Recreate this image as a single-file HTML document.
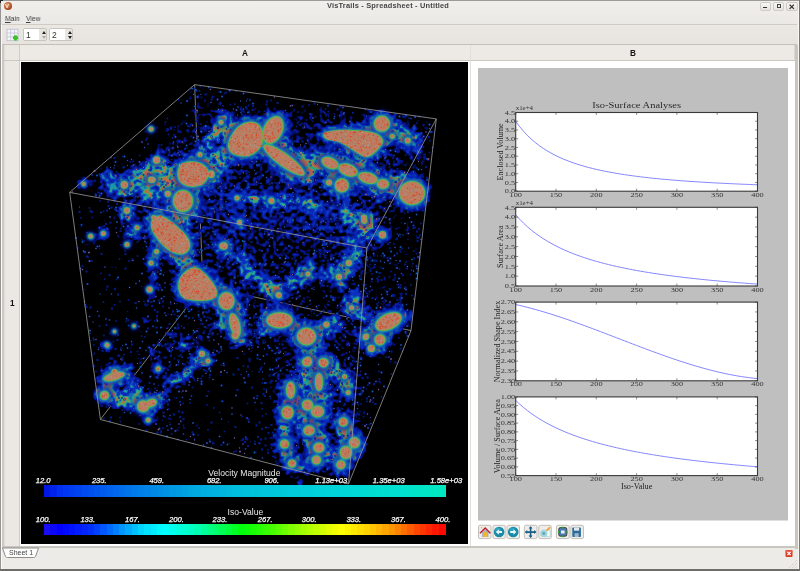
<!DOCTYPE html>
<html><head><meta charset="utf-8"><title>VisTrails - Spreadsheet - Untitled</title>
<style>
html,body{margin:0;padding:0}
body{width:800px;height:571px;overflow:hidden;position:relative;background:#edebe7;font-family:"Liberation Sans", sans-serif;}
.a{position:absolute}
.t{position:absolute;white-space:nowrap;line-height:1;will-change:transform}
svg{will-change:transform}
</style></head><body>

<div class="a" style="left:0;top:0;width:800px;height:1px;background:#9d9b97"></div>
<div class="a" style="left:0;top:0;width:1px;height:571px;background:#969594"></div>
<div class="a" style="left:798px;top:1px;width:1px;height:568px;background:#fbf8f4"></div><div class="a" style="left:799px;top:0;width:1px;height:571px;background:#7a7672"></div>
<div class="a" style="left:0;top:569px;width:800px;height:2px;background:#6f6d6a"></div>
<div class="a" style="left:0;top:0;width:3px;height:3px;background:#222"></div>
<div class="a" style="left:2px;top:25px;width:796px;height:19px;background:linear-gradient(#ebe8e4,#e7e4df)"></div>
<div class="a" style="left:1px;top:1px;width:797px;height:23px;background:linear-gradient(#f1efec,#ebe9e5)"></div>
<div class="a" style="left:4px;top:2px;width:8px;height:8px;border-radius:50%;background:radial-gradient(circle at 40% 35%,#e8a070,#a04418 70%,#5a2008)"></div>
<div class="t" style="left:5px;top:3px;font-size:6px;font-weight:bold;color:#f5e8dc">V</div>
<div class="t" style="left:326.5px;top:2px;font-size:7.4px;font-weight:bold;color:#454545;letter-spacing:0.2px">VisTrails - Spreadsheet - Untitled</div>
<div class="a" style="left:759.5px;top:2px;width:11.5px;height:8.8px;border:1px solid #cfccc7;border-radius:2px;background:linear-gradient(#f8f7f5,#e6e3de);box-sizing:border-box"></div>
<div class="a" style="left:772.8px;top:2px;width:11.5px;height:8.8px;border:1px solid #cfccc7;border-radius:2px;background:linear-gradient(#f8f7f5,#e6e3de);box-sizing:border-box"></div>
<div class="a" style="left:786px;top:2px;width:11.5px;height:8.8px;border:1px solid #cfccc7;border-radius:2px;background:linear-gradient(#f8f7f5,#e6e3de);box-sizing:border-box"></div>
<div class="a" style="left:763.3px;top:7px;width:4.2px;height:1.2px;background:#333"></div>
<div class="a" style="left:776.5px;top:4px;width:4.5px;height:3.6px;border:1px solid #444;border-top-width:1.6px;box-sizing:border-box"></div>
<svg class="a" style="left:786px;top:2px" width="12" height="9"><path d="M3.6 2.6 L7.9 6.9 M7.9 2.6 L3.6 6.9" stroke="#333" stroke-width="1.3"/></svg>
<div class="t" style="left:5.2px;top:15.2px;font-size:7.6px;color:#404040;transform:scaleX(0.89);transform-origin:0 0"><span style="text-decoration:underline;text-underline-offset:0.5px">M</span>ain</div>
<div class="t" style="left:25.6px;top:15.2px;font-size:7.6px;color:#404040;transform:scaleX(0.89);transform-origin:0 0"><span style="text-decoration:underline;text-underline-offset:0.5px">V</span>iew</div>
<div class="a" style="left:2px;top:24px;width:795px;height:1px;background:#cfcbc5"></div>
<svg class="a" style="left:6px;top:28px" width="14" height="14"><rect x="1" y="1.2" width="11" height="11.5" fill="#f4f4fb" stroke="#b9b9c8" stroke-width="0.8"/><path d="M4.7 1.2V12.7 M8.4 1.2V12.7 M1 5H12 M1 8.8H12" stroke="#c4c4d4" stroke-width="0.8"/><path d="M9.5 7.2 V12.4 M6.9 9.8 H12.1" stroke="#3cc028" stroke-width="2.8"/></svg>
<div class="a" style="left:23px;top:28px;width:24px;height:13px;border:1px solid #c8c4be;border-radius:2px;background:#e9e6e1;box-sizing:border-box"></div>
<div class="a" style="left:24px;top:29px;width:15px;height:11px;background:#fff"></div>
<div class="t" style="left:25.5px;top:30.5px;font-size:8.5px;color:#333">1</div>
<div class="a" style="left:42px;top:31px;width:0;height:0;border-left:2.5px solid transparent;border-right:2.5px solid transparent;border-bottom:3px solid #222"></div>
<div class="a" style="left:42px;top:36px;width:0;height:0;border-left:2.5px solid transparent;border-right:2.5px solid transparent;border-top:3px solid #aaa"></div>
<div class="a" style="left:49px;top:28px;width:24px;height:13px;border:1px solid #c8c4be;border-radius:2px;background:#e9e6e1;box-sizing:border-box"></div>
<div class="a" style="left:50px;top:29px;width:15px;height:11px;background:#fff"></div>
<div class="t" style="left:51.5px;top:30.5px;font-size:8.5px;color:#333">2</div>
<div class="a" style="left:68px;top:31px;width:0;height:0;border-left:2.5px solid transparent;border-right:2.5px solid transparent;border-bottom:3px solid #222"></div>
<div class="a" style="left:68px;top:36px;width:0;height:0;border-left:2.5px solid transparent;border-right:2.5px solid transparent;border-top:3px solid #222"></div>
<div class="a" style="left:2px;top:44px;width:795px;height:1px;background:#c3bfb9"></div>
<div class="a" style="left:3px;top:45px;width:792px;height:15px;background:#edeae6"></div>
<div class="a" style="left:2px;top:60px;width:793px;height:1px;background:#cdc8c2"></div>
<div class="a" style="left:2px;top:45px;width:17px;height:502px;background:#ebe8e4"></div>
<div class="a" style="left:19px;top:45px;width:1px;height:502px;background:#d2cdc7"></div>
<div class="a" style="left:2px;top:45px;width:2px;height:502px;background:#cdc9c4"></div>
<div class="a" style="left:4px;top:45px;width:1px;height:502px;background:#e0dcd8"></div>
<div class="a" style="left:2px;top:60px;width:18px;height:1px;background:#cdc8c2"></div>
<div class="a" style="left:1px;top:25px;width:1px;height:544px;background:#fbfaf9"></div>
<div class="a" style="left:20px;top:61px;width:775px;height:486px;background:#fff"></div>
<div class="a" style="left:469.5px;top:45px;width:1px;height:502px;background:#e2ded9"></div>
<div class="a" style="left:794px;top:45px;width:1px;height:15px;background:#dad6d0"></div>
<div class="a" style="left:795px;top:45px;width:3px;height:504px;background:#c9c5bf"></div>
<div class="a" style="left:2px;top:546px;width:796px;height:2px;background:#c9c5bf"></div>
<div class="t" style="left:242px;top:49.5px;font-size:8.2px;font-weight:bold;color:#111">A</div>
<div class="t" style="left:629.6px;top:49.5px;font-size:8.2px;font-weight:bold;color:#111">B</div>
<div class="t" style="left:9.5px;top:300px;font-size:8.2px;font-weight:bold;color:#111">1</div>
<svg class="a" style="left:0;top:546px" width="60" height="14"><path d="M2.5 2 L5.5 10.5 Q6 11.5 7.5 11.5 L33.5 11.5 Q35 11.5 35.5 10.5 L38.5 2 Z" fill="#fff" stroke="#8f8c88" stroke-width="1"/></svg>
<div class="t" style="left:8.5px;top:549.3px;font-size:7px;color:#444">Sheet 1</div>
<svg class="a" style="left:784px;top:548px" width="11" height="11"><rect x="1.5" y="2" width="7" height="7" rx="1" fill="#d83a22"/><rect x="1.5" y="2" width="7" height="3" rx="1" fill="#ee6048" opacity="0.7"/><path d="M3.4 3.9 L6.6 7.1 M6.6 3.9 L3.4 7.1" stroke="#fff" stroke-width="1.3"/></svg>
<svg class="a" style="left:786px;top:557px" width="12" height="12"><path d="M11 3 L3 11 M11 6 L6 11 M11 9 L9 11" stroke="#c8c4be" stroke-width="0.9" stroke-dasharray="1 1"/></svg>
<svg class="a" style="left:21px;top:62px" width="447" height="482" viewBox="21 62 447 482">
<defs><filter id="b6" x="-50%" y="-50%" width="200%" height="200%"><feGaussianBlur stdDeviation="5"/></filter><filter id="b3" x="-50%" y="-50%" width="200%" height="200%"><feGaussianBlur stdDeviation="2.2"/></filter><filter id="b1" x="-50%" y="-50%" width="200%" height="200%"><feGaussianBlur stdDeviation="0.9"/></filter><filter id="b0" x="-50%" y="-50%" width="200%" height="200%"><feGaussianBlur stdDeviation="0.5"/></filter></defs>
<rect x="21" y="62" width="447" height="482" fill="#000"/>
<defs><filter id="iso" filterUnits="userSpaceOnUse" x="22" y="62" width="446" height="482" color-interpolation-filters="sRGB"><feTurbulence type="fractalNoise" baseFrequency="0.3" numOctaves="3" seed="11" result="n"/><feColorMatrix in="n" type="matrix" values="0 0 0 0 0  0 0 0 0 0  0 0 0 0 0  3.0 0 0 0 -1.000" result="na"/><feGaussianBlur in="SourceAlpha" stdDeviation="2" result="d"/><feComposite in="na" in2="d" operator="arithmetic" k1="0" k2="0.4" k3="0.62" k4="0" result="S0"/><feGaussianBlur in="S0" stdDeviation="0.8" result="S"/><feComponentTransfer in="S" result="l1a"><feFuncA type="linear" slope="14" intercept="-5.880"/></feComponentTransfer><feFlood flood-color="#06128a" result="l1c"/><feComposite in="l1c" in2="l1a" operator="in" result="l1"/><feComponentTransfer in="S" result="l2a"><feFuncA type="linear" slope="14" intercept="-7.140"/></feComponentTransfer><feFlood flood-color="#0a2ec0" result="l2c"/><feComposite in="l2c" in2="l2a" operator="in" result="l2"/><feComponentTransfer in="S" result="l3a"><feFuncA type="linear" slope="14" intercept="-8.680"/></feComponentTransfer><feFlood flood-color="#1a98a8" result="l3c"/><feComposite in="l3c" in2="l3a" operator="in" result="l3"/><feComponentTransfer in="S" result="l4a"><feFuncA type="linear" slope="14" intercept="-9.800"/></feComponentTransfer><feFlood flood-color="#50b050" result="l4c"/><feComposite in="l4c" in2="l4a" operator="in" result="l4"/><feComponentTransfer in="S" result="l5a"><feFuncA type="linear" slope="14" intercept="-10.500"/></feComponentTransfer><feFlood flood-color="#c06848" result="l5c"/><feComposite in="l5c" in2="l5a" operator="in" result="l5"/><feMerge><feMergeNode in="l1"/><feMergeNode in="l2"/><feMergeNode in="l3"/><feMergeNode in="l4"/><feMergeNode in="l5"/></feMerge></filter></defs>
<mask id="vm" maskUnits="userSpaceOnUse" x="22" y="62" width="446" height="482"><rect x="22" y="62" width="446" height="482" fill="#fff"/><g fill="#000" filter="url(#b6)"><ellipse cx="118" cy="290" rx="30" ry="55"/><ellipse cx="120" cy="140" rx="45" ry="22"/><ellipse cx="160" cy="110" rx="25" ry="15"/><ellipse cx="228" cy="408" rx="42" ry="32"/><ellipse cx="400" cy="415" rx="28" ry="50"/><ellipse cx="285" cy="97" rx="70" ry="7"/><ellipse cx="120" cy="425" rx="25" ry="15"/><ellipse cx="85" cy="215" rx="15" ry="25"/></g></mask>
<defs><g id="dens"><g mask="url(#vm)"><g filter="url(#b3)"><g fill="#fff" filter="url(#b6)"><path d="M194.6 84.6 L436.3 118.9 L411 330.6 L348.5 484 L100.4 419.5 L69.7 192.4Z" fill-opacity="0.160"/><path d="M194.6 84.6 L436.3 118.9 L366.9 248 L69.7 192.4Z" fill-opacity="0.160"/><path d="M120 160 L250 110 L430 130 L430 230 L380 250 L240 235 L150 250Z" fill-opacity="0.100"/><path d="M200 220 L380 240 L420 300 L380 345 L270 330 L215 300Z" fill-opacity="0.120"/><path d="M265 335 L360 330 L372 420 L355 478 L275 475 L268 420Z" fill-opacity="0.180"/><path d="M130 180 L230 180 L250 300 L240 350 L190 300 L140 250Z" fill-opacity="0.140"/><path d="M225 188 L362 200 L380 260 L300 290 L230 270Z" fill-opacity="0.120"/></g><g fill="#fff" opacity="1.0"><path d="M99 236h0M123.0 330.5h0M176.5 335.0h0M224.0 319.5h0" stroke="#fff" stroke-width="1.0" stroke-opacity="0.4" stroke-linecap="round" fill="none"/><path d="M150.5 352.5h0M192 333h0M189.0 339.5h0M181 342h0M219.5 323.0h0M242.5 308.5h0M125.5 273.0h0" stroke="#fff" stroke-width="1.0" stroke-opacity="0.6" stroke-linecap="round" fill="none"/><path d="M173.0 333.5h0M216.5 327.5h0M222.5 324.0h0" stroke="#fff" stroke-width="1.0" stroke-opacity="0.8" stroke-linecap="round" fill="none"/><path d="M223 323h0M200.5 361.0h0" stroke="#fff" stroke-width="1.0" stroke-opacity="1.0" stroke-linecap="round" fill="none"/><path d="M138.0 193.5h0M166.5 175.0h0M218.5 147.0h0M259 132h0M273 169h0M367.5 165.0h0M407 152h0M142.0 180.5h0M158.5 189.0h0M180 251h0M225.5 309.0h0M245.0 335.5h0M250 333h0M309.5 350.5h0M284.5 421.0h0M383.5 343.5h0M131.5 379.0h0M153.0 398.5h0M208 361h0M142.0 304.5h0M149.5 292.0h0M135.5 316.5h0M145.0 296.5h0M120.0 333.5h0M133.0 242.5h0M205.5 147.5h0M268.5 205.0h0M106 397h0M113 337h0M139.5 358.0h0M184.5 338.5h0M168.5 348.5h0M185 348h0M233.5 313.5h0M95 297h0" stroke="#fff" stroke-width="1.5" stroke-opacity="0.4" stroke-linecap="round" fill="none"/><path d="M110 189h0M117.5 189.0h0M118 191h0M128 183h0M183 171h0M255.5 138.0h0M266 120h0M275 132h0M288 147h0M269.0 129.5h0M296.0 179.5h0M319 160h0M353.5 165.0h0M409.0 193.5h0M234.5 129.5h0M405.5 136.5h0M381.0 126.5h0M386 133h0M142.0 116.5h0M164.0 170.5h0M213.0 299.5h0M298.5 323.5h0M365.5 321.0h0M345 272h0M333.0 278.5h0M317.0 359.5h0M300.5 373.5h0M299.5 392.0h0M315.5 409.5h0M302 459h0M286.0 443.5h0M348.5 455.5h0M382.5 332.5h0M336.0 374.5h0M337.0 378.5h0M130.0 372.5h0M130 378h0M185.5 372.5h0M233 263h0M236.5 258.0h0M292 291h0M152.0 255.5h0M138.5 299.0h0M150 283h0M128.5 326.0h0M128 323h0M116.0 333.5h0M129.5 235.0h0M99.5 238.5h0M266 208h0M292.5 208.5h0M370 219h0M112.5 369.0h0M116 378h0M108 390h0M133 411h0M150.0 353.5h0M127.0 368.5h0M142.5 356.5h0M141 355h0M176.5 347.0h0M191.5 335.0h0M191.5 342.0h0M207 356h0M203.5 329.0h0M94.5 294.5h0M128.0 271.5h0" stroke="#fff" stroke-width="1.5" stroke-opacity="0.6" stroke-linecap="round" fill="none"/><path d="M126.0 180.5h0M230.0 141.5h0M254.0 128.5h0M280.0 167.5h0M340 170h0M339.0 164.5h0M390.5 137.0h0M160.5 155.0h0M172.5 235.0h0M175.5 243.5h0M307.5 330.5h0M315.0 324.5h0M371 315h0M417.0 310.5h0M342.0 288.5h0M303.5 389.5h0M336 374h0M324.5 455.5h0M277.0 421.5h0M281.0 423.5h0M348.5 434.0h0M357.5 438.0h0M384 341h0M106.5 381.5h0M181.5 386.0h0M189 375h0M179.5 377.5h0M195.5 361.5h0M145.5 285.5h0M140.5 308.5h0M130.0 326.5h0M117 330h0M125.5 326.5h0M111.5 337.0h0M121.5 242.0h0M120.5 235.0h0M110.5 238.0h0M124.5 241.5h0M125.5 240.5h0M210.5 140.0h0M209 136h0M374.0 231.5h0M115.0 373.5h0M105.5 377.5h0M137.5 403.5h0M110.0 341.5h0M147.0 355.5h0M156.0 355.5h0M233.0 310.5h0" stroke="#fff" stroke-width="1.5" stroke-opacity="0.8" stroke-linecap="round" fill="none"/><path d="M352 134h0M408.5 134.5h0M397.5 140.0h0M155 128h0M159.5 183.0h0M199 262h0M240.5 319.5h0M353.5 287.5h0M349 284h0M301.5 372.0h0M313 369h0M322.5 458.5h0M293.5 448.5h0M340.0 456.5h0M379.5 348.0h0M377.5 343.0h0M366.5 330.0h0M143.0 398.5h0M202 352h0M155.0 256.5h0M151 282h0M132.5 326.5h0M136.0 231.5h0M221.5 125.0h0M247.0 195.5h0M108 387h0M138 400h0M137.5 408.0h0M131.5 325.5h0M173 344h0M181 375h0M236.5 310.5h0" stroke="#fff" stroke-width="1.5" stroke-opacity="1.0" stroke-linecap="round" fill="none"/><path d="M148.0 176.5h0M186.5 171.5h0M215.5 172.0h0M229 148h0M210.5 169.0h0M243 157h0M226.5 156.0h0M259.5 135.0h0M248 133h0M249.5 144.0h0M281.5 149.5h0M283.0 152.5h0M370 180h0M237.5 135.0h0M228.0 131.5h0M375 122h0M355 138h0M398.0 137.5h0M392.5 140.5h0M154.5 161.5h0M154 181h0M158 199h0M181.5 197.5h0M179.5 221.0h0M179.5 216.0h0M192.5 272.0h0M197.5 273.0h0M184.5 257.5h0M200 283h0M244.5 334.5h0M237.5 348.0h0M275 324h0M335 322h0M368 311h0M391 316h0M356.0 249.5h0M350 301h0M345.0 289.5h0M309.5 386.5h0M299 405h0M282 437h0M287.5 426.0h0M109.5 384.0h0M122.5 374.5h0M143.5 396.5h0M139.0 390.5h0M167.5 390.0h0M244 259h0M270.5 280.0h0M288.0 281.5h0M302.5 282.5h0M149.5 259.5h0M121.5 329.0h0M124.0 207.5h0M121.5 241.0h0M213.5 125.5h0M348.5 217.5h0M112.5 339.0h0M137.5 362.5h0M128.0 368.5h0M180 376h0M165 383h0M122.5 272.5h0M125 274h0" stroke="#fff" stroke-width="2.0" stroke-opacity="0.4" stroke-linecap="round" fill="none"/><path d="M118 196h0M114.5 187.5h0M103.5 194.5h0M106.5 196.0h0M126.5 185.0h0M137.5 180.0h0M164.5 176.5h0M154 175h0M171.5 170.5h0M164 196h0M185 172h0M187.5 170.0h0M203 183h0M218.5 172.5h0M213 171h0M216.5 162.5h0M211.5 164.0h0M217.0 159.5h0M262.0 139.5h0M261 131h0M270.5 132.0h0M259 130h0M272 140h0M267.0 139.5h0M270 138h0M277.0 139.5h0M279.0 132.5h0M295 169h0M291.5 152.5h0M312 155h0M336 152h0M340.5 159.5h0M373.0 173.5h0M372.5 174.0h0M396 179h0M400.5 172.5h0M241.5 133.5h0M242.5 136.0h0M226.0 123.5h0M336.5 137.5h0M356 133h0M385 129h0M407.5 142.0h0M392.5 135.5h0M421.5 161.0h0M157.0 139.5h0M146.0 169.5h0M153.5 184.5h0M142.5 192.5h0M181 195h0M172.0 212.5h0M184.0 216.5h0M184.5 209.5h0M188.5 225.5h0M190 275h0M193 275h0M180 261h0M178.5 246.0h0M208.5 281.0h0M192 288h0M216.0 296.5h0M184.5 290.5h0M201.5 282.5h0M232.5 329.5h0M232.5 298.0h0M243.0 338.5h0M246.0 325.5h0M245.5 344.0h0M271.5 325.5h0M288 322h0M321.5 325.5h0M311 331h0M366.5 314.5h0M356.0 306.5h0M369.5 318.0h0M356.5 317.0h0M398.0 313.5h0M373 231h0M368 225h0M348 255h0M305 398h0M314.5 383.0h0M318.5 409.0h0M306.0 391.5h0M311.5 418.5h0M319.5 429.0h0M310.5 456.0h0M278.5 382.5h0M294.5 404.5h0M288.0 424.5h0M284 418h0M277 437h0M285 443h0M276 446h0M289.5 443.5h0M354.0 427.5h0M377.0 339.5h0M365.0 338.5h0M353 372h0M116.0 371.5h0M142.5 398.5h0M135 393h0M138.5 403.5h0M164 387h0M173.0 387.5h0M183 371h0M201.0 351.5h0M266.0 287.5h0M153.5 277.5h0M150.5 278.5h0M136.5 322.5h0M126.5 223.5h0M98.5 238.5h0M104 242h0M120 241h0M204 139h0M218 128h0M251.5 202.5h0M269 203h0M343.5 211.0h0M369 238h0M112.5 387.5h0M122.5 333.0h0M167.5 333.5h0M132.0 362.5h0M158.0 341.5h0M176.5 343.5h0M223 324h0M185.5 345.0h0M183.5 373.0h0M173.0 383.5h0M247 299h0M202.5 334.5h0M248.5 302.5h0M220 322h0" stroke="#fff" stroke-width="2.0" stroke-opacity="0.6" stroke-linecap="round" fill="none"/><path d="M105 192h0M154 176h0M143.5 193.5h0M180.0 179.5h0M186 173h0M184.0 157.5h0M180.5 158.5h0M206 172h0M221.5 161.5h0M219.5 164.0h0M234.5 143.0h0M231.5 152.0h0M263.5 134.0h0M271.5 124.0h0M282.5 135.0h0M299.0 173.5h0M291.5 162.0h0M295.5 170.5h0M308.0 160.5h0M319 182h0M307.5 154.0h0M331 169h0M375 186h0M377.0 169.5h0M374 178h0M412.5 201.5h0M228.5 137.0h0M237.5 147.5h0M235.0 134.5h0M249 136h0M235 133h0M335.0 133.5h0M346.0 147.5h0M367.5 135.0h0M413.5 150.0h0M413.0 158.5h0M400 132h0M149.0 141.5h0M152.0 140.5h0M150.0 166.5h0M151.5 144.5h0M146 170h0M148.5 184.0h0M159.5 191.5h0M162 190h0M179.0 204.5h0M171.5 194.5h0M182.5 212.5h0M158.0 190.5h0M174.5 195.0h0M181.0 211.5h0M169.0 222.5h0M163.5 214.0h0M203.5 278.5h0M180.0 259.5h0M173.0 231.5h0M174 252h0M166.5 235.0h0M199.0 290.5h0M212.5 306.5h0M222.0 303.5h0M238.5 330.0h0M241.0 333.5h0M225 332h0M233.5 331.0h0M264 330h0M285.0 327.5h0M301 328h0M320 325h0M347.0 306.5h0M362.5 311.0h0M384 319h0M353.5 308.0h0M386.0 311.5h0M416 307h0M374 237h0M344.0 252.5h0M339 284h0M313.5 351.5h0M312.5 366.5h0M310.0 387.5h0M309 411h0M325.0 468.5h0M310.5 455.5h0M295.5 418.5h0M281.5 426.0h0M283.5 465.0h0M351.0 442.5h0M343.5 460.5h0M379.5 346.0h0M374 343h0M369.5 341.0h0M324 366h0M138 378h0M177.0 384.5h0M183 371h0M263 282h0M312.5 273.0h0M148.5 288.5h0M155.5 254.5h0M150.5 274.5h0M145.5 301.5h0M136 318h0M125.5 230.0h0M123.5 216.0h0M125.0 227.5h0M128.0 226.5h0M96.5 237.5h0M120.5 240.5h0M204 151h0M202.5 148.5h0M277.0 197.5h0M241.5 212.5h0M234.5 198.5h0M242.5 198.5h0M338 216h0M113.5 385.5h0M108.0 383.5h0M119.5 400.5h0M116.5 400.5h0M168.5 338.5h0M135.0 360.5h0M174.5 334.0h0M166.0 352.5h0M195.5 342.0h0M225.5 320.5h0M231.5 312.0h0M204.5 330.0h0" stroke="#fff" stroke-width="2.0" stroke-opacity="0.8" stroke-linecap="round" fill="none"/><path d="M192 174h0M198.5 185.5h0M204.0 174.5h0M191.0 173.5h0M213.0 159.5h0M250 147h0M271 126h0M303 176h0M298.5 176.5h0M344.0 161.5h0M345.5 173.5h0M351.5 125.5h0M388.5 122.0h0M405.0 145.5h0M421 144h0M165.5 161.0h0M162.5 221.0h0M198.5 278.0h0M269.0 334.5h0M273.0 325.5h0M311.0 335.5h0M350.5 313.5h0M362.5 308.0h0M391.5 330.0h0M407.5 316.5h0M373.5 227.5h0M354.5 256.0h0M309.5 343.5h0M311.0 356.5h0M302.0 449.5h0M288.0 414.5h0M337.0 426.5h0M343.5 445.5h0M344.0 451.5h0M369.5 348.5h0M150.0 404.5h0M151.0 402.5h0M154.5 396.5h0M150.0 271.5h0M137 322h0M127.5 213.0h0M129.0 213.5h0M132.0 245.5h0M120.0 238.5h0M94.0 237.5h0M334.0 212.5h0M108.5 385.0h0M131.5 403.0h0M121.0 405.5h0M147.0 316.5h0M147.0 349.5h0M194 340h0M215.5 352.5h0" stroke="#fff" stroke-width="2.0" stroke-opacity="1.0" stroke-linecap="round" fill="none"/><path d="M177.5 170.5h0M213.5 186.5h0M205.0 165.5h0M231 143h0M225.5 165.0h0M230 155h0M272 124h0M276.0 161.5h0M290.0 175.5h0M325.5 163.5h0M303.0 173.5h0M303.5 166.0h0M391.0 185.5h0M355.0 137.5h0M376 137h0M367.5 140.5h0M370.5 127.5h0M154.5 164.0h0M184.0 193.5h0M175.5 219.5h0M179 258h0M306.5 337.5h0M302.0 347.5h0M310.5 334.5h0M417 319h0M353.0 303.5h0M353.5 303.0h0M342.5 425.0h0M361.5 450.5h0M349.0 458.5h0M369 335h0M327.5 366.0h0M104.5 381.5h0M182.5 364.0h0M251.5 272.5h0M134.0 323.5h0M119 330h0M112 333h0M126.5 239.0h0M130.5 239.0h0M116.5 374.0h0M106.5 378.0h0M170.5 346.5h0M190.5 367.0h0M213.5 328.0h0M199.5 331.0h0M235 309h0M111.5 281.0h0" stroke="#fff" stroke-width="2.5" stroke-opacity="0.4" stroke-linecap="round" fill="none"/><path d="M139.0 184.5h0M127.5 186.5h0M154.5 168.0h0M177.0 176.5h0M182.5 165.0h0M171 175h0M218 171h0M234.5 158.0h0M227 161h0M212.5 168.5h0M234.5 153.5h0M232.5 143.5h0M255.5 139.0h0M260.5 138.5h0M278.5 117.5h0M282.5 138.5h0M350.5 168.0h0M364 181h0M360.5 167.5h0M377.0 184.5h0M366.5 178.0h0M398.5 195.5h0M392 190h0M349.5 135.5h0M394 128h0M407.0 126.5h0M413.5 149.0h0M154 164h0M148.5 144.5h0M164.5 140.5h0M151 151h0M146.0 169.5h0M149.0 183.5h0M141.5 187.5h0M159 193h0M158.5 191.0h0M161.5 230.0h0M197.5 268.0h0M202.5 309.0h0M196.5 294.0h0M218.5 303.0h0M221.5 290.5h0M235.0 316.5h0M234.5 332.0h0M238.5 346.0h0M239 346h0M269.0 331.5h0M286 326h0M329 322h0M360.5 235.0h0M332.5 287.0h0M308.5 359.5h0M306.0 395.5h0M311 372h0M314 391h0M324 440h0M304.0 417.5h0M310.5 441.5h0M329.5 462.5h0M314.5 460.5h0M285.5 420.5h0M285.0 382.5h0M348.5 427.5h0M361.0 432.5h0M348.5 449.0h0M342.0 452.5h0M376.0 344.5h0M373 345h0M332.5 367.5h0M353.5 379.5h0M147 406h0M160 389h0M165 402h0M181.0 382.5h0M185.0 384.5h0M199.0 367.5h0M245.5 266.5h0M253.0 269.5h0M282.5 291.5h0M328.5 281.5h0M156.0 263.5h0M125 244h0M135.5 241.0h0M107.5 238.0h0M117.5 243.0h0M216.0 131.5h0M220.5 120.5h0M218.0 129.5h0M294.5 203.5h0M113.5 369.5h0M110.5 375.0h0M142.0 403.5h0M127.5 403.5h0M138 406h0M117.5 335.5h0M108 345h0M179.5 338.0h0M202.0 358.5h0M165.0 387.5h0M233.0 312.5h0" stroke="#fff" stroke-width="2.5" stroke-opacity="0.6" stroke-linecap="round" fill="none"/><path d="M113.5 190.0h0M108 179h0M112.5 181.0h0M134.0 182.5h0M149.5 188.5h0M163.5 177.5h0M173.5 163.5h0M200.5 168.5h0M221.5 168.0h0M231.5 150.0h0M226.5 162.5h0M228.5 163.5h0M242 147h0M256.5 142.0h0M253 142h0M253 141h0M280 147h0M284.5 151.5h0M275.5 129.0h0M275 151h0M353.5 172.0h0M340 168h0M381.0 186.5h0M378.5 193.0h0M232.5 130.5h0M239.5 138.5h0M241.5 133.0h0M348.5 138.0h0M353 136h0M336 138h0M373 122h0M373.5 126.5h0M370.5 130.0h0M415 148h0M416 148h0M151 144h0M139.0 177.5h0M149 188h0M159.5 178.0h0M175.5 195.0h0M178.0 229.5h0M184.5 202.5h0M175 229h0M195.0 261.5h0M194.5 272.5h0M170.5 249.0h0M172.5 241.5h0M177.5 246.5h0M226.5 293.5h0M214.0 297.5h0M235.5 294.0h0M228.5 336.5h0M237.5 336.0h0M246.5 343.0h0M245.0 346.5h0M285 325h0M378.5 324.0h0M363 306h0M338.5 283.5h0M304.5 344.0h0M311.5 327.0h0M308.5 414.0h0M316.5 406.5h0M304.5 401.0h0M313.0 411.5h0M312 406h0M312.5 435.0h0M317.5 447.0h0M308.5 468.0h0M317 472h0M295.5 464.5h0M287.0 427.5h0M343 456h0M352 465h0M189.5 375.0h0M346.5 273.5h0M152 283h0M141.5 302.5h0M144.5 295.0h0M115 328h0M105.5 345.5h0M126 225h0M124 232h0M136.0 233.5h0M127.0 240.5h0M134.5 232.0h0M202 151h0M204.5 151.0h0M267.5 197.5h0M263.5 199.0h0M307.0 204.5h0M276.5 204.0h0M272.5 205.0h0M325.0 199.5h0M107.0 385.5h0M119.5 405.5h0M139 403h0M156.0 345.5h0M201 327h0M185.5 349.5h0M200 334h0M219.5 320.0h0" stroke="#fff" stroke-width="2.5" stroke-opacity="0.8" stroke-linecap="round" fill="none"/><path d="M107 190h0M107.0 182.5h0M133.5 182.0h0M139.5 186.0h0M151.5 180.5h0M173.0 164.5h0M217.5 168.5h0M227.0 150.5h0M244 135h0M340 165h0M387.5 173.5h0M411.5 134.5h0M392.5 131.5h0M162.5 186.0h0M161.5 179.0h0M172 196h0M209.5 289.0h0M226.0 298.5h0M219.5 284.0h0M248.0 355.5h0M230 326h0M307.0 325.5h0M289.0 341.5h0M305.0 331.5h0M366.0 218.5h0M279.5 410.0h0M298.5 427.5h0M352 439h0M365.5 337.5h0M120 380h0M123.0 373.5h0M188.0 374.5h0M330.5 282.0h0M147.5 286.5h0M123.5 218.0h0M128 226h0M130.5 240.0h0M215 129h0M383 234h0M132.0 406.5h0M192.5 365.0h0" stroke="#fff" stroke-width="2.5" stroke-opacity="1.0" stroke-linecap="round" fill="none"/><path d="M155.0 175.5h0M172.5 179.0h0M222.5 154.0h0M251.5 144.5h0M276.5 129.0h0M289 170h0M346.5 160.0h0M355.0 136.5h0M371.0 123.5h0M369.0 138.5h0M384.5 119.5h0M381 129h0M170 187h0M205.5 291.5h0M255.5 337.5h0M354.5 252.0h0M349.0 260.5h0M354.5 279.5h0M305.5 339.0h0M301.5 371.0h0M319.5 438.5h0M344.5 434.0h0M344.0 454.5h0M382 344h0M138 383h0M149.5 401.0h0M179.5 386.0h0M174.0 377.5h0M245.5 272.0h0M311.0 282.5h0M156.0 265.5h0M213 132h0M291 202h0M291.5 201.5h0M269.5 199.5h0M297.5 198.0h0M106.0 397.5h0M115.0 405.5h0M127.5 398.5h0M147.5 315.5h0M124.0 333.5h0M123.5 332.5h0M188 372h0M181.5 376.0h0" stroke="#fff" stroke-width="3.0" stroke-opacity="0.4" stroke-linecap="round" fill="none"/><path d="M134.5 185.0h0M152.5 182.5h0M167.0 180.5h0M156 163h0M167 185h0M189 178h0M248 149h0M245.5 137.0h0M282 137h0M280.0 142.5h0M282 167h0M311.0 161.5h0M315.5 160.5h0M346.0 167.5h0M369.5 182.5h0M358.5 169.5h0M393.5 184.0h0M415.5 192.5h0M239.5 124.5h0M358.0 133.5h0M353.5 141.5h0M347.5 133.0h0M348.5 133.0h0M398.5 135.0h0M386.0 130.5h0M398 127h0M401.5 130.0h0M147.0 152.5h0M157.5 159.0h0M160.5 176.0h0M146.5 163.5h0M164.0 186.5h0M169.0 188.5h0M176.5 198.5h0M178.5 252.5h0M175.5 277.5h0M178.5 233.5h0M186.0 276.5h0M175.5 253.5h0M219.0 279.5h0M224.0 300.5h0M214 304h0M220.5 306.5h0M230.0 310.5h0M236.5 339.0h0M254.5 338.5h0M325.5 322.5h0M319.5 328.0h0M338 319h0M403.5 303.0h0M366.5 230.5h0M360.5 228.0h0M354.5 250.5h0M342.5 275.0h0M310.5 359.0h0M317 386h0M287.5 426.0h0M283 452h0M285.5 441.5h0M344.0 434.5h0M355.0 440.5h0M378 335h0M335.0 367.5h0M129.5 375.5h0M134.0 375.5h0M127.5 379.5h0M142 383h0M149.0 403.5h0M241.0 261.5h0M243.5 262.5h0M254.5 272.0h0M321.5 276.5h0M135 323h0M145.5 292.0h0M108.0 340.5h0M112.0 333.5h0M130.5 213.0h0M127.0 228.5h0M132.0 236.5h0M103.5 236.5h0M97.5 240.0h0M221.0 130.5h0M294.5 205.5h0M331.5 209.0h0M329.5 206.5h0M118.0 402.5h0M181.5 341.5h0M175.0 346.5h0M217 325h0M197 340h0M220.0 324.5h0M228.5 315.5h0M237.5 312.0h0M101.5 289.0h0" stroke="#fff" stroke-width="3.0" stroke-opacity="0.6" stroke-linecap="round" fill="none"/><path d="M101.0 192.5h0M122 191h0M140.5 183.5h0M126.0 185.5h0M190.5 173.0h0M212.5 151.0h0M230.5 148.5h0M226 144h0M229.5 157.0h0M242.5 145.0h0M255.0 130.5h0M261.5 125.0h0M298 165h0M301.0 165.5h0M330.0 155.5h0M347.5 180.5h0M359 163h0M362.0 171.5h0M351.5 170.0h0M390.0 177.5h0M376.5 180.5h0M384.5 180.5h0M389.5 178.0h0M231 129h0M219.0 124.5h0M221 126h0M359.0 141.5h0M354.0 132.5h0M409 132h0M408.5 145.5h0M152.5 160.0h0M142 134h0M159.5 154.5h0M156.5 184.0h0M152.5 193.0h0M155.0 191.5h0M165.5 249.0h0M162.0 232.5h0M177 239h0M230 305h0M232.5 301.5h0M224.5 313.0h0M229.0 312.5h0M241.5 332.5h0M227 327h0M254.0 344.5h0M263 317h0M340 326h0M352.5 316.5h0M334.5 316.5h0M385.0 321.5h0M299.5 370.5h0M315.5 368.5h0M314.5 373.0h0M304 373h0M313.5 407.5h0M308.0 430.5h0M311.0 426.5h0M328.5 456.5h0M290.5 410.5h0M293 400h0M284.5 430.0h0M342.5 463.0h0M369.5 334.5h0M319.5 363.0h0M159.5 403.5h0M224.5 244.0h0M291.5 296.0h0M286.5 295.0h0M144.0 283.5h0M152.0 255.5h0M140.0 309.5h0M113.0 334.5h0M114.5 344.0h0M134.5 242.5h0M127.5 240.5h0M128.5 246.5h0M112.5 243.0h0M105 240h0M214.5 129.0h0M337.0 216.5h0M372.5 216.5h0M143.5 404.5h0M125 398h0M163.5 340.0h0M169.0 333.5h0M163.5 388.5h0M199.0 333.5h0" stroke="#fff" stroke-width="3.0" stroke-opacity="0.8" stroke-linecap="round" fill="none"/><path d="M155.5 183.5h0M184.5 181.5h0M190.0 175.5h0M277.5 155.5h0M342 182h0M380.0 180.5h0M394.5 195.0h0M404.5 177.0h0M403.5 137.0h0M378 125h0M143.5 160.0h0M175 220h0M169.0 220.5h0M236.0 318.5h0M242.5 324.0h0M357.5 307.0h0M318.0 349.5h0M310.0 358.5h0M313 389h0M308.5 371.5h0M318.5 387.0h0M291.5 390.0h0M292.5 398.5h0M290 392h0M288 423h0M355.5 447.0h0M344.5 459.0h0M321.5 363.5h0M115.0 371.5h0M115.0 377.5h0M135.5 389.0h0M155.5 397.5h0M176.0 390.5h0M191 362h0M152.5 273.0h0M150.0 295.5h0M138.5 321.5h0M213 137h0M325.5 209.5h0M104.5 379.5h0M138.0 401.5h0M123 404h0M149.5 413.0h0M152 347h0M203.5 332.5h0" stroke="#fff" stroke-width="3.0" stroke-opacity="1.0" stroke-linecap="round" fill="none"/><path d="M220.0 165.5h0M228.0 159.5h0M244.5 138.5h0M242.5 138.5h0M268 131h0M276.5 148.5h0M299.0 171.5h0M289 173h0M316.5 156.5h0M335 170h0M351.5 168.0h0M235 133h0M232.5 137.5h0M396 147h0M420.5 144.0h0M163.0 153.5h0M152.5 181.0h0M174.5 235.5h0M171.5 208.0h0M189 287h0M208.5 288.5h0M239 318h0M330.5 315.0h0M340 463h0M351.0 393.5h0M115.0 378.5h0M131 390h0M135.5 378.5h0M164.5 396.0h0M166.0 396.5h0M169 395h0M182.0 379.5h0M212 349h0M331.5 273.5h0M153.5 265.5h0M151.5 292.0h0M120.0 326.5h0M106.0 341.5h0M131.5 212.0h0M101.5 239.0h0M209.5 134.5h0M120.0 334.5h0M159.0 354.5h0M204.5 336.5h0" stroke="#fff" stroke-width="3.5" stroke-opacity="0.4" stroke-linecap="round" fill="none"/><path d="M115.0 180.5h0M125.5 185.0h0M182.5 182.5h0M210.0 179.5h0M276.5 131.5h0M282.5 174.0h0M293.5 161.0h0M341.5 175.0h0M402.5 190.5h0M389.5 186.0h0M229.0 135.5h0M236 138h0M345.0 136.5h0M345 135h0M354.5 142.5h0M386.0 124.5h0M413.0 142.5h0M155.5 142.5h0M139 172h0M197 196h0M182.5 241.0h0M165.5 226.5h0M172.0 230.5h0M172.5 227.0h0M174.0 212.5h0M181 260h0M181.5 238.5h0M213 288h0M256 342h0M284.5 319.0h0M375.0 317.5h0M403 319h0M376.5 236.5h0M367.0 235.5h0M346.5 294.5h0M309.0 400.5h0M322.0 407.5h0M316.0 413.5h0M330.5 419.5h0M306.0 430.5h0M281.5 393.5h0M282.5 411.5h0M337.5 429.5h0M338.5 426.5h0M343.0 427.5h0M356.0 432.5h0M339.0 460.5h0M367 335h0M342.5 375.5h0M342 385h0M106.5 377.0h0M208 358h0M221.5 249.0h0M158.0 266.5h0M150.5 285.0h0M89.5 232.5h0M212.5 137.5h0M198.5 154.5h0M261 199h0M121.5 408.0h0M125.5 329.5h0M164.0 353.5h0M186.0 347.5h0M179 379h0M211.5 355.5h0M118.5 278.5h0" stroke="#fff" stroke-width="3.5" stroke-opacity="0.6" stroke-linecap="round" fill="none"/><path d="M108.0 176.5h0M131.5 180.5h0M218.0 153.5h0M221.5 171.5h0M258.0 132.5h0M285.5 141.0h0M279.0 137.5h0M277.0 150.5h0M282 154h0M279.5 151.5h0M279.0 159.5h0M342.5 185.5h0M357.5 180.5h0M376 180h0M377.5 183.0h0M401.5 194.0h0M350.0 148.5h0M381.5 127.5h0M360.5 146.0h0M410.5 130.5h0M405.0 126.5h0M401.5 137.0h0M153 127h0M159 124h0M149.0 162.5h0M161.0 181.5h0M175.5 221.5h0M183.0 251.5h0M192 270h0M242 321h0M236.5 325.0h0M240.5 312.5h0M243.5 329.0h0M268.5 320.0h0M349.5 306.0h0M336.5 326.0h0M345 309h0M341 302h0M363.5 221.5h0M343.5 278.5h0M321.5 394.5h0M310.0 406.5h0M314 426h0M309.5 473.0h0M311 478h0M295.5 465.5h0M283.5 394.5h0M301.5 404.5h0M377.5 343.0h0M370.5 334.5h0M141 398h0M163.5 397.0h0M275.5 289.5h0M154.0 286.5h0M153.0 261.5h0M116.0 329.5h0M122.5 243.5h0M360 215h0M352.5 219.0h0M325.0 216.5h0M366.0 223.5h0M108 389h0M137.5 408.0h0M122.0 331.5h0M128.5 331.0h0M153.0 348.5h0M197.0 335.5h0M181.5 346.0h0M190.0 368.5h0M198.0 362.5h0M232.5 313.5h0" stroke="#fff" stroke-width="3.5" stroke-opacity="0.8" stroke-linecap="round" fill="none"/><path d="M183.0 170.5h0M213.5 178.0h0M227.5 147.5h0M233 133h0M318.0 176.5h0M333.5 153.5h0M339.5 158.5h0M359.5 164.0h0M397.5 173.5h0M344.5 143.5h0M404.5 145.5h0M148.0 169.5h0M150.5 165.0h0M149.0 163.5h0M176.0 225.5h0M182.0 222.5h0M185.0 267.5h0M191.0 256.5h0M232.5 347.5h0M318.5 336.5h0M342 301h0M366.5 237.5h0M291.5 393.5h0M288 464h0M361 435h0M326.5 364.0h0M188 378h0M225.0 250.5h0M333 276h0M140 303h0M122.5 238.5h0M300.0 200.5h0M321 207h0M191 340h0M242.5 308.0h0M99 291h0" stroke="#fff" stroke-width="3.5" stroke-opacity="1.0" stroke-linecap="round" fill="none"/><path d="M193.5 171.5h0M223.5 143.0h0M290.5 154.0h0M347.5 173.0h0M375.5 180.5h0M377 181h0M370.0 173.5h0M404.5 195.5h0M374.5 141.5h0M400.5 132.0h0M394.0 138.5h0M182.5 206.5h0M349.0 323.5h0M291.0 348.5h0M312 417h0M334.5 459.5h0M213.5 254.0h0M334.0 279.5h0M108.0 397.5h0M144.0 319.5h0M164.5 336.0h0" stroke="#fff" stroke-width="4.0" stroke-opacity="0.4" stroke-linecap="round" fill="none"/><path d="M216 173h0M248.0 141.5h0M270.5 131.5h0M278.5 149.5h0M260.5 124.0h0M275.0 153.5h0M292.5 148.5h0M275.0 152.5h0M299.5 170.0h0M298.0 168.5h0M318.5 158.5h0M367.0 181.5h0M398.5 194.0h0M242 132h0M236 122h0M341.0 131.5h0M346.5 131.0h0M368.5 128.5h0M362 142h0M388.5 127.5h0M391.0 133.5h0M396.5 141.0h0M423 158h0M159 152h0M158.5 194.0h0M166 205h0M172 202h0M178.0 223.5h0M168 225h0M172.5 249.0h0M191.5 269.0h0M194 252h0M174.5 241.0h0M226.5 299.0h0M215.5 294.5h0M242.0 295.5h0M301.5 334.5h0M405 319h0M357.5 260.0h0M350 244h0M321.5 382.0h0M306.5 390.0h0M301.5 414.0h0M318.0 429.5h0M318.5 458.5h0M294 401h0M279 385h0M286.5 443.5h0M292.5 431.5h0M288 453h0M345 385h0M344 386h0M99 376h0M233 254h0M156.5 272.5h0M143 312h0M138 309h0M113.0 328.5h0M109 338h0M133.0 238.5h0M113 238h0M217 125h0M351.0 214.5h0M112.5 401.0h0M118.5 392.5h0M151.5 361.5h0M210 334h0M218.0 326.5h0M245.5 305.0h0" stroke="#fff" stroke-width="4.0" stroke-opacity="0.6" stroke-linecap="round" fill="none"/><path d="M114 198h0M110.5 190.0h0M131.0 181.5h0M144.0 179.5h0M176.0 176.5h0M154 182h0M197.0 174.5h0M232.5 146.5h0M301 182h0M340.5 160.5h0M368.5 176.5h0M358 144h0M379 128h0M389.5 136.5h0M158.5 144.0h0M160 188h0M166 196h0M185 211h0M187.5 216.5h0M183.0 226.5h0M182.0 263.5h0M210.0 295.5h0M244.5 318.0h0M228.5 306.5h0M230 329h0M243.5 345.0h0M311 327h0M276.5 321.0h0M387.0 316.5h0M391.5 325.5h0M358.5 228.0h0M311.5 415.0h0M298.5 413.0h0M307 442h0M311.0 445.5h0M280.5 425.0h0M277.0 447.5h0M348.5 434.5h0M338.5 468.0h0M343.5 457.0h0M331 363h0M328.5 365.5h0M345.5 372.5h0M344.5 381.0h0M137.5 395.5h0M176 385h0M155.5 259.0h0M151.5 270.5h0M153.5 258.5h0M134 314h0M142 302h0M141 305h0M128.5 220.5h0M217.5 117.5h0M349 214h0M352.0 214.5h0M133.5 409.0h0M123.5 404.0h0M147.5 320.0h0M188.0 371.5h0M182.5 376.5h0M227.0 315.5h0" stroke="#fff" stroke-width="4.0" stroke-opacity="0.8" stroke-linecap="round" fill="none"/><path d="M102.5 192.5h0M131.5 186.5h0M147.0 186.5h0M138.5 176.5h0M203.5 173.0h0M259.5 131.0h0M258.5 133.0h0M345.5 153.5h0M395.0 183.5h0M364.5 137.5h0M378.5 127.0h0M145.0 180.5h0M186.5 230.5h0M195.5 284.0h0M187.5 253.5h0M235 301h0M225.5 313.5h0M247 332h0M268.5 324.5h0M353.5 293.0h0M335.0 291.5h0M343.5 286.0h0M310 426h0M289.0 426.5h0M146.0 397.5h0M164.5 395.0h0M166.5 393.0h0M163.5 402.5h0M229 250h0M262.5 271.0h0M291.5 289.5h0M151.0 272.5h0M119 329h0M361 223h0M179.5 342.5h0M238 309h0M120.0 274.5h0" stroke="#fff" stroke-width="4.0" stroke-opacity="1.0" stroke-linecap="round" fill="none"/><path d="M123.5 181.5h0M213 154h0M312.0 166.5h0M359.5 170.5h0M169.5 257.5h0M165.5 242.0h0M225.5 293.5h0M241.5 339.5h0M336.0 318.5h0M356.5 258.0h0M304.0 357.5h0M299.5 330.5h0M317.5 384.0h0M318.5 427.0h0M290.5 452.5h0M353.5 445.5h0M196.5 365.0h0M200.5 355.5h0M154.5 276.5h0M123.0 329.5h0M127.0 329.5h0M134.5 233.0h0M213.5 139.0h0M206.5 355.5h0" stroke="#fff" stroke-width="4.5" stroke-opacity="0.4" stroke-linecap="round" fill="none"/><path d="M132.0 180.5h0M169.5 186.0h0M238.5 137.0h0M255.5 150.5h0M276 127h0M277.5 116.0h0M287 152h0M334.5 160.0h0M332 163h0M354.0 161.5h0M376 184h0M403.5 189.5h0M329.5 140.0h0M417.5 137.5h0M160 142h0M154.5 153.5h0M156.5 193.5h0M177.5 221.5h0M185.5 245.5h0M202.5 282.0h0M192.5 285.5h0M231.5 301.0h0M241 318h0M241 340h0M270.5 322.0h0M299.5 336.0h0M330.5 321.0h0M362.0 308.5h0M399.5 329.0h0M365.0 236.5h0M364.0 217.5h0M315 350h0M306 459h0M123.5 365.5h0M226 249h0M284.5 287.0h0M125.0 325.5h0M108.0 238.5h0M205.5 145.5h0M215.0 124.5h0M321.5 210.0h0M103 392h0M124.0 407.5h0M134 327h0M107 286h0" stroke="#fff" stroke-width="4.5" stroke-opacity="0.6" stroke-linecap="round" fill="none"/><path d="M131.5 194.0h0M136 177h0M175.0 168.5h0M263.5 136.5h0M235.5 141.5h0M260.5 142.0h0M252 141h0M284.0 166.5h0M283.5 161.0h0M296 168h0M312 178h0M342.5 161.0h0M417.5 180.5h0M244 144h0M224.0 117.5h0M357 143h0M374.5 127.5h0M382.5 117.0h0M397.5 126.0h0M161 168h0M166 190h0M174 201h0M174.5 219.5h0M193.0 265.5h0M232.0 298.5h0M197.5 297.0h0M327 328h0M339.0 329.5h0M359.0 259.5h0M335.5 281.0h0M303.0 341.5h0M302.5 469.5h0M286.5 472.5h0M292.5 402.0h0M283.0 406.5h0M281 431h0M283.5 446.0h0M350.0 432.5h0M326.5 370.5h0M333 375h0M162 401h0M206 354h0M253 276h0M272.5 293.5h0M127.5 211.0h0M127.0 218.5h0M124.5 241.5h0M106.5 384.5h0M107.0 398.5h0M145.0 316.5h0M111 287h0" stroke="#fff" stroke-width="4.5" stroke-opacity="0.8" stroke-linecap="round" fill="none"/><path d="M129.5 188.0h0M267.5 143.5h0M281 154h0M150.0 188.5h0M161 225h0M182 264h0M297.5 325.0h0M299 325h0M409.5 320.0h0M298.5 343.0h0M287.5 436.0h0M290.0 456.5h0M371.0 343.5h0M118.0 378.5h0M141 307h0M130.5 327.0h0M189.5 334.5h0M197.5 364.0h0" stroke="#fff" stroke-width="4.5" stroke-opacity="1.0" stroke-linecap="round" fill="none"/><path d="M196.0 182.5h0M276.5 126.5h0M349.5 174.0h0M376.5 181.5h0M382.5 118.5h0M367.0 125.5h0M408 143h0M154.5 158.5h0M157 154h0M182.5 193.5h0M175.5 219.5h0M204.0 284.5h0M242.0 318.5h0M277.5 326.5h0M283.5 399.5h0M105.0 377.5h0M304.0 281.5h0M105.5 340.0h0M125 218h0M215.5 133.0h0" stroke="#fff" stroke-width="5.0" stroke-opacity="0.4" stroke-linecap="round" fill="none"/><path d="M110.0 194.5h0M152.5 181.0h0M184.5 172.5h0M186.5 181.0h0M201.0 175.5h0M291.5 155.5h0M293.0 169.5h0M311.5 184.0h0M366.0 179.5h0M364.5 173.5h0M414 191h0M329.5 136.0h0M382 121h0M410.5 148.0h0M422.5 138.5h0M160.5 139.5h0M146 144h0M152.5 164.0h0M161.0 169.5h0M163 179h0M179.5 196.0h0M173.0 204.5h0M167.5 225.5h0M173.0 208.5h0M172.5 252.5h0M209.0 293.5h0M217.5 298.0h0M233.0 326.5h0M238.5 327.0h0M252 330h0M240.0 339.5h0M384.0 318.5h0M361.5 236.5h0M319.5 370.0h0M310.0 362.5h0M325.5 379.0h0M325.0 398.5h0M302 470h0M290.5 419.5h0M292.0 456.5h0M162 403h0M155.5 400.5h0M110 240h0M356.5 222.5h0M113.0 380.5h0M133 405h0M140.5 406.0h0" stroke="#fff" stroke-width="5.0" stroke-opacity="0.6" stroke-linecap="round" fill="none"/><path d="M106.0 183.5h0M143.5 179.5h0M147.5 189.5h0M176.5 188.5h0M203.5 186.0h0M194 172h0M181.5 186.5h0M250 147h0M271.5 129.0h0M283 148h0M309.5 177.5h0M289.5 176.0h0M332.5 155.5h0M359.0 159.5h0M403.5 141.5h0M387.0 135.5h0M419.0 145.5h0M156.5 147.5h0M152.0 140.5h0M176.0 188.5h0M175.5 209.5h0M181.5 197.5h0M184.0 241.5h0M179.0 220.5h0M169.5 232.0h0M199.0 289.5h0M233 327h0M237.0 344.5h0M237 337h0M303.5 330.5h0M386.5 325.0h0M390.0 318.5h0M346 258h0M361.5 228.5h0M347.5 263.5h0M341.5 287.0h0M282 434h0M285 416h0M345.5 427.5h0M354.5 446.5h0M376.0 344.5h0M329.5 368.0h0M353.0 379.5h0M109.0 374.5h0M196.5 365.0h0M280.5 293.5h0M268.5 293.0h0M142 296h0M125.0 330.5h0M211.5 136.0h0M375.0 222.5h0M182.5 341.5h0M207.5 356.0h0" stroke="#fff" stroke-width="5.0" stroke-opacity="0.8" stroke-linecap="round" fill="none"/><path d="M154 176h0M231.5 144.5h0M288 164h0M354.5 163.0h0M408.5 178.0h0M231.0 141.5h0M351.5 137.5h0M419.5 152.0h0M153.5 177.0h0M145.5 132.0h0M178.5 255.5h0M165.5 242.5h0M226.0 296.5h0M259.0 331.5h0M317.5 326.0h0M364.0 310.5h0M366.0 318.5h0M381.0 240.5h0M355.5 256.0h0M299.5 463.0h0M298.5 469.5h0M331.5 369.0h0M120.0 372.5h0M141 397h0M107.5 339.0h0M345.0 206.5h0M128 369h0M131.5 364.0h0" stroke="#fff" stroke-width="5.0" stroke-opacity="1.0" stroke-linecap="round" fill="none"/><path d="M150.5 182.0h0M141 176h0M163.0 156.5h0M202 173h0M324.0 165.5h0M397.0 182.5h0M150.0 136.5h0M175.0 185.5h0M160.5 192.0h0M186.5 258.0h0M198.5 288.0h0M382 231h0M310.5 348.5h0M310.5 429.5h0M309 426h0M286.0 396.5h0M348.5 448.5h0M186.5 368.0h0M211.5 364.5h0M367.5 229.5h0" stroke="#fff" stroke-width="5.5" stroke-opacity="0.4" stroke-linecap="round" fill="none"/><path d="M116.0 177.5h0M229.0 148.5h0M309.5 164.0h0M381.5 178.0h0M410.5 196.0h0M343.0 138.5h0M359.5 132.5h0M365.5 137.5h0M362.5 126.5h0M392 128h0M152.5 155.0h0M149.5 138.0h0M159.0 206.5h0M201.5 283.5h0M200 269h0M176.5 242.0h0M167.5 250.5h0M235.0 323.5h0M323.0 330.5h0M393.5 321.5h0M361.5 222.5h0M291.0 421.5h0M285.5 428.0h0M369.0 333.5h0M107 381h0M137.5 399.5h0M190.0 368.5h0M300.0 269.5h0M347 209h0M115.0 339.5h0" stroke="#fff" stroke-width="5.5" stroke-opacity="0.6" stroke-linecap="round" fill="none"/><path d="M171 189h0M226.0 160.5h0M282.5 150.5h0M311.5 166.5h0M307.5 156.0h0M311.5 168.5h0M336.5 157.0h0M381 184h0M228 126h0M176.5 220.5h0M181 208h0M213.0 293.5h0M222.0 299.5h0M238.0 307.5h0M242.5 334.5h0M293.5 330.5h0M311 332h0M362.5 232.5h0M342.0 281.5h0M340 286h0M354.0 298.5h0M316 348h0M321.0 445.5h0M305.5 469.5h0M349.5 425.5h0M339 374h0M173.5 382.5h0M191.0 375.5h0M137.5 321.5h0M145 293h0M216.5 130.5h0M151.0 349.5h0M171.5 333.5h0M154.5 355.5h0M219.5 329.0h0M99.0 294.5h0M93 299h0" stroke="#fff" stroke-width="5.5" stroke-opacity="0.8" stroke-linecap="round" fill="none"/><path d="M117.5 192.5h0M191.5 176.0h0M207.0 160.5h0M216 161h0M227 149h0M312.5 168.5h0M238 134h0M410 149h0M176.5 243.5h0M230.5 308.5h0M237.5 336.0h0M387.5 320.0h0M375.5 319.5h0M368 231h0M311.0 368.5h0M339.5 451.0h0M336.0 370.5h0M152.5 288.5h0M119.5 332.0h0M125.5 393.0h0M125.5 401.5h0" stroke="#fff" stroke-width="5.5" stroke-opacity="1.0" stroke-linecap="round" fill="none"/><path d="M161.0 178.5h0M396 185h0M231.0 125.5h0M328.0 134.5h0M144.0 151.5h0M198.5 233.0h0M201.0 303.5h0M271 321h0M296.5 341.5h0M351.0 234.5h0M325 420h0M296.5 399.5h0M317.5 431.5h0M151.5 284.5h0" stroke="#fff" stroke-width="6.0" stroke-opacity="0.4" stroke-linecap="round" fill="none"/><path d="M131.5 181.0h0M220.0 170.5h0M297 177h0M320.5 159.0h0M359.5 132.0h0M145.0 136.5h0M173.0 223.5h0M171.0 251.5h0M184.0 281.5h0M198.5 297.5h0M235.5 315.5h0M260.0 335.5h0M339 320h0M356.5 310.5h0M345.0 297.5h0M303.5 418.0h0M284 454h0M289.0 470.5h0M336 453h0M366.5 330.0h0M343.0 390.5h0M137.5 395.0h0M162.5 402.0h0M324.0 271.5h0M151 277h0M156.5 280.5h0M108.5 341.0h0M127.5 213.5h0M134 235h0M210.0 144.5h0M351 213h0M145.5 319.0h0M110 281h0" stroke="#fff" stroke-width="6.0" stroke-opacity="0.6" stroke-linecap="round" fill="none"/><path d="M149 183h0M169 180h0M375.5 180.0h0M339 137h0M357.0 143.5h0M394.5 118.5h0M192.5 275.5h0M205.5 292.5h0M375 321h0M377.0 237.5h0M309.5 450.5h0M354.5 439.0h0M334.5 360.5h0M156.5 407.0h0M307.5 277.0h0M108.5 393.5h0M114.5 397.5h0M129.0 405.5h0M145.0 316.5h0" stroke="#fff" stroke-width="6.0" stroke-opacity="0.8" stroke-linecap="round" fill="none"/><path d="M160.5 173.5h0M168.0 171.5h0M317.0 169.5h0M337 172h0M367.0 137.5h0M339.5 131.5h0M375.5 144.0h0M387.0 131.5h0M351.5 310.0h0M370.5 226.5h0M341 266h0M348 428h0M158 396h0M192.5 341.5h0" stroke="#fff" stroke-width="6.0" stroke-opacity="1.0" stroke-linecap="round" fill="none"/><path d="M161.0 172.5h0M214.5 171.5h0M383.5 189.0h0M366.0 139.5h0M345.0 304.5h0M280.5 460.0h0M113.5 380.5h0M143 397h0" stroke="#fff" stroke-width="6.5" stroke-opacity="0.4" stroke-linecap="round" fill="none"/><path d="M118 182h0M134.5 174.5h0M134.0 164.5h0M209.5 188.0h0M225 153h0M245 146h0M330 162h0M351.5 174.0h0M408 196h0M383.0 123.5h0M157.0 151.5h0M192.0 263.5h0M241.5 307.5h0M241 332h0M239.5 338.0h0M307 336h0M401.5 311.0h0M303 363h0M320.0 378.5h0M282.5 429.0h0M378 335h0M314.5 277.0h0M105 390h0M123.0 400.5h0M132.0 362.5h0M125.0 275.5h0" stroke="#fff" stroke-width="6.5" stroke-opacity="0.6" stroke-linecap="round" fill="none"/><path d="M173 181h0M183 183h0M301.5 161.5h0M361.0 162.5h0M388.5 185.5h0M160 146h0M155.5 165.5h0M143.0 170.5h0M161 218h0M306.5 330.0h0M348.5 305.0h0M352.0 307.5h0M359.0 249.5h0M343.0 272.5h0M314.5 346.0h0M306.5 399.0h0M318.0 434.5h0M299.5 489.5h0M354.5 445.5h0M381.5 340.0h0M360 333h0M339 373h0M227.0 246.5h0M150.0 261.5h0M282 204h0M367.5 221.0h0M135.5 411.0h0M169 348h0" stroke="#fff" stroke-width="6.5" stroke-opacity="0.8" stroke-linecap="round" fill="none"/><path d="M147.0 187.5h0M277.5 140.5h0M341.0 172.5h0M388.5 182.0h0M162 165h0M180 248h0M284.5 446.0h0M196.0 360.5h0M248.0 259.5h0M130.0 219.5h0M177.0 379.5h0" stroke="#fff" stroke-width="6.5" stroke-opacity="1.0" stroke-linecap="round" fill="none"/><path d="M111.5 188.0h0M372.5 177.5h0M357.5 266.0h0" stroke="#fff" stroke-width="7.0" stroke-opacity="0.4" stroke-linecap="round" fill="none"/><path d="M122.5 183.0h0M141 180h0M226.5 169.0h0M295 174h0M376 187h0M245.5 136.5h0M383.0 137.5h0M382.5 126.5h0M376 134h0M158 176h0M153.0 179.5h0M233.5 315.5h0M308.5 405.5h0M329.0 455.5h0M341.5 431.0h0M349.0 451.5h0M339.5 380.0h0M270 284h0M301.0 269.5h0M307.5 200.0h0M345.5 218.5h0M124.5 332.5h0M182 372h0M213.5 326.5h0" stroke="#fff" stroke-width="7.0" stroke-opacity="0.6" stroke-linecap="round" fill="none"/><path d="M121.5 181.0h0M235.5 151.5h0M237.5 147.0h0M267.0 134.5h0M322.0 161.5h0M349 174h0M150 133h0M169.5 198.5h0M183.0 246.5h0M172.0 250.5h0M183.5 254.5h0M189 282h0M297 334h0M346.5 312.5h0M354.5 312.0h0M410 315h0M353.5 259.0h0M349.5 383.0h0M309 264h0M120 332h0M123 213h0" stroke="#fff" stroke-width="7.0" stroke-opacity="0.8" stroke-linecap="round" fill="none"/><path d="M243.5 143.5h0M275.5 152.5h0M376.0 173.5h0M356 144h0M150.5 154.5h0M158.0 160.5h0M232.5 306.0h0M270.5 322.0h0M375.0 327.5h0M373.5 222.0h0M299.5 386.5h0M320 452h0M149.0 304.5h0M203.5 157.0h0M254.0 201.5h0M93 297h0" stroke="#fff" stroke-width="7.0" stroke-opacity="1.0" stroke-linecap="round" fill="none"/><path d="M131 188h0M224.5 155.0h0M219.5 169.5h0M222.0 155.5h0M323.5 165.5h0M370.0 191.5h0M161.5 165.0h0M163.5 164.0h0M170 261h0M194.0 277.5h0M189.5 249.0h0M250.0 341.5h0M335 318h0M387.5 321.5h0M217.0 129.5h0M250.0 195.5h0M191.5 362.5h0M93.0 296.5h0M113.5 283.0h0" stroke="#fff" stroke-width="7.5" stroke-opacity="0.4" stroke-linecap="round" fill="none"/><path d="M350.5 169.5h0M405 140h0M166.0 187.5h0M186.0 222.5h0M274 325h0M344.5 273.5h0M351 304h0M308 422h0M289.5 399.0h0M285.5 420.5h0M376.0 336.5h0M133 386h0M201.5 363.0h0M324 277h0M106.0 238.5h0M121 246h0M114.5 241.0h0M209.5 140.5h0M176.5 331.0h0" stroke="#fff" stroke-width="7.5" stroke-opacity="0.6" stroke-linecap="round" fill="none"/><path d="M132.5 173.5h0M305 181h0M310.5 173.5h0M405 196h0M390.5 126.0h0M156.0 134.5h0M173.5 242.5h0M189.5 265.0h0M310.5 333.5h0M337 326h0M184.5 374.5h0M323.5 271.5h0M182 343h0" stroke="#fff" stroke-width="7.5" stroke-opacity="0.8" stroke-linecap="round" fill="none"/><path d="M245.5 133.5h0M373.0 171.5h0M235.5 128.0h0M359.5 335.5h0M335.5 374.5h0M138.5 392.5h0M199.5 355.0h0M260.0 277.5h0M147.0 294.5h0M185.0 347.5h0" stroke="#fff" stroke-width="7.5" stroke-opacity="1.0" stroke-linecap="round" fill="none"/><path d="M191.0 171.5h0M305.0 162.5h0M230.5 122.5h0M373.0 120.5h0M151.5 166.5h0M149.5 182.0h0M181.0 249.5h0M304.5 361.5h0M307 373h0M290.5 392.0h0M365.5 336.5h0M273.5 297.0h0M290 286h0" stroke="#fff" stroke-width="8.0" stroke-opacity="0.4" stroke-linecap="round" fill="none"/><path d="M122.5 182.0h0M127.5 182.0h0M211.0 173.5h0M380.5 185.5h0M225 128h0M158.5 127.5h0M181.5 252.0h0M232.0 335.5h0M283.0 447.5h0M272.5 295.5h0M296 201h0" stroke="#fff" stroke-width="8.0" stroke-opacity="0.6" stroke-linecap="round" fill="none"/><path d="M183 179h0M277 131h0M290.0 171.5h0M148.5 169.0h0M170 190h0M310 269h0M149.5 295.0h0M312 203h0M128.0 403.5h0M96 394h0M128 393h0M221.5 324.0h0" stroke="#fff" stroke-width="8.0" stroke-opacity="0.8" stroke-linecap="round" fill="none"/><path d="M409.0 187.5h0M397.5 137.5h0M192 289h0M228.5 301.5h0M352.0 309.5h0M153 252h0M108.5 347.0h0" stroke="#fff" stroke-width="8.0" stroke-opacity="1.0" stroke-linecap="round" fill="none"/><path d="M258 146h0M306.5 445.5h0M311 273h0" stroke="#fff" stroke-width="8.5" stroke-opacity="0.4" stroke-linecap="round" fill="none"/><path d="M130.5 191.5h0M189.0 174.5h0M218.5 177.0h0M282.0 158.5h0M288.5 182.5h0M392.0 188.5h0M398.5 193.5h0M225.5 129.5h0M333.5 135.5h0M398 127h0M415.0 138.5h0M192.0 281.5h0M226 307h0M239 328h0M330.5 335.0h0M306 276h0M133.0 321.5h0M123.5 325.0h0M250.5 197.0h0M105.5 379.5h0" stroke="#fff" stroke-width="8.5" stroke-opacity="0.6" stroke-linecap="round" fill="none"/><path d="M189.0 187.5h0M266.0 137.5h0M286 147h0M319.0 152.5h0M334 163h0M355 170h0M373.5 172.5h0M369.5 137.5h0M182 200h0M172.5 196.0h0M377.0 326.5h0M283.5 430.5h0M166.5 382.0h0M242.5 257.5h0M139.5 323.5h0M108.0 384.5h0" stroke="#fff" stroke-width="8.5" stroke-opacity="0.8" stroke-linecap="round" fill="none"/><path d="M153.5 178.0h0M211.5 172.5h0M292.0 176.5h0M353.5 172.5h0M381.0 130.5h0M230.5 307.0h0M309.5 334.0h0M350.5 310.5h0M348.0 273.5h0M114.5 242.0h0M92 235h0" stroke="#fff" stroke-width="8.5" stroke-opacity="1.0" stroke-linecap="round" fill="none"/><path d="M347 394h0M307 277h0M365.5 220.0h0" stroke="#fff" stroke-width="9.0" stroke-opacity="0.4" stroke-linecap="round" fill="none"/><path d="M191.5 175.5h0M286.5 168.5h0M401 179h0M229.0 131.5h0M381.5 127.0h0M179 226h0M303.5 325.5h0M355.5 253.0h0M325 364h0M152.5 263.0h0M125.0 240.5h0" stroke="#fff" stroke-width="9.0" stroke-opacity="0.6" stroke-linecap="round" fill="none"/><path d="M118.0 183.5h0M222.0 152.5h0M270.5 130.0h0M193 215h0M197 205h0M222 301h0M371.5 221.0h0M249 280h0M256.5 198.5h0" stroke="#fff" stroke-width="9.0" stroke-opacity="0.8" stroke-linecap="round" fill="none"/><path d="M124.0 192.5h0M280 135h0M280.5 150.5h0M295.5 162.5h0M324 161h0M338.0 166.5h0M176.0 225.5h0M296.0 325.5h0M319.0 366.5h0M136.5 404.5h0" stroke="#fff" stroke-width="9.0" stroke-opacity="1.0" stroke-linecap="round" fill="none"/><path d="M122.0 188.5h0M289.0 166.5h0M168.0 243.5h0M197 280h0M303 337h0M349 304h0M300 382h0" stroke="#fff" stroke-width="9.5" stroke-opacity="0.4" stroke-linecap="round" fill="none"/><path d="M351 175h0M194.5 279.5h0M240.0 331.5h0M307.0 329.5h0M309.5 332.5h0M324.5 358.0h0M302.0 281.5h0M303.5 204.5h0M112.5 379.5h0" stroke="#fff" stroke-width="9.5" stroke-opacity="0.6" stroke-linecap="round" fill="none"/><path d="M204.5 179.0h0M213.5 154.5h0M276.5 136.0h0M172.5 222.0h0M336.5 368.0h0M175.5 379.5h0M290.5 279.5h0" stroke="#fff" stroke-width="9.5" stroke-opacity="0.8" stroke-linecap="round" fill="none"/><path d="M168.0 238.5h0M374 349h0" stroke="#fff" stroke-width="9.5" stroke-opacity="1.0" stroke-linecap="round" fill="none"/><path d="M279 137h0M381.5 123.5h0M233.5 317.5h0M366.0 225.5h0M293.5 288.0h0M135 324h0M203.0 147.5h0M116.0 383.5h0" stroke="#fff" stroke-width="10.0" stroke-opacity="0.4" stroke-linecap="round" fill="none"/><path d="M170.0 181.5h0M198 159h0M253 143h0M263.5 139.5h0M370 136h0M160.5 175.5h0M386 319h0M365 221h0M380.5 349.0h0M153.0 275.5h0M128.5 245.0h0M113 384h0" stroke="#fff" stroke-width="10.0" stroke-opacity="0.6" stroke-linecap="round" fill="none"/><path d="M307.5 174.5h0M343.5 162.0h0M365 180h0M241.0 324.5h0M323.5 436.0h0M230 252h0M125.5 235.5h0M122 215h0M133.0 236.5h0M346 213h0M127.5 406.0h0" stroke="#fff" stroke-width="10.0" stroke-opacity="0.8" stroke-linecap="round" fill="none"/><path d="M273.0 143.5h0M300.5 156.0h0M358.0 180.5h0M239.0 135.5h0M160.5 123.0h0M343.0 434.5h0M277.5 288.0h0M140 318h0M211.5 136.5h0" stroke="#fff" stroke-width="10.0" stroke-opacity="1.0" stroke-linecap="round" fill="none"/><path d="M286 173h0" stroke="#fff" stroke-width="10.5" stroke-opacity="0.4" stroke-linecap="round" fill="none"/><path d="M368.5 177.0h0M406.0 137.5h0M268 202h0M351.0 222.5h0M134.5 400.5h0" stroke="#fff" stroke-width="10.5" stroke-opacity="0.6" stroke-linecap="round" fill="none"/><path d="M234.5 154.5h0M345.5 171.5h0M350 149h0M411.5 133.5h0M315.0 330.5h0M318.5 442.5h0" stroke="#fff" stroke-width="10.5" stroke-opacity="0.8" stroke-linecap="round" fill="none"/><path d="M139.0 176.5h0M172.5 244.5h0M179.5 262.5h0M265.0 309.5h0M316.5 430.0h0M381 337h0M128.5 379.5h0" stroke="#fff" stroke-width="11.0" stroke-opacity="0.4" stroke-linecap="round" fill="none"/><path d="M305.0 178.5h0M305 167h0M217 287h0M204.0 283.5h0M320.5 343.0h0M343.5 276.0h0M135 386h0M188.5 375.0h0M203.0 363.5h0M284.5 200.5h0M312 209h0M315.0 210.5h0M112.5 368.0h0M110.5 377.5h0M116 408h0M128.5 403.5h0" stroke="#fff" stroke-width="11.0" stroke-opacity="0.6" stroke-linecap="round" fill="none"/><path d="M106.5 175.5h0M131.0 188.5h0M350.5 165.5h0M224 116h0M223.0 132.5h0M207.5 287.5h0M231.5 318.5h0M360.5 225.0h0M343.5 382.5h0M349 388h0M113.5 395.5h0M123.0 406.5h0M101.5 394.5h0M120.0 398.5h0" stroke="#fff" stroke-width="11.0" stroke-opacity="0.8" stroke-linecap="round" fill="none"/><path d="M147 192h0M239.5 336.0h0" stroke="#fff" stroke-width="11.0" stroke-opacity="1.0" stroke-linecap="round" fill="none"/><path d="M378 199h0M184.0 231.5h0M341 431h0" stroke="#fff" stroke-width="11.5" stroke-opacity="0.4" stroke-linecap="round" fill="none"/><path d="M146.0 174.5h0M220.5 165.0h0M263.5 145.5h0M185 203h0M202.5 302.0h0M263.0 320.5h0M316.5 332.0h0M299 483h0M360 454h0" stroke="#fff" stroke-width="11.5" stroke-opacity="0.6" stroke-linecap="round" fill="none"/><path d="M361.5 314.0h0" stroke="#fff" stroke-width="11.5" stroke-opacity="0.8" stroke-linecap="round" fill="none"/><path d="M396.0 191.5h0" stroke="#fff" stroke-width="11.5" stroke-opacity="1.0" stroke-linecap="round" fill="none"/><path d="M290.5 172.0h0M365.5 171.5h0M405 195h0M237.5 132.0h0M151.5 133.5h0M170.5 222.0h0M180.5 247.0h0M221.5 311.0h0M378.0 323.5h0M353 216h0M316 398h0M274.5 287.0h0" stroke="#fff" stroke-width="12.0" stroke-opacity="0.4" stroke-linecap="round" fill="none"/><path d="M264 137h0M315.5 166.5h0M325.5 166.0h0M337.0 162.5h0M401.0 180.5h0M368 138h0M186.5 259.5h0M182.5 255.5h0M216.0 297.5h0M240.5 337.5h0M263 331h0M353.5 243.5h0M313.0 338.5h0M329.5 397.0h0M267.5 284.5h0M340 274h0" stroke="#fff" stroke-width="12.0" stroke-opacity="0.6" stroke-linecap="round" fill="none"/><path d="M169 174h0M278 159h0M291.0 159.5h0M315.5 161.5h0M338.0 161.5h0M380.5 187.5h0M350.5 143.0h0M352.0 140.5h0M368.5 138.5h0M147.5 197.0h0M171.5 226.5h0M194.5 268.5h0M177.0 256.5h0M238.5 337.5h0M234 327h0M308.5 334.0h0M356 296h0M309.5 380.5h0M306 377h0M313 400h0M293.5 403.5h0M247 271h0M335.5 272.0h0" stroke="#fff" stroke-width="12.0" stroke-opacity="0.8" stroke-linecap="round" fill="none"/><path d="M167 188h0M181.0 179.5h0M401.5 183.5h0M344.5 138.0h0M156.5 149.5h0M177.0 219.5h0M165.5 246.5h0M318.0 391.5h0M315.5 412.0h0M264.5 288.0h0M302.5 272.5h0" stroke="#fff" stroke-width="12.0" stroke-opacity="1.0" stroke-linecap="round" fill="none"/></g><g fill="#fff" fill-opacity="0.8"><path d="M146.2 219.3 Q148.0 213.1 153.7 211.1 Q159.3 209.0 166.2 212.6 Q173.1 216.1 183.1 225.6 Q193.0 235.0 194.8 242.2 Q196.7 249.3 192.4 254.8 Q188.1 260.2 180.4 259.6 Q172.8 259.0 163.5 252.5 Q154.3 246.0 149.4 235.8 Q144.4 225.6 146.2 219.3Z"/><path d="M183.5 266.2 Q193.2 258.6 201.9 264.2 Q210.7 269.8 217.7 281.3 Q224.8 292.7 221.5 298.9 Q218.2 305.2 199.4 305.3 Q180.7 305.5 176.3 298.6 Q171.9 291.7 172.9 282.7 Q173.8 273.8 183.5 266.2Z"/><path d="M222.5 146.6 Q222.0 139.7 229.9 128.6 Q237.8 117.4 248.6 116.6 Q259.4 115.9 264.3 122.4 Q269.3 128.9 269.0 138.5 Q268.7 148.2 260.3 155.5 Q251.9 162.7 242.0 161.8 Q232.1 160.8 227.5 157.1 Q222.9 153.4 222.5 146.6Z"/><path d="M317.6 135.5 Q316.2 131.3 324.2 128.7 Q332.2 126.1 346.4 125.3 Q360.6 124.5 371.6 127.6 Q382.6 130.7 386.8 135.8 Q391.0 141.0 386.7 147.5 Q382.3 154.0 376.2 158.9 Q370.0 163.8 362.0 160.4 Q353.9 157.0 343.5 149.0 Q333.0 141.1 326.0 140.5 Q319.0 139.8 317.6 135.5Z"/><path d="M172.3 171.2 Q173.3 160.0 183.7 157.3 Q194.2 154.5 203.0 158.3 Q211.8 162.1 213.6 169.5 Q215.3 176.9 210.8 183.7 Q206.3 190.5 195.7 191.9 Q185.1 193.2 178.3 187.8 Q171.4 182.4 172.3 171.2Z"/><ellipse cx="226.5" cy="301" rx="14.0" ry="15.0" transform="rotate(0 226.5 301)"/><ellipse cx="235" cy="325" rx="11.0" ry="18.0" transform="rotate(-15 235 325)"/><ellipse cx="273" cy="130" rx="15.5" ry="20.5" transform="rotate(25 273 130)"/><ellipse cx="284" cy="160" rx="31.0" ry="12.5" transform="rotate(36 284 160)"/><ellipse cx="183" cy="201" rx="16.0" ry="17.0" transform="rotate(0 183 201)"/><ellipse cx="381.9" cy="123.7" rx="14.0" ry="14.0" transform="rotate(0 381.9 123.7)"/><ellipse cx="330" cy="163" rx="15.0" ry="11.5" transform="rotate(25 330 163)"/><ellipse cx="348" cy="170" rx="16.0" ry="12.0" transform="rotate(20 348 170)"/><ellipse cx="368" cy="178" rx="16.0" ry="11.5" transform="rotate(15 368 178)"/><ellipse cx="383" cy="184" rx="12.0" ry="11.0" transform="rotate(0 383 184)"/><ellipse cx="341.8" cy="185.4" rx="13.0" ry="13.0" transform="rotate(0 341.8 185.4)"/><ellipse cx="412" cy="193" rx="19.0" ry="18.0" transform="rotate(0 412 193)"/><ellipse cx="388.5" cy="321.7" rx="20.0" ry="14.0" transform="rotate(-25 388.5 321.7)"/><ellipse cx="279.5" cy="320.3" rx="19.0" ry="14.0" transform="rotate(0 279.5 320.3)"/><ellipse cx="306.5" cy="336.5" rx="15.5" ry="14.8" transform="rotate(0 306.5 336.5)"/><ellipse cx="143.25" cy="406.25" rx="12.0" ry="12.0" transform="rotate(0 143.25 406.25)"/><ellipse cx="307" cy="362" rx="11.0" ry="10.5" transform="rotate(0 307 362)"/><ellipse cx="323.5" cy="362.5" rx="11.0" ry="10.5" transform="rotate(0 323.5 362.5)"/><ellipse cx="319" cy="382" rx="10.0" ry="15.0" transform="rotate(0 319 382)"/><ellipse cx="290.6" cy="390" rx="10.5" ry="14.5" transform="rotate(0 290.6 390)"/><ellipse cx="307.5" cy="405" rx="11.5" ry="11.5" transform="rotate(0 307.5 405)"/><ellipse cx="317.5" cy="411.5" rx="12.5" ry="12.0" transform="rotate(0 317.5 411.5)"/><ellipse cx="287.5" cy="412.5" rx="12.0" ry="12.5" transform="rotate(0 287.5 412.5)"/><ellipse cx="309" cy="430.5" rx="11.5" ry="11.0" transform="rotate(0 309 430.5)"/><ellipse cx="284.5" cy="444" rx="10.5" ry="10.5" transform="rotate(0 284.5 444)"/><ellipse cx="318.8" cy="447.6" rx="11.5" ry="11.0" transform="rotate(0 318.8 447.6)"/><ellipse cx="316.4" cy="460" rx="10.5" ry="10.5" transform="rotate(0 316.4 460)"/><ellipse cx="292" cy="463.6" rx="10.0" ry="10.0" transform="rotate(0 292 463.6)"/><ellipse cx="354.4" cy="442.7" rx="11.5" ry="11.5" transform="rotate(0 354.4 442.7)"/><ellipse cx="345.8" cy="452.5" rx="12.0" ry="12.5" transform="rotate(0 345.8 452.5)"/><ellipse cx="340.9" cy="464.8" rx="10.5" ry="10.5" transform="rotate(0 340.9 464.8)"/><ellipse cx="343.3" cy="422" rx="10.5" ry="10.5" transform="rotate(0 343.3 422)"/><ellipse cx="380" cy="339.8" rx="11.5" ry="11.5" transform="rotate(0 380 339.8)"/><ellipse cx="151" cy="403" rx="12.0" ry="10.0" transform="rotate(-20 151 403)"/><ellipse cx="104.5" cy="395.5" rx="10.5" ry="10.5" transform="rotate(0 104.5 395.5)"/><ellipse cx="114" cy="376.5" rx="17.0" ry="10.0" transform="rotate(-15 114 376.5)"/><circle cx="151" cy="129" r="6.3"/><circle cx="156.6" cy="160" r="7.5"/><circle cx="124.3" cy="185.4" r="6.9"/><circle cx="151" cy="179.7" r="6.9"/><circle cx="167.8" cy="193.8" r="6.9"/><circle cx="83.7" cy="184" r="6.0"/><circle cx="127" cy="210.6" r="6.9"/><circle cx="153.8" cy="217.6" r="6.3"/><circle cx="211" cy="174" r="7.5"/><circle cx="271.5" cy="200.8" r="6.9"/><circle cx="221" cy="122.3" r="6.3"/><circle cx="200" cy="154.5" r="6.3"/><circle cx="407.7" cy="140.5" r="6.9"/><circle cx="392.3" cy="136.3" r="6.3"/><circle cx="369.9" cy="177" r="6.9"/><circle cx="364" cy="217.6" r="6.9"/><circle cx="329" cy="182.5" r="6.9"/><circle cx="90.7" cy="236.2" r="6.3"/><circle cx="103.3" cy="233.4" r="6.3"/><circle cx="137" cy="227.8" r="6.3"/><circle cx="127" cy="244.6" r="6.3"/><circle cx="149.6" cy="289.5" r="6.9"/><circle cx="151" cy="262.9" r="6.3"/><circle cx="114.5" cy="331.5" r="5.6"/><circle cx="107.5" cy="345.6" r="5.6"/><circle cx="134" cy="326" r="5.6"/><circle cx="114.5" cy="372" r="6.9"/><circle cx="156.6" cy="251.6" r="6.3"/><circle cx="278.7" cy="295.1" r="6.9"/><circle cx="308.2" cy="359.6" r="6.9"/><circle cx="308" cy="274" r="6.3"/><circle cx="224" cy="246" r="7.5"/><circle cx="239.5" cy="222.2" r="6.3"/><circle cx="235.3" cy="335.7" r="7.5"/><circle cx="381" cy="340" r="7.5"/><circle cx="371.3" cy="348.4" r="7.5"/><circle cx="365.7" cy="337" r="6.9"/><circle cx="382.5" cy="234.8" r="7.5"/><circle cx="364.3" cy="220.8" r="6.9"/><circle cx="348.8" cy="262.9" r="6.9"/><circle cx="339" cy="276.9" r="6.9"/><circle cx="351.6" cy="307.7" r="6.3"/><circle cx="326.4" cy="324.5" r="6.9"/><circle cx="323.6" cy="363.8" r="7.5"/><circle cx="148.25" cy="420" r="6.3"/><circle cx="107" cy="345" r="6.3"/><circle cx="158.25" cy="368.75" r="6.3"/><circle cx="202" cy="353.75" r="6.9"/><circle cx="208" cy="361" r="6.3"/><circle cx="344.6" cy="376.6" r="6.3"/><circle cx="348.2" cy="392.5" r="6.3"/><circle cx="366.6" cy="336" r="6.3"/><circle cx="124.3" cy="184.7" r="7.5"/><circle cx="126.8" cy="210.4" r="6.9"/><circle cx="152.5" cy="179.8" r="6.9"/><circle cx="211.3" cy="174.9" r="6.9"/><circle cx="222.4" cy="246" r="6.9"/><circle cx="237" cy="198" r="6.3"/></g></g></g></g></defs>
<path d="M194.6 84.6 L203 286 M411 330.6 L203 286 M203 286 L100.4 419.5" stroke="#9a9a9a" stroke-width="0.8" fill="none"/>
<use href="#dens" filter="url(#iso)"/>
<g filter="url(#b0)"><path d="M352.0 144.5h0M200.5 147.0h0M183.5 275.0h0M202.5 314.5h0M182.0 208.5h0M375.0 264.5h0M300 282h0M242.0 171.5h0M184.0 153.5h0M205.0 94.5h0M293 222h0M105.5 233.5h0M280.5 380.5h0M132 369h0M245 211h0M338.5 146.0h0M218 204h0M264 114h0M372.5 206.5h0M225.5 313.5h0M140 196h0M226 227h0M284 415h0M383.5 330.5h0M298.5 404.0h0M307.5 359.5h0M427 122h0M307.0 337.5h0M178.0 147.5h0M177.0 303.5h0M229.5 443.5h0M294.5 169.5h0M91.0 340.5h0M348 185h0M359.0 418.5h0M301.0 339.5h0M218.0 213.5h0M334.0 246.5h0M240.0 121.5h0M369 294h0M386.5 146.0h0M282.5 182.0h0M349 260h0M162.5 420.5h0M366 273h0M203.5 116.0h0M119.0 196.5h0M131.0 260.5h0M348.5 446.5h0M300 195h0M295 264h0M252.5 190.5h0M360.5 169.5h0M208.5 312.0h0M162.5 265.5h0M361.5 199.5h0M392 335h0M186.5 369.0h0M250.0 346.5h0M424.5 209.0h0M188 185h0M239.5 448.0h0M260.5 228.5h0M188.5 183.0h0M319.5 252.5h0M211.0 130.5h0M205.5 184.5h0M304.5 308.5h0M261 198h0M102.5 181.5h0M331 459h0M194.5 440.0h0M114.5 165.5h0M257.5 226.0h0M370.5 417.5h0M358.5 308.0h0M165.0 244.5h0M194.5 271.0h0M427.5 159.5h0M362 157h0M277.5 193.5h0M94 340h0M313.5 472.0h0M193.0 228.5h0M359.5 157.5h0M177 299h0M219.5 139.5h0M160.5 369.5h0M389.0 206.5h0M411.5 270.0h0M291.5 409.0h0M162 395h0M282 164h0M412 266h0M408.5 248.0h0M223 142h0M279 320h0M139.5 354.5h0M202.5 291.5h0M328.0 173.5h0M173 148h0M90 333h0M213.0 352.5h0M286 348h0M230.0 270.5h0M230.0 151.5h0M345.5 304.5h0M378.5 220.0h0M435.0 125.5h0M222.5 294.0h0M199.0 319.5h0M288 253h0M352.0 146.5h0M165.0 386.5h0M320 125h0M107.0 389.5h0M406.5 254.5h0M93 322h0M348.0 410.5h0M167.0 328.5h0M319.0 353.5h0M331.5 241.0h0M284.5 431.0h0M327.5 443.0h0M145.5 165.5h0M319.0 253.5h0M121.0 196.5h0M159.5 346.5h0M328 106h0M288.5 397.5h0M240.0 123.5h0M252.5 249.0h0M282.5 144.5h0M189.5 362.5h0M324.0 166.5h0M391.5 133.5h0M283.5 353.5h0M416.5 236.0h0M198.5 205.5h0M265 270h0M181 103h0M380.0 357.5h0M328.5 356.0h0M373.0 273.5h0M367.5 158.5h0M295.5 369.5h0M277.0 237.5h0M198.0 328.5h0M344.0 287.5h0M192.0 211.5h0M179.5 270.5h0M226.0 202.5h0M79.5 207.0h0M163.5 231.0h0M138.0 358.5h0M296.0 374.5h0M107 167h0M157 319h0M283 300h0M296.5 120.0h0M373.0 314.5h0M246.5 215.5h0M320 236h0M218.5 326.5h0M294.0 388.5h0M283.0 207.5h0M403 235h0M100 294h0M184 204h0M367 351h0M227.5 288.5h0M156 229h0M368.0 185.5h0M237.5 115.0h0M367.5 323.5h0M296.5 445.5h0M254.5 256.0h0M400.0 293.5h0M408.0 239.5h0M158 288h0M258.5 192.0h0M195.0 181.5h0M127.5 390.5h0M157.5 363.0h0M320.5 139.5h0M279.5 258.0h0M233.0 341.5h0M184.0 122.5h0M122 164h0M345 447h0M381.0 267.5h0M386 357h0M350.5 247.0h0M334 161h0M221.0 309.5h0M305.0 426.5h0M250.0 441.5h0M206.0 373.5h0M317 396h0M191 92h0M267 317h0M99.5 248.5h0M416 249h0M124 362h0M85.0 289.5h0M319.5 127.0h0M182.5 363.5h0M354.0 270.5h0M205 249h0M304.5 317.5h0M270.0 396.5h0M236 91h0M177.5 286.5h0M234.0 231.5h0M356.0 136.5h0M353 317h0M222.5 110.5h0M357.5 200.5h0M386.0 145.5h0M249.5 174.5h0M376 139h0M290.0 301.5h0M101 190h0M234.5 305.5h0M289.5 342.5h0M171.0 356.5h0M284 314h0M183 381h0M311.5 216.5h0M329.0 224.5h0M222.5 256.0h0M112 267h0M180.5 421.0h0M421.0 239.5h0M286.5 451.5h0M308.5 349.0h0M260 369h0M340 212h0M243.5 173.0h0M250.5 114.5h0M184.5 312.0h0M141.5 286.5h0M388.5 209.0h0M337.5 145.0h0M231.0 203.5h0M216.5 243.5h0M265 132h0M311.5 464.5h0M379 273h0M283.5 221.0h0M283.5 119.5h0M110.5 167.5h0M389.5 351.5h0M317.5 346.5h0M374.5 245.0h0M134.5 373.0h0M166.5 256.5h0M136.0 196.5h0M310.0 239.5h0M350.5 433.5h0M219.5 92.5h0M332.0 185.5h0M183.0 375.5h0M319.5 207.5h0M359.5 343.5h0M396.0 260.5h0M306.5 359.0h0M304.5 172.0h0M354.5 371.5h0M153.0 362.5h0M169.5 422.5h0M246.5 371.5h0M128.0 170.5h0M131.5 237.5h0M321 222h0M387.0 122.5h0M164.0 368.5h0M180.5 299.5h0M327.5 246.5h0M137.5 363.5h0M259.5 229.0h0M224 338h0M350.5 274.5h0M181.5 392.0h0M251.5 345.5h0M317.5 104.5h0M362.0 152.5h0M306.5 196.0h0M410.5 310.5h0M177 172h0M404.0 212.5h0M347.5 465.5h0M368.0 138.5h0M275.5 346.0h0M109.5 179.5h0M362.5 299.0h0M318.5 201.0h0M418.5 161.5h0M303.0 355.5h0M161.5 179.0h0M203 307h0M166 398h0M365.5 182.5h0M349.5 352.0h0M370.5 183.5h0M288.0 196.5h0M265.5 126.0h0M396 265h0M331.0 139.5h0M217.0 287.5h0M178 375h0M161 168h0M354.5 409.5h0M164.0 399.5h0M296 395h0M275.5 304.5h0M417.5 132.5h0M357.5 237.5h0M129.5 369.5h0M376.5 195.5h0M221.5 183.0h0M381.5 304.0h0M217.0 247.5h0M233 304h0M174.0 271.5h0M280.5 287.5h0M279.0 273.5h0M394.0 126.5h0M226 235h0M214.0 132.5h0M171.5 348.5h0M189 151h0M289.0 128.5h0M127.5 165.5h0M175.5 276.5h0M141.5 358.5h0M388.0 357.5h0M90 182h0M87.0 186.5h0M365 109h0M186 195h0M152.5 286.5h0M332.5 318.0h0M352.5 193.0h0M353 357h0M328 312h0M379 312h0M144.5 180.0h0M248.0 113.5h0M107.5 230.5h0M314.0 289.5h0M254.5 170.5h0M338.0 167.5h0M238 147h0M377.5 256.0h0M322.5 458.5h0M199.5 232.5h0M302.5 444.0h0M300.0 274.5h0M370.5 328.0h0M161.0 273.5h0M144.5 385.5h0M298.5 401.0h0M184.0 143.5h0M236.0 236.5h0M363 138h0M396.0 148.5h0M240.5 275.5h0M233.5 303.0h0M347 319h0M190 90h0M116 178h0M174 130h0M118.5 178.0h0M159 220h0M93 355h0M307.5 427.5h0M300.5 145.0h0M330.0 163.5h0M264.5 349.0h0M353.5 423.0h0M180.5 275.0h0M143 248h0M338 377h0M133.5 408.5h0M354.0 318.5h0M115.5 267.5h0M125 209h0M72.5 192.0h0M388 231h0M313.0 121.5h0M211.0 191.5h0M357 271h0M324 139h0M426.5 194.5h0M292.5 274.5h0M400.5 237.0h0M328 211h0M375 260h0M263.5 204.0h0M207 122h0M261.0 277.5h0M347.5 482.5h0M413.0 140.5h0M284.5 408.0h0M371.5 233.5h0M240.5 332.5h0M283.5 223.0h0M239.5 183.5h0M405.0 213.5h0M262.5 372.0h0M131 348h0M241 415h0M87.0 182.5h0M368.0 115.5h0M369.5 200.5h0M393 176h0M193.5 94.5h0M185.5 287.5h0M290.5 106.0h0M241 338h0M176 321h0M390.0 242.5h0M212 131h0M228.5 422.0h0M284.0 249.5h0M261 251h0M211.0 185.5h0M169 308h0M292.0 295.5h0M380 342h0M349.5 182.5h0M190.0 162.5h0M264.5 208.5h0M308.5 140.0h0M232 114h0M123.5 359.0h0M231 175h0M198.5 360.0h0M321.5 107.5h0M185 316h0M156.5 198.0h0M314.5 465.5h0M284.5 206.5h0M266.0 427.5h0M210.5 281.5h0M354.5 271.5h0M326.5 428.5h0M429.0 137.5h0M127 367h0M122.5 345.5h0M265 296h0M287.5 221.0h0M332.5 168.0h0M186.5 373.5h0M206 151h0M385.5 149.5h0M202.5 250.5h0M349.5 345.5h0M179.0 427.5h0M201.0 94.5h0M187.5 129.5h0M361.0 174.5h0M199.0 238.5h0M313.5 355.0h0M378.5 171.5h0M296.5 229.5h0M178 250h0M278.5 451.5h0M157 377h0M333.0 144.5h0M197.0 271.5h0M282.0 341.5h0M394.5 182.0h0M220.5 375.0h0M409 202h0M316.0 205.5h0M299.0 121.5h0M358.5 307.0h0M297.5 381.0h0M114.5 377.0h0M411 285h0M234.5 319.0h0M127.5 311.5h0M236.5 171.5h0M237 162h0M376 250h0M338.5 324.5h0M255.0 174.5h0M322.5 149.0h0M335.5 159.0h0M369.5 223.0h0M398.5 263.5h0M212.0 148.5h0M213.5 208.5h0M222.5 303.5h0M210.0 336.5h0M275.0 213.5h0M240.5 101.0h0M223.0 121.5h0M390.0 218.5h0M349.5 476.5h0M238 276h0M274.0 138.5h0M404.5 126.5h0M375.0 224.5h0M218.5 158.5h0M296.5 378.5h0M405 165h0M366.5 389.0h0M366.0 284.5h0M201.0 368.5h0M297 353h0M246.5 101.0h0M345.0 454.5h0M343.0 329.5h0M198.5 124.0h0M194.5 276.0h0M389.5 320.0h0M356.5 417.0h0M388.5 319.0h0M171.0 246.5h0M243 216h0M306 212h0M256 452h0M289 165h0M332.5 300.0h0M267 130h0M243.0 280.5h0M233.0 172.5h0M256.0 409.5h0M364.5 412.0h0M154.5 321.0h0M139.5 366.5h0M314.5 147.5h0M395.5 304.0h0M204.5 207.5h0M177 278h0M417.5 188.5h0M369.5 160.5h0M375.0 212.5h0M172.0 280.5h0M290.5 237.5h0M314.0 260.5h0M291.0 349.5h0M184.5 209.0h0M366.5 148.0h0M189.5 176.5h0M262.5 208.5h0M207 359h0M267.0 281.5h0M138.5 354.0h0M210.5 88.0h0M172.0 331.5h0M160 228h0M150.5 393.5h0M208 370h0M158 272h0M263.0 341.5h0M252.0 371.5h0M239.0 208.5h0M222.5 126.5h0M275.0 179.5h0M310 158h0M331 355h0M401.5 222.5h0M155.0 188.5h0M417 175h0M203.5 147.5h0M283 118h0M250.5 199.0h0M337.0 357.5h0M407 176h0M186.5 316.0h0M269.5 282.0h0M246.5 305.0h0M337.5 375.5h0M128.5 376.5h0M105.5 232.5h0" stroke="#0820a0" stroke-width="1.5" stroke-opacity="0.8" stroke-linecap="round" fill="none"/><path d="M342.5 453.5h0M403 126h0M269.0 312.5h0M324.0 471.5h0M191.5 205.5h0M409.5 217.5h0M121 359h0M265.0 244.5h0M235.0 277.5h0M174.0 243.5h0M167.0 396.5h0M350 227h0M308.5 315.0h0M308 403h0M339.0 149.5h0M304 372h0M239.5 234.0h0M372.0 249.5h0M203.5 137.5h0M118 335h0M150 198h0M288.5 185.0h0M221.0 209.5h0M172.5 273.0h0M358.0 179.5h0M293 272h0M344 128h0M265 216h0M239 226h0M236 451h0M225.5 313.0h0M245.5 449.0h0M406.5 138.0h0M251.5 214.0h0M227.0 207.5h0M406.5 304.5h0M272 183h0M315.5 117.0h0M314.5 412.5h0M198 175h0M213.5 119.5h0M241.5 440.5h0M239.5 120.5h0M205.5 236.0h0M160.5 192.5h0M201.5 206.5h0M339.5 371.0h0M317 461h0M84 241h0M429.5 152.5h0M267.5 277.0h0M299.5 374.0h0M222.5 207.0h0M401 345h0M328.0 188.5h0M128.5 186.5h0M199 428h0M264.0 149.5h0M109.5 208.5h0M288.5 122.0h0M245.5 437.0h0M169.0 161.5h0M346.5 178.0h0M377.0 278.5h0M102.0 370.5h0M257.0 317.5h0M201.0 320.5h0M379.5 379.0h0M269.0 239.5h0M145 204h0M380.5 273.0h0M332.5 454.5h0M343.5 114.0h0M205.5 127.5h0M335.5 200.0h0M198.0 378.5h0M154 350h0M101.0 273.5h0M200.5 86.5h0M208.5 289.5h0M322.5 285.5h0M399.5 140.0h0M146.5 250.5h0M172.5 350.0h0M226 188h0M328.5 116.5h0M205.5 229.5h0M427.0 177.5h0M269.5 376.0h0M354.0 249.5h0M194.5 88.5h0M310.5 454.5h0M196.5 280.0h0M235 104h0M163.5 416.0h0M286.0 127.5h0M349.5 289.0h0M197.5 112.0h0M309 151h0M119.5 188.5h0M402.5 305.0h0M162 225h0M353.5 216.0h0M209.0 337.5h0M401 285h0M277.0 197.5h0M266.5 114.0h0M208.0 336.5h0M161.0 270.5h0M335.0 129.5h0M295.5 402.5h0M354.5 419.0h0M209.5 341.0h0M283 381h0M180 378h0M295.5 370.0h0M226.0 201.5h0M146.5 243.0h0M332.5 259.5h0M159 356h0M224.5 122.5h0M234 452h0M181.0 354.5h0M96.0 339.5h0M241.0 259.5h0M233.5 109.0h0M414 198h0M193.5 164.5h0M172 187h0M195.0 285.5h0M234.5 346.0h0M180 228h0M299.5 125.0h0M114.0 382.5h0M215.5 183.5h0M372 347h0M180 217h0M111.0 157.5h0M358.5 183.5h0M335 279h0M338.5 376.0h0M157.5 229.0h0M379.0 381.5h0M284.0 172.5h0M150.5 163.0h0M109.5 320.0h0M100.5 380.5h0M275 325h0M169.5 270.5h0M252.0 199.5h0M125.5 242.0h0M325.5 333.0h0M231.0 184.5h0M121 350h0M266.5 392.0h0M313.5 214.0h0M330.5 367.5h0M352.0 269.5h0M387.5 139.5h0M348.5 215.0h0M169 201h0M315.5 310.0h0M183 391h0M158.5 199.0h0M119 398h0M352 300h0M400.5 252.0h0M341.5 408.5h0M243.0 204.5h0M318.0 216.5h0M250 165h0M84.0 252.5h0M143.5 175.0h0M133.0 260.5h0M129 171h0M165 247h0M342.5 385.0h0M336.0 253.5h0M82.5 266.0h0M199.5 200.5h0M253.5 277.5h0M172.5 330.5h0M241.5 307.5h0M283.5 322.5h0M251 251h0M262.5 383.0h0M146.0 350.5h0M361.5 318.5h0M339.0 256.5h0M291.5 282.5h0M218 188h0M199.5 358.0h0M266.0 427.5h0M367.5 296.0h0M314 340h0M156.0 229.5h0M286.5 140.5h0M275.0 353.5h0M131.5 159.5h0M321.5 190.5h0M163 219h0M326.0 154.5h0M261.0 183.5h0M413.5 172.0h0M396.5 268.0h0M226.0 92.5h0M204 316h0M92.5 217.5h0M344.5 158.0h0M339.0 188.5h0M281.5 399.5h0M293.0 192.5h0M311 431h0M209 307h0M267.5 281.5h0M378.5 340.0h0M301.5 304.0h0M217.5 334.0h0M267.0 307.5h0M119.5 356.0h0M330.0 240.5h0M400.5 348.5h0M321.0 253.5h0M351.0 396.5h0M249 240h0M299.5 234.0h0M387.5 335.5h0M281.5 171.5h0M187.5 300.0h0M326.5 187.5h0M384 179h0M316.5 191.5h0M328.5 385.0h0M192.5 374.0h0M117.0 382.5h0M209.5 377.5h0M411.5 311.0h0M112.0 171.5h0M354.5 327.0h0M147.0 211.5h0M249.5 264.5h0M337 371h0M165 163h0M131.5 341.5h0M276 359h0M175.0 372.5h0M228 176h0M400 250h0M331.5 422.0h0M420.5 207.5h0M298 160h0M137.5 351.5h0M211.0 276.5h0M203 265h0M224.0 365.5h0M406 165h0M282.5 294.5h0M364 413h0M80.5 270.5h0M190 374h0M391.0 271.5h0M259.5 317.0h0M241.0 112.5h0M225.5 155.5h0M215.0 156.5h0M164.5 181.5h0M246.5 438.0h0M219.5 412.5h0M164 187h0M403.5 196.5h0M240 148h0M194.5 439.0h0M432.5 147.5h0M172 380h0M249.0 254.5h0M264.5 363.5h0M400.0 205.5h0M380.5 382.5h0M307.5 405.5h0M257.0 151.5h0M144.5 422.5h0M394 208h0M141 363h0M277.5 404.5h0M404.0 184.5h0M320.5 408.5h0M393.5 172.0h0M305.5 208.0h0M331.5 218.5h0M274.5 97.0h0M242.5 241.0h0M133.0 218.5h0M208.5 391.5h0M255.0 441.5h0M190.5 310.5h0M255.0 402.5h0M277.5 250.0h0M117 222h0M282 398h0M393 158h0M246.0 329.5h0M430.0 140.5h0M305.0 352.5h0M280.5 213.5h0M279.0 162.5h0M283 324h0M117.5 214.5h0M312.5 272.5h0M270 290h0M153 326h0M157.0 397.5h0M292.0 258.5h0M231.5 339.0h0M405 142h0M366 315h0M298.5 200.5h0M299.5 296.0h0M297.5 203.0h0M256.5 182.0h0M168.5 418.5h0M226.5 129.0h0M342 435h0M153.5 217.5h0M145.5 131.5h0M379.0 276.5h0M315.5 239.5h0M341.5 231.5h0M418.5 145.0h0M306.0 143.5h0M183.5 291.5h0M208.5 87.5h0M221 127h0M285.0 278.5h0M104 238h0M373.0 185.5h0M284.5 296.5h0M116.0 209.5h0M257 338h0M364.5 237.5h0M138 197h0M306.5 368.5h0M306.0 396.5h0M89.5 316.5h0M327.5 252.5h0M106.5 238.0h0M265.0 156.5h0M138.5 230.5h0M416.5 253.5h0M297.5 422.5h0M299.5 232.5h0M271.5 448.0h0M117.5 378.5h0M348 136h0M230 144h0M384.0 332.5h0M374 207h0M202.5 293.0h0M165 283h0M222 267h0M300.5 458.0h0M309.0 357.5h0M396 327h0M194.0 177.5h0M167.0 390.5h0M240.5 109.5h0M161 433h0M141.5 336.0h0M165 313h0M252.5 213.0h0M360.0 411.5h0M325.5 222.5h0M299 316h0M384 257h0M214 350h0M181.5 299.0h0M397.5 281.5h0M186.5 145.5h0M311.0 165.5h0M151.5 285.0h0M245.5 253.0h0M303.5 230.0h0M104.5 190.0h0M243 444h0M345.5 262.5h0M127.5 348.0h0M301 151h0M182 357h0M193 318h0M157.0 284.5h0M90.5 185.5h0M312.0 288.5h0M419 203h0M244.5 453.5h0M159.0 300.5h0M255.0 147.5h0M273.5 374.5h0M251.5 275.5h0M361 262h0M344.5 260.0h0M83.5 251.0h0M302.5 150.5h0M250.5 278.0h0M170.0 415.5h0M171.5 159.5h0M84.5 301.5h0M302.5 218.5h0M99.5 326.0h0M373.5 179.0h0M371.5 316.0h0M316.5 176.0h0M213.0 379.5h0M289.5 121.0h0M377.5 162.5h0M230 257h0M341.5 372.5h0M238 214h0M192.5 387.5h0M224.5 93.5h0M170.5 419.0h0M343.5 387.5h0M399.5 163.5h0M255 444h0M205.0 301.5h0M197.0 425.5h0M323 226h0M425.0 154.5h0M212.5 96.5h0M164.0 336.5h0M268.5 296.0h0M162.5 392.0h0M137.5 380.5h0M293.5 321.0h0M300.5 147.0h0M232.5 239.5h0M157.5 321.0h0M269.5 182.5h0M295.5 364.0h0M316.5 275.5h0M194.5 320.5h0M244.0 273.5h0M256.5 281.0h0M202.5 250.5h0M358.0 439.5h0M242.5 265.0h0M170.0 179.5h0M297 208h0M290.5 311.0h0M364 309h0M180.5 405.0h0M335.5 163.5h0M187.5 362.0h0M287.5 432.0h0M249 172h0M178.5 364.5h0M211.0 102.5h0M419.5 252.5h0M235.5 345.5h0M311.5 217.0h0M358.5 302.5h0M338 281h0M108.0 368.5h0M149.5 225.5h0M94 345h0M186.5 181.0h0M327 326h0M220.5 151.5h0M315 366h0M333.5 227.0h0M228 326h0M417 123h0M199.0 165.5h0M243 133h0M300 296h0M154 301h0M171.5 314.5h0M271.5 425.0h0M255.5 267.0h0M231.5 179.0h0M243 132h0M336.0 217.5h0M408 324h0M411 202h0M178 327h0M167 129h0M339 350h0M405 132h0M326.5 411.0h0M291.5 412.0h0M432.5 132.0h0M279.5 344.0h0M251.0 342.5h0M317.0 124.5h0M162.5 238.5h0M346.5 454.5h0M304.5 127.0h0M287.5 411.5h0M358 429h0M246.5 321.5h0M217 316h0M171 304h0M378.5 302.5h0M130.5 178.0h0M175 328h0M287.5 403.0h0M224.5 431.5h0M396 127h0M285.5 395.0h0M302.0 123.5h0M181.0 278.5h0M386 157h0M310 182h0M368 171h0M262.5 458.0h0M170.0 382.5h0M363.5 342.5h0M285.5 352.0h0M391 234h0M290 392h0M344.0 405.5h0M100 201h0M363.5 416.5h0M283.0 285.5h0M210.5 187.5h0M128 393h0M188 300h0M381.5 337.0h0M390 248h0M135.5 164.5h0M330 227h0M313.5 190.0h0M111.5 294.0h0M327.5 469.0h0M330.5 384.5h0M286.5 452.0h0M321 380h0M231 167h0M334.5 116.5h0M149.5 377.5h0M331 296h0M178.5 261.5h0M158.5 238.5h0M192.0 267.5h0M305.5 272.0h0M382 138h0M390.5 262.5h0M407.0 233.5h0M421.0 223.5h0M116 228h0M129.5 287.5h0M120.0 417.5h0M268 119h0M269.0 201.5h0M309 408h0M378.5 364.5h0M273.0 307.5h0M128.5 389.0h0M176.5 398.0h0M333 298h0M295.5 262.0h0M373.0 317.5h0M217.5 149.0h0M128 215h0M405.0 223.5h0M136.0 283.5h0M122 360h0M106.0 348.5h0M196 90h0M235.5 200.0h0M328.5 167.5h0M257.0 398.5h0M313.5 210.0h0M291.5 450.0h0M318.5 270.5h0M398 332h0M323.5 248.0h0M329.0 335.5h0M381.0 154.5h0M298.0 349.5h0M311 411h0M197.5 380.5h0M176.5 287.0h0M405 115h0M292.0 200.5h0M331 258h0M416 196h0M385 300h0M400.5 130.5h0M414.5 146.5h0M280.5 213.5h0M161.0 431.5h0M269.5 348.0h0M163 428h0M349 344h0M413.0 263.5h0M390.0 263.5h0M365.5 346.5h0M135 239h0M405.0 264.5h0M379.5 183.5h0M382.0 196.5h0M317 408h0M256 193h0M413.5 271.0h0M249.5 245.0h0M292.5 304.5h0M375 313h0M329.0 370.5h0M341.5 263.0h0M117 211h0M142 373h0M234.0 288.5h0M370.5 326.0h0M227.5 309.0h0M235.5 262.0h0M353 432h0M279.0 213.5h0M256.5 155.0h0M389.5 145.0h0M344.5 271.5h0M209 310h0M287.0 131.5h0M390.5 289.0h0M191.5 396.0h0M213.0 231.5h0M251.5 286.5h0M353 213h0M199.5 91.0h0M377.5 351.5h0M398.5 310.5h0M306.0 286.5h0M161.5 199.0h0M258.5 130.0h0M386.5 121.5h0M290.0 457.5h0M337.5 134.0h0M247.5 403.5h0M168.5 134.5h0M286.5 113.0h0M222 133h0M337.5 218.0h0M256 132h0M263.5 356.0h0M82.5 269.5h0M130 380h0M352.5 277.0h0M183.5 425.5h0M232 408h0M226.0 110.5h0M277 268h0M328.5 326.5h0M249.5 341.0h0M331.5 417.5h0M215.5 196.5h0M356.0 435.5h0M210.0 162.5h0M270.0 214.5h0M176.0 336.5h0M121 245h0M372.0 188.5h0M252.5 259.5h0M157.5 161.0h0M309.5 215.5h0M383 199h0M421.5 133.0h0M288.5 164.0h0M298.0 377.5h0M153 411h0M166.0 315.5h0M157.0 390.5h0M336.0 268.5h0M229 339h0M354.5 284.5h0M291 286h0M199 152h0M391.5 296.0h0M199.0 276.5h0M275.0 373.5h0M354.5 262.0h0M219.5 304.5h0M101.5 193.5h0M266 414h0M177.5 175.5h0M309 356h0M296.0 260.5h0M412.0 295.5h0M192.5 300.0h0M323.5 265.0h0M376 112h0M298 112h0M329 279h0M270.5 292.0h0M270.5 398.5h0M262.0 326.5h0M278.5 394.0h0M178.5 343.0h0M134.5 176.5h0M293 197h0M370.0 158.5h0M296.0 203.5h0M323.5 334.0h0M139.0 301.5h0M278.0 208.5h0M331.0 238.5h0M178.0 439.5h0M161 431h0M407 336h0M152 294h0M268.5 147.0h0M375.5 318.0h0M338.0 241.5h0M310.5 404.5h0M154.0 214.5h0M94.5 353.5h0M272 163h0M293 445h0M217.0 327.5h0M116.5 279.5h0M166 333h0M271.0 100.5h0M276 139h0M335.0 205.5h0M383.0 301.5h0M134.5 194.0h0M405.0 117.5h0M311 179h0M115 209h0M243.0 117.5h0M181.5 338.0h0M183.0 403.5h0M124 167h0M283 322h0M349.0 357.5h0M189.5 286.5h0M297.5 230.0h0M168.5 227.5h0M273.0 432.5h0M368 310h0M367.5 414.0h0M155.0 264.5h0M273 262h0M377 304h0M358.5 191.5h0M361.5 441.0h0M151.0 266.5h0M345 159h0M354.5 213.5h0M128.0 226.5h0M378.0 336.5h0M119.5 259.0h0M211.5 447.5h0M238 107h0M233.5 136.0h0M220 208h0M145 337h0M373.0 402.5h0M261.0 167.5h0M353 391h0M128.5 190.5h0M128.5 300.0h0M184 243h0M323.5 211.5h0M271 216h0M356.0 131.5h0M345.5 456.0h0M237.0 199.5h0M156.5 320.5h0M159 369h0M370.5 286.5h0M354.5 343.5h0M101.0 176.5h0M171 351h0M254 130h0M208.0 139.5h0M152.5 195.5h0M124.5 412.5h0M142 398h0M268.5 234.0h0M287.5 202.5h0M162.0 393.5h0M278.5 366.0h0M402.0 304.5h0M160.5 259.5h0M258 155h0M239.5 142.0h0M315 465h0M359 128h0M406.5 181.0h0M414 251h0M137 322h0M259.0 264.5h0M240 283h0M339.5 115.5h0M338 190h0M172.5 172.5h0M300.5 154.5h0M301 139h0M382.5 131.0h0M187.0 158.5h0M305.0 145.5h0M102 403h0M78 248h0M367.0 401.5h0M215.0 264.5h0M342.5 327.5h0M342.0 132.5h0M101.0 212.5h0M271.5 201.5h0M218.5 344.0h0M280.5 430.5h0M254.5 322.5h0M419.0 200.5h0M170.0 337.5h0M291.5 196.5h0M233 122h0M361.5 203.0h0M189 351h0M180 200h0M146.5 221.0h0M414 299h0M196 144h0M84.5 180.5h0M185.0 316.5h0M190.5 362.5h0M186.5 369.5h0M362.0 129.5h0M334.5 359.5h0M367.5 340.5h0M402.0 248.5h0M151.0 175.5h0M352.5 311.0h0M221.5 419.0h0M228.5 239.5h0M174.0 169.5h0M296 381h0M258.5 322.5h0M359.5 259.5h0M134.0 378.5h0M315.5 223.0h0M349.5 156.5h0M415.0 227.5h0M268 211h0M331.5 373.0h0M364 342h0M116.5 172.0h0M248 288h0M151.5 287.5h0M278 141h0M319 356h0M157.5 378.5h0M353.0 320.5h0M304 371h0M177.5 430.0h0M286.5 256.0h0M376.5 261.0h0M288.5 406.5h0M229 203h0M195.5 90.0h0M193.5 443.5h0M228.5 248.0h0M280.0 207.5h0M184 328h0M369.0 244.5h0M203.5 278.0h0M295.5 393.5h0M326.0 178.5h0M337.5 305.5h0M151.5 251.0h0M106.5 289.5h0M199 317h0M109.0 405.5h0M263.5 226.5h0M305.5 356.0h0M201.5 97.5h0M189.0 257.5h0M162 244h0M372.5 322.0h0M108.5 363.5h0M209.5 439.5h0M292 429h0M164.0 165.5h0M213.0 279.5h0M386 301h0M203 313h0M128.5 392.0h0M133 192h0M213 333h0M145 236h0M154 384h0M259 201h0M423 177h0M315.0 150.5h0M346.5 140.0h0M238.0 306.5h0M96.0 371.5h0M213.0 154.5h0M250 100h0M306.5 200.5h0M99.5 246.0h0M332.0 382.5h0M163.0 306.5h0M364 255h0M419.5 192.5h0M145.5 419.0h0M271 425h0M335 420h0M230.5 284.5h0M269 147h0M110 363h0M172.5 138.0h0M410.5 274.5h0M266.5 383.0h0M306.5 120.0h0M311.0 378.5h0M221 312h0M174.0 175.5h0M264.5 234.0h0M115.5 388.5h0M339.0 418.5h0M402.0 305.5h0M348.5 393.5h0M406 186h0M421.5 169.5h0M276.0 324.5h0M170.5 302.0h0M198 435h0M326.0 115.5h0M301.5 364.5h0M285 148h0M385.5 200.0h0M221.5 349.0h0M358.0 404.5h0M310 348h0M167.5 409.5h0M209.5 169.0h0M121 207h0M188.0 301.5h0M409.0 186.5h0M178.5 362.0h0M334.0 232.5h0M349.5 214.5h0M153.5 345.0h0M277 348h0M116.5 232.5h0M375 131h0M307 364h0M286.5 204.5h0M155.0 208.5h0M399.5 269.0h0M352.0 314.5h0M126.0 321.5h0M284 238h0M150 393h0M333.5 300.0h0M204.0 215.5h0M371.0 423.5h0M298 220h0M126 201h0M293 207h0M190.5 166.5h0M212.5 442.5h0M384 287h0M294 319h0M145.5 304.0h0M328.0 260.5h0M283.5 113.5h0M176.5 319.0h0M123 196h0M194.5 380.5h0M423.5 154.5h0M414 126h0M412.0 259.5h0M358.5 338.5h0M165.5 389.5h0M364.5 177.5h0M335.0 286.5h0M224.0 254.5h0M323.0 347.5h0M240.0 248.5h0M340 143h0M348.0 435.5h0M216.5 178.5h0M358 193h0M328 146h0M308 284h0M106 319h0M340.0 410.5h0M366.5 424.5h0M317.5 410.5h0M296.0 399.5h0M142.5 341.5h0M291.5 375.0h0M266.5 296.0h0M159.5 370.5h0M189.0 280.5h0M203 312h0M236.5 242.0h0M163.5 235.5h0M387.0 294.5h0M97.5 311.5h0M320.5 135.0h0M421 140h0M143.5 397.5h0M364.0 129.5h0M287.0 365.5h0M342.5 409.0h0M293.5 196.5h0M144.5 263.5h0M359.5 218.0h0M132 214h0M223 268h0M364.0 151.5h0M371.5 274.5h0M177 387h0M221.0 323.5h0M336.5 356.5h0M368.5 337.5h0M117.0 369.5h0M335.5 224.0h0M414 258h0M289.5 343.5h0M283.0 137.5h0M193.5 264.5h0M135.0 200.5h0M419.5 258.0h0M344 388h0M365.5 312.5h0M248.5 266.5h0M293.0 447.5h0M178.0 167.5h0M234.5 438.0h0M162.5 173.0h0M252 348h0M310.0 300.5h0M282.0 255.5h0M334.0 408.5h0M223.0 151.5h0M376.0 242.5h0M253.5 293.5h0M344 121h0M264.0 126.5h0M371.5 246.0h0M313.5 230.0h0M287 370h0M231.0 224.5h0M202.5 376.0h0M143.5 358.5h0M212 129h0M89.5 208.0h0M378.5 389.5h0M165.5 122.0h0M178.5 285.0h0M421.5 188.5h0M230.5 130.0h0M311.0 128.5h0M157 409h0M322.0 360.5h0M413.0 171.5h0M261.5 322.5h0M333.5 434.0h0M81.5 224.5h0M276.0 352.5h0M295.0 282.5h0M197.5 346.5h0M160 353h0M298 231h0M209.5 331.5h0M359 295h0M415 151h0M377.5 306.0h0M139 389h0M219.0 166.5h0M235.0 211.5h0M203.5 445.0h0M356.0 211.5h0M316.5 251.5h0M305.0 438.5h0M171.5 434.0h0M181.5 326.0h0M217.5 245.0h0M185.0 347.5h0M304 398h0M323.5 212.5h0M271.5 201.5h0M363.5 353.0h0M294 194h0M271 177h0M189.5 256.5h0M224.0 122.5h0M292 284h0M404.5 117.0h0M158.5 290.0h0M266.5 390.0h0M305.5 237.0h0M280.5 352.0h0M385.0 118.5h0M168 430h0M275.0 296.5h0M145.0 236.5h0M324.5 250.0h0M190.0 214.5h0M282.5 197.0h0M165.0 287.5h0M351.5 142.0h0M381.5 256.0h0M120.0 301.5h0M320.5 434.5h0M411.0 118.5h0M208.0 182.5h0M375.5 176.5h0M249.5 245.0h0M349.5 370.5h0M214 408h0M301 382h0M319.0 305.5h0M189.0 311.5h0M317.5 356.0h0M317.5 434.0h0M237.0 263.5h0M226.5 332.5h0M150 162h0M217.5 204.0h0M311 279h0M356 340h0M263 162h0M400.0 234.5h0M190.0 126.5h0M253.5 276.0h0M150.0 407.5h0M318.5 232.0h0M113.5 341.5h0M107.0 169.5h0M165 417h0M323.5 440.0h0M306.0 265.5h0M122 398h0M125 251h0M232 260h0M276.0 202.5h0M313.5 172.0h0M315.0 430.5h0M354.0 162.5h0M262.5 416.0h0M390 229h0M124.0 354.5h0M105 279h0M329.0 208.5h0M407.5 266.5h0M268.5 131.5h0M132.0 226.5h0M391.5 326.0h0M124.5 185.5h0M189.5 220.0h0M369.5 424.5h0M247.5 188.0h0M360 329h0M320 230h0M148.5 277.5h0M350 462h0M234.0 312.5h0M318.5 440.5h0M170.0 424.5h0M232 414h0M194.5 255.0h0M87.0 232.5h0M247.5 261.0h0M246 255h0M260.5 161.0h0M402.5 351.0h0M374.5 312.0h0M155.0 392.5h0M141 179h0M307.5 416.0h0M262 409h0M120.5 212.0h0M297.0 251.5h0M139.5 281.0h0M255 204h0M219.5 436.5h0M126 190h0M372.5 311.0h0M420.5 152.5h0M193.0 343.5h0M389 190h0M225.5 147.0h0M93.5 338.0h0M249.5 305.0h0M231.0 325.5h0M401.0 188.5h0M185.0 193.5h0M303.5 271.5h0M180 225h0M313 352h0M404.5 182.0h0M222.0 401.5h0M149 170h0M103.5 302.0h0M277 334h0M319.5 181.5h0M344.5 146.0h0M221.5 351.0h0M306.5 254.0h0M172.0 184.5h0M166 185h0M245 331h0M170.5 392.0h0M364.0 290.5h0M167.5 118.5h0M356.5 361.5h0M381.5 294.5h0M408.5 174.5h0M213.0 352.5h0M251 288h0M125.0 363.5h0M183.5 279.5h0M188.5 371.5h0M391.5 374.0h0M161.5 145.0h0M246.0 208.5h0M258 324h0M81 218h0M167 426h0M411 174h0M411.5 208.0h0M349.5 368.5h0M166.5 357.5h0M375 160h0M279 277h0M260.0 359.5h0M323.5 221.0h0M180.5 171.5h0M326.0 122.5h0M389 357h0M155.0 358.5h0M179 424h0M250.5 228.5h0M347 259h0M297.0 437.5h0M267.5 150.5h0M160.0 209.5h0M273.5 127.0h0M410 131h0M283 461h0M208.0 232.5h0M251.0 117.5h0M155.5 395.0h0M153 201h0M269 206h0M394.0 161.5h0M362 266h0M352.5 126.0h0M250.5 329.5h0M365.0 237.5h0M335 456h0M343 468h0M374.5 230.0h0M362.5 267.0h0M289.5 289.0h0M120.5 421.5h0M186.5 439.5h0M291.5 247.5h0M316.0 370.5h0M222.5 136.5h0M202.0 280.5h0M263.5 123.5h0M251.5 223.5h0M403.5 198.0h0M344.5 175.0h0M258 437h0M227.5 227.5h0M175 127h0M214 247h0M293.0 219.5h0M305.5 392.0h0M403.5 311.0h0M196.5 359.0h0M264.5 201.0h0M235.5 225.5h0M206.5 235.0h0M130 162h0M284.0 431.5h0M176.5 189.5h0M214 210h0M414.0 139.5h0M384.5 262.5h0M363 234h0M221.5 365.0h0M281.0 212.5h0M127 376h0M177.0 309.5h0M312.5 471.0h0M285.0 279.5h0M355.0 189.5h0M164.0 296.5h0M370.5 356.5h0M355.5 241.0h0M372.0 197.5h0M193.5 131.0h0M178.5 100.0h0M329.0 301.5h0M170.0 202.5h0M266.5 272.5h0M214.5 322.5h0M292.5 171.5h0M406.5 230.0h0M307.0 325.5h0M284.5 120.5h0M214.5 200.0h0M274.5 375.5h0M310.5 347.0h0M282 385h0M175 243h0M350.5 371.0h0M198 250h0M205 327h0M383.5 317.5h0M235.5 237.0h0M163.5 369.5h0M200.0 280.5h0M345.5 182.5h0M283.5 465.5h0M303.5 210.5h0M389.5 289.0h0M324 343h0M397.5 310.0h0M121 348h0M319 455h0M224 208h0M318.5 275.0h0M146 140h0M137.5 398.0h0M225.5 159.5h0M269.5 325.5h0M381.5 397.0h0M369.0 396.5h0M207 282h0M331.0 148.5h0M328.5 319.0h0M295 130h0M289.5 222.5h0M294.0 451.5h0M174.5 314.5h0M412.5 200.5h0M267.0 249.5h0M335.0 381.5h0M361.0 279.5h0M248.5 374.5h0M201 124h0M349.5 445.5h0M325.5 109.0h0M386.5 305.0h0M158.5 160.5h0M403.0 322.5h0M339 135h0M302 384h0M150.0 291.5h0M348.5 173.5h0M324.5 386.5h0M370.5 271.0h0M322.5 467.0h0M240.5 190.5h0M366.5 230.0h0M99.0 347.5h0M126.5 193.5h0M224.5 191.5h0M351.5 302.0h0M379.5 206.0h0M305.5 229.5h0M186.5 157.0h0M298.5 229.5h0M398.5 287.5h0M320 283h0M221.5 286.0h0M128.0 230.5h0M284.0 330.5h0M300.0 391.5h0M352.5 442.5h0M141.5 173.5h0M114.5 305.0h0M231.5 246.5h0M304.0 298.5h0M288.5 200.5h0M142 169h0M377.0 229.5h0M387.5 348.0h0M283.0 237.5h0M313.0 368.5h0M271 321h0M207.0 141.5h0M373.5 138.0h0M254.5 333.5h0M155.5 206.5h0M216.5 117.0h0M239.5 228.5h0M424.5 140.0h0M194 271h0M288.5 390.5h0M111 373h0M170.5 343.5h0M330.5 207.5h0M365.5 109.5h0M292 217h0M148.0 211.5h0M175.5 212.5h0M260.5 370.0h0M233 221h0M265.0 291.5h0M165.0 403.5h0M232 254h0M360.0 362.5h0M276 381h0M161.5 160.0h0M338 157h0M137.5 256.0h0M389.5 167.0h0M165.0 221.5h0M294 441h0M254 134h0M390.5 336.5h0M143.0 225.5h0M116 321h0M151 170h0M153.0 326.5h0M334.5 373.0h0M356 214h0M242.5 140.5h0M225.0 184.5h0M200.5 218.5h0M212 207h0M182.5 259.0h0M195.5 301.5h0M111.5 378.0h0M194.0 262.5h0M246.5 187.5h0M259 372h0M367 354h0M406.0 115.5h0M314.0 313.5h0M292.5 105.5h0M370.0 264.5h0M327.0 434.5h0M82 240h0M232 326h0M177.5 146.5h0M305 266h0M238.5 143.5h0M357.5 408.5h0M217.5 184.5h0M370 270h0M282 440h0M289 126h0M379.0 371.5h0M272.0 350.5h0M201.0 131.5h0M291.5 226.5h0M249 349h0M334.0 118.5h0M103.5 211.5h0M154.5 359.0h0M247.5 439.5h0M346.5 477.0h0M351.0 205.5h0M260.5 370.0h0M327.5 304.5h0M185.5 267.5h0M349.0 291.5h0M406.0 333.5h0M402.5 314.5h0M191.5 239.5h0M171.5 258.0h0M282.5 168.0h0M268 450h0M251.5 324.5h0M207 405h0M88 257h0M95.5 379.5h0M278.0 228.5h0M298 211h0M259 165h0M127 218h0M321.5 394.0h0M187.0 285.5h0M283.0 443.5h0M104.0 335.5h0M125.5 211.0h0M413.5 199.0h0M298.5 426.0h0M110.5 377.0h0M273 134h0M228 127h0M300.5 389.0h0M343.5 457.0h0M193 423h0M361.0 371.5h0M390 223h0M230.5 104.5h0M291.5 215.5h0M124.5 192.0h0M174.5 358.5h0M368.0 258.5h0M148 144h0M136.5 308.0h0M317.5 346.0h0M381.5 298.5h0M173 192h0M316.0 147.5h0M293 367h0M389.5 277.0h0M288 429h0M206.0 168.5h0M385 315h0M320.5 393.5h0M420 235h0M230.5 164.5h0M322 377h0M389.5 164.0h0M282 236h0M160 254h0M174.0 336.5h0M210.5 89.5h0M290.0 425.5h0M184 428h0M416.5 214.5h0M259.5 179.0h0M355.5 154.5h0M121.0 228.5h0M251.5 128.0h0M275.0 429.5h0M300.5 471.0h0M326 353h0M265.5 342.0h0M333 331h0M141.5 190.5h0M240.0 177.5h0M381.5 187.0h0M345.5 327.5h0M224.5 370.5h0M373.5 194.0h0M299.0 152.5h0M211 173h0M248.5 105.5h0M317.5 224.0h0M268.0 345.5h0M251.0 342.5h0M356.5 139.5h0M319.5 388.0h0M191 168h0M145 201h0M321.5 332.0h0M227.5 444.5h0M395.0 247.5h0M321.0 378.5h0M376.5 347.5h0M96.0 248.5h0M177.5 277.0h0M323 242h0M266.0 141.5h0M279.5 183.0h0M187.0 295.5h0M327.5 352.5h0M156.5 393.0h0M291.5 364.5h0M336.5 462.0h0M135 198h0M352.5 419.0h0M151.5 160.0h0M251.5 136.0h0M341 306h0M150.5 248.0h0M214.5 208.5h0M351 314h0M90.0 184.5h0M374.5 330.5h0M350.5 255.5h0M317.0 315.5h0M242.0 416.5h0M201.0 378.5h0M285.5 176.5h0M361 404h0M148 348h0M371.5 351.5h0M144.0 301.5h0M154.5 392.0h0M340.5 432.5h0M394.0 155.5h0M108 174h0M150.5 251.5h0M191.5 227.0h0M360.5 254.5h0M311.0 235.5h0M173.5 259.0h0M320 333h0M333.5 367.5h0M127.5 160.5h0M370.0 171.5h0M345.5 337.0h0M190.5 436.5h0M169 409h0M315 271h0M163.0 339.5h0M248.0 265.5h0M428 160h0M199.5 252.0h0M327.5 260.5h0M365.0 131.5h0M359.5 304.5h0M150.0 292.5h0M243.5 366.0h0M325.5 460.5h0M247.5 99.0h0M327.0 393.5h0M301.5 289.0h0M186.5 167.5h0M206.0 266.5h0M276.0 461.5h0M371.5 400.0h0M340.5 179.5h0M273.0 456.5h0M260.0 443.5h0M197.5 219.5h0M189.0 228.5h0M183.5 434.0h0M269.0 347.5h0M207.5 292.5h0M293.0 141.5h0M161.0 185.5h0M359.5 276.0h0M271.0 237.5h0M188.5 334.5h0M156.0 296.5h0M388 116h0M264 389h0M261.5 317.0h0M341.5 258.5h0M169 208h0M414.5 258.5h0M172.0 286.5h0M328.5 111.5h0M197 169h0M230.5 90.5h0M200 364h0M231.5 119.5h0M275.5 298.0h0M409 118h0M266.5 177.5h0M306.5 196.5h0M229.5 253.5h0M342 240h0M386.0 217.5h0M365.5 291.5h0M177 372h0M285.0 182.5h0M282 268h0M234 278h0M367.5 260.0h0M316.0 448.5h0M270.5 233.0h0M202.0 295.5h0M208.0 338.5h0M314.5 253.0h0M263 379h0M245 225h0M194.0 235.5h0M322.5 471.0h0M325.0 453.5h0M150.5 170.5h0M139 424h0M189 385h0M220.0 186.5h0M183.5 364.5h0M269.5 169.0h0M390.5 361.5h0M332.0 426.5h0M208.5 222.5h0M98.5 349.5h0M311 334h0M249.5 324.0h0M137.5 242.0h0M158 378h0M207 396h0M190 403h0M345.5 451.5h0M296.5 202.0h0M429.5 128.5h0M325.5 141.5h0M362.5 392.5h0M326 361h0M300.5 349.5h0M158.5 248.5h0M388.5 332.0h0M349.5 199.0h0M276.5 360.0h0M284.5 227.0h0M409 326h0M284.5 207.5h0M307.0 306.5h0M78.0 185.5h0M98.0 192.5h0M335.5 471.5h0M114 168h0M384.5 208.5h0M313.0 226.5h0M408 212h0M101.5 398.0h0M368 385h0M284 181h0M353.0 280.5h0M211.0 186.5h0M233.0 264.5h0M105.5 176.5h0M174.5 303.5h0M387.5 294.5h0M401.5 273.5h0M359 353h0M303.0 242.5h0M399 338h0M380.5 261.0h0M415.5 209.0h0M123.0 156.5h0M390.0 201.5h0M110.5 344.5h0M222.5 297.0h0M406.0 181.5h0M193.5 330.5h0M197 233h0M385.5 344.0h0M406 262h0M415.0 165.5h0M149.5 231.0h0M318 397h0M223.5 305.0h0M348 400h0M249 422h0M264.5 111.0h0M256 238h0M395 324h0M394 244h0M333 205h0M199.5 302.5h0M292.5 144.0h0M126.5 318.5h0M373.5 398.0h0M304 227h0M307.5 223.0h0M275.0 416.5h0M179 253h0M104.0 418.5h0M347.0 421.5h0M322.5 272.0h0M196.5 337.5h0M359 352h0M290 106h0M382.0 182.5h0M129 261h0M242.5 199.5h0M392.5 295.0h0M252.5 345.5h0M384.0 177.5h0M139.0 222.5h0M383.0 268.5h0M159.5 339.5h0M320.5 254.5h0M122.0 221.5h0M116.5 368.5h0M360.5 263.0h0M228.5 214.5h0M296 164h0M214 340h0M273.5 229.5h0M193.5 434.5h0M162.5 206.5h0M323.0 229.5h0M131 186h0M260 148h0M405.5 155.0h0M237.5 262.5h0M309 105h0M231.5 152.5h0M99 316h0M144.5 147.5h0M353.5 303.5h0M362.5 162.0h0M105 267h0M329.0 165.5h0M158.5 209.5h0M396 229h0M340.5 136.5h0M275.5 156.5h0M241.0 374.5h0M208 233h0M354.0 388.5h0M421.5 196.5h0M331.5 378.0h0M272.5 375.5h0M173.5 142.0h0M285.5 261.5h0M324 341h0M426 132h0M317.5 453.0h0M155.0 388.5h0M410.5 318.0h0M227.0 372.5h0M99.0 192.5h0M223 106h0M151.5 349.0h0M420.5 177.0h0M187 213h0M277.0 372.5h0M296.5 126.5h0M352.5 324.5h0M331 235h0M214.0 167.5h0M208 430h0M315.5 180.0h0M128.5 325.5h0M127.5 372.0h0M337.5 220.5h0M364.0 160.5h0M259 158h0M211.0 160.5h0M170.5 364.5h0M285.5 110.5h0M299.5 271.0h0M190.0 399.5h0M370 270h0M344.5 394.0h0M163.5 275.0h0M113.5 173.5h0M256.0 147.5h0M251.0 457.5h0M415.5 182.5h0M101.0 390.5h0M243.5 109.0h0M258.5 183.0h0M281 382h0M182.5 397.5h0M358 305h0M122.5 357.5h0M351.5 166.5h0M387.0 314.5h0M395.5 151.5h0M326.5 139.5h0M246.5 207.0h0M309.0 234.5h0M379.5 153.0h0M375.5 299.5h0M402.0 125.5h0M230.5 173.0h0M110.0 333.5h0M404.5 288.5h0M132.5 206.0h0M91.0 238.5h0M268.5 331.0h0M310 114h0M305.5 183.0h0M242.5 351.5h0M170.5 200.0h0M334 245h0M423.5 147.0h0M240.5 200.5h0M245.0 216.5h0M366.5 116.0h0M329.5 378.5h0M368.5 144.5h0M139.5 155.5h0M140.0 415.5h0M321.5 219.5h0M347 318h0M398.5 236.0h0M291.0 151.5h0M228 339h0M397 159h0M379.0 327.5h0M278.5 452.0h0M307.5 140.5h0M234.5 253.0h0" stroke="#0820a0" stroke-width="2.0" stroke-opacity="0.8" stroke-linecap="round" fill="none"/><path d="M298.5 380.5h0M296.5 131.5h0M143.5 167.5h0M267.0 354.5h0M178.0 324.5h0M346 422h0M138.5 386.0h0M194.0 223.5h0M105.5 383.0h0M339.5 464.5h0M382.0 199.5h0M360 394h0M159 352h0M341.5 415.5h0M391 359h0M259.5 294.5h0M416.5 273.5h0M314.5 250.5h0M230.5 343.5h0M169.5 246.0h0M269.5 217.5h0M231.5 198.5h0M384.5 159.5h0M325.5 255.5h0M151.5 412.0h0M381 169h0M332.0 134.5h0M417.0 231.5h0M115 175h0M320.5 170.5h0M196 236h0M308 406h0M259 320h0M153 275h0M323 353h0M109 351h0M196.5 118.0h0M268 453h0M108.5 206.0h0M228 259h0M364 211h0M182 235h0M325.0 351.5h0M198.5 315.0h0M168 370h0M316.0 467.5h0M259 443h0M132.0 344.5h0M295.0 236.5h0M272.5 369.5h0M401.5 148.0h0M277.0 416.5h0M221.5 252.5h0M178.5 193.5h0M247 418h0M307.0 455.5h0M349.5 378.0h0M142.5 231.5h0M321.5 280.5h0M174 282h0M281 200h0M415 117h0M242.0 114.5h0M357 256h0M353.5 247.5h0M408.5 233.5h0M236.5 110.0h0M397.0 159.5h0M116 176h0M355.5 141.5h0M332.5 459.5h0M163.5 191.5h0M301.0 179.5h0M237.5 343.0h0M123.5 167.5h0M322.5 261.0h0M381.5 316.0h0M178 153h0M229 190h0M225.5 164.5h0M417.0 268.5h0M280.0 282.5h0M115.5 162.0h0M287 339h0M410 194h0M431 132h0M419.0 206.5h0M192.5 376.5h0M244.5 128.5h0M384.5 176.5h0M363 391h0M353 361h0M351.0 432.5h0M221 347h0M290.5 386.5h0M373.5 173.0h0M314.5 320.5h0M217.5 210.0h0M188 358h0M225.0 133.5h0M236.0 145.5h0M256.5 425.5h0M417.5 238.0h0M169 150h0M283 284h0M212.0 208.5h0M170.5 376.0h0M296.0 328.5h0M295.5 331.5h0M150.0 279.5h0M356.5 344.0h0M327 468h0M89.0 252.5h0M315.5 338.0h0M260.0 263.5h0M223.5 122.0h0M298 292h0M399 314h0M359.0 134.5h0M246 439h0M337.5 109.5h0M347.0 457.5h0M195.5 247.0h0M249.5 149.0h0M298.0 318.5h0M317 225h0M293.5 367.5h0M164.5 214.0h0M350 313h0M281.0 126.5h0M196 132h0M351.5 237.0h0M151.5 302.0h0M371 212h0M383.5 139.0h0M320.0 187.5h0M287.5 169.0h0M400.5 326.5h0M206 126h0M241.5 189.5h0M238.5 165.0h0M148 301h0M158.5 215.5h0M349 229h0M323.5 358.0h0M361.5 266.5h0M272.0 322.5h0M206.5 266.0h0M234.5 177.0h0M342.0 230.5h0M329.5 142.0h0M333.5 258.0h0M252.5 110.0h0M365.5 135.0h0M364.0 238.5h0M203.5 352.0h0M129.5 213.5h0M391.0 251.5h0M358.5 285.5h0M248 446h0M290 146h0M225 239h0M194.0 361.5h0M274.5 317.0h0M389.5 219.5h0M245 329h0M217 315h0M237.5 390.0h0M245.0 382.5h0M376.5 272.0h0M155.5 394.0h0M138 234h0M225.5 285.0h0M192.5 263.5h0M279 118h0M114.0 196.5h0M249.5 133.5h0M393 296h0M253.0 103.5h0M281.0 450.5h0M364 440h0M374.5 170.5h0M181.5 421.5h0M196.5 91.0h0M331.0 259.5h0M408.5 197.0h0M372.5 260.5h0M379.0 156.5h0M361.0 291.5h0M186 221h0M169.5 400.0h0M292.0 379.5h0M161.5 263.5h0M215.0 234.5h0M161.0 327.5h0M252.0 161.5h0M375.5 329.5h0M323.5 248.0h0M210 375h0M397 129h0M207.0 312.5h0M255 121h0M389.0 119.5h0M282.5 310.0h0M118.0 294.5h0M347 129h0M296.5 299.0h0M132.0 224.5h0M258 347h0M214.5 323.5h0M362.0 440.5h0M107.5 229.0h0M259.5 230.0h0M163.5 402.5h0M159.5 285.0h0M250.5 143.0h0M242.5 128.5h0M120.0 177.5h0M190 217h0M313.5 254.0h0M405.5 332.0h0M340.5 265.5h0M372.5 298.0h0M165.5 344.0h0M382.5 298.0h0M146.5 246.5h0M304.0 222.5h0M306.0 398.5h0M327 400h0M96.0 195.5h0M257.0 330.5h0M219.5 292.0h0M426 167h0M291.0 332.5h0M353 321h0M418 257h0M379 113h0M223.5 442.5h0M324.0 260.5h0M333 368h0M344.5 181.0h0M407.0 149.5h0M325 229h0M257.5 355.0h0M214.5 287.5h0M117 204h0M390.5 258.5h0M102 390h0M180.5 350.5h0M187.0 369.5h0M76 238h0M192.0 88.5h0M217.5 262.5h0M134.0 226.5h0M353.5 403.5h0M325.0 391.5h0M406.5 116.0h0M333.5 167.5h0M222.5 401.0h0M147.5 226.0h0M343 177h0M377.5 344.0h0M359.5 433.5h0M169.5 324.0h0M289 246h0M328.5 398.0h0M363.5 156.0h0M360.5 196.5h0M372 279h0M160 274h0M213.5 443.5h0M221.0 336.5h0M380.0 120.5h0M360.0 278.5h0M80.5 268.5h0M206.5 244.5h0M390 206h0M256 204h0M400.5 298.5h0M182.5 142.0h0M293.5 459.0h0M108.0 201.5h0M341.5 375.5h0M408.5 195.0h0M191.5 309.5h0M176.5 185.5h0M201.5 381.5h0M188 309h0M298 175h0M205.5 126.0h0M427 180h0M306 373h0M337 261h0M354.5 368.5h0M365 175h0M207.5 185.5h0M267.5 286.5h0M144 358h0M346.5 260.0h0M343.0 419.5h0M246.0 196.5h0M130.5 413.0h0M217.0 180.5h0M340.5 141.0h0M200.5 193.5h0M160.5 344.0h0M318.5 216.0h0M230.0 149.5h0M381.5 280.0h0M201.5 364.5h0M247.5 220.5h0M267.0 230.5h0M259.0 165.5h0M148.0 328.5h0M146.5 430.5h0M148 215h0M168.0 129.5h0M184.0 192.5h0M298.5 205.0h0M290.5 383.0h0M216.5 122.0h0M363.5 387.5h0M117 402h0M268 346h0M265 383h0M217.5 99.5h0M345.5 390.0h0M137.5 180.5h0M195 299h0M388 244h0M112.0 358.5h0M112.0 308.5h0M377.0 175.5h0M104 226h0M209.0 155.5h0M233.0 321.5h0M382.5 323.0h0M187.5 344.0h0M356.5 225.5h0M259.5 337.5h0M128 195h0M347.0 383.5h0M226.5 145.0h0M320.0 256.5h0M413.0 187.5h0M205.5 312.0h0M79.5 212.0h0M304.5 472.0h0M351 164h0M315.0 450.5h0M283.0 221.5h0M314.5 451.0h0M314.5 275.5h0M82.5 183.5h0M205 152h0M355 327h0M235.5 296.5h0M283.0 393.5h0M247.5 299.0h0M413.5 160.5h0M320.5 391.5h0M322.5 241.0h0M212.5 249.5h0M329.0 345.5h0M226 249h0M157 316h0M332.0 200.5h0M242.5 320.5h0M230.5 249.0h0M309.5 224.5h0M307.0 339.5h0M278.5 374.5h0M148.5 291.5h0M186.5 123.5h0M385 311h0M342.5 280.0h0M197 364h0M354.5 347.5h0M144.5 419.0h0M274 279h0M145.5 184.5h0M425.5 199.5h0M276 187h0M158.5 429.5h0M262.0 449.5h0M309.5 187.0h0M280 258h0M120.5 231.0h0M323.5 286.0h0M199.5 267.0h0M394 171h0M195.5 141.5h0M156.5 242.0h0M383.5 340.0h0M168 235h0M360.0 327.5h0M157 367h0M86.5 271.5h0M196 286h0M124.5 215.0h0M315.0 224.5h0M158 407h0M281 412h0M352 188h0M302.5 141.5h0M394.5 255.5h0M220.0 266.5h0M381 173h0M429 137h0M140 348h0M159.5 303.0h0M157.5 432.5h0M184.0 371.5h0M375.0 188.5h0M406 294h0M404.5 172.5h0M374.0 255.5h0M231.5 156.5h0M364.5 227.0h0M386.0 333.5h0M198.0 136.5h0M243.5 155.0h0M277.5 312.5h0M361 359h0M197.5 275.0h0M275.5 114.0h0M302 336h0M189.0 191.5h0M222.0 96.5h0M332 445h0M308.5 423.0h0M175.5 171.0h0M276.5 318.5h0M229.5 113.0h0M293.0 220.5h0M263.5 394.0h0M218.5 295.5h0M174.0 218.5h0M209 334h0M143.0 387.5h0M416.5 168.0h0M115.5 390.0h0M355.0 361.5h0M227.5 161.0h0M255.5 141.0h0M169.5 366.5h0M422.5 202.5h0M374 384h0M389.0 140.5h0M95.5 194.0h0M270.0 369.5h0M383.5 200.5h0M368.5 331.5h0M146.0 164.5h0M348.5 359.0h0M163.5 376.5h0M399.0 278.5h0M248 144h0M340.5 106.5h0M189.5 382.0h0M427 159h0M219.5 309.0h0M176.5 379.0h0M131 352h0M331.0 459.5h0M358.5 227.5h0M261.5 403.0h0M226 222h0M290 277h0M254.5 452.5h0M110 217h0M168.5 211.5h0M303.5 148.0h0M97.0 175.5h0M424 192h0M273.5 327.0h0M194.5 145.5h0M287.5 308.5h0M349 185h0M340 419h0M186 371h0M99.5 227.5h0M423.5 125.0h0M85.5 305.0h0M379.5 182.0h0M278 164h0M388.0 260.5h0M249.5 361.0h0M90.0 330.5h0M251.5 242.0h0M243.0 439.5h0M292.5 298.0h0M261.0 439.5h0M337.5 205.5h0M340 381h0M378.5 324.0h0M328.5 305.0h0M237.5 358.0h0M236.5 150.5h0M335.0 361.5h0M363.5 344.0h0M341.0 157.5h0M114.5 158.0h0M192 291h0M118.0 277.5h0M283 113h0M361 189h0M194.5 192.0h0M202.5 184.0h0M286.0 313.5h0M100.0 403.5h0M379.0 147.5h0M325.0 432.5h0M171.5 428.5h0M168.5 166.5h0M388.0 130.5h0M106.5 379.5h0M363.5 169.5h0M160.5 274.0h0M293.5 454.5h0M218.5 243.5h0M419.0 237.5h0M94 366h0M241.5 170.0h0M279 353h0M247.5 201.0h0M146.0 407.5h0M371 245h0M163 230h0M123.5 226.5h0M204 370h0M265.5 438.5h0M167.5 183.0h0M344 268h0M325.5 414.0h0M328.0 105.5h0M172.5 347.5h0M205.5 136.5h0M221 372h0M321.5 186.5h0M334.0 264.5h0M248.5 231.5h0M239 185h0M217.5 235.5h0M315.5 163.5h0M85 252h0M235.5 427.0h0M229.0 246.5h0M194 244h0M356 167h0M110.5 358.5h0M308.5 126.5h0M340 204h0M94.5 171.0h0M133.5 165.0h0M171 129h0M125.5 268.5h0M197.0 138.5h0M245.5 302.0h0M196 132h0M268.5 433.0h0M95.0 235.5h0M294 409h0M195.5 169.0h0M345 328h0M263.5 343.0h0M390 302h0M200.5 336.0h0M302.5 106.5h0M273.5 272.0h0M181.5 340.0h0M304.5 411.0h0M259 338h0M375.0 320.5h0M391 206h0M204.5 317.0h0M190 354h0M399.0 179.5h0M187 101h0M211.5 218.5h0M115.5 349.0h0M256.0 173.5h0M150.5 219.5h0M183.5 419.0h0M207.5 337.0h0M350 449h0M245 442h0M254 150h0M240.0 451.5h0M220.5 92.0h0M210.5 318.5h0M276.0 216.5h0M207.5 155.5h0M293 343h0M278.5 442.5h0M337.0 347.5h0M345 404h0M285.5 163.5h0M195 182h0M211.5 276.0h0M124.5 156.5h0M185 149h0M148 389h0M176 281h0M324.0 156.5h0M107.5 286.5h0M198.5 162.0h0M303.5 152.5h0M275.5 223.5h0M371.5 196.0h0M277.5 103.0h0M142.0 273.5h0M302 271h0M263.0 175.5h0M407.5 310.0h0M343.0 237.5h0M209.5 368.0h0M269.5 246.0h0M238.5 369.5h0M350.5 394.0h0M378.0 191.5h0M211.5 136.5h0M346.0 135.5h0M265 265h0M135.5 303.0h0M297.5 225.0h0M136.5 169.5h0M352.0 415.5h0M167.0 436.5h0M307 224h0M196.5 222.0h0M257 165h0M145.0 241.5h0M226.5 237.0h0M250 318h0M289.5 461.0h0M128.0 235.5h0M288.5 147.0h0M288.0 199.5h0M89.5 261.0h0M232.0 112.5h0M376.0 381.5h0M156.0 186.5h0M237.0 223.5h0M293 396h0M321 234h0M91.5 261.0h0M110.5 222.5h0M353 113h0M319.5 178.0h0M288.5 365.0h0M411.5 222.0h0M346.5 353.0h0M221.5 445.0h0M295.5 175.0h0M294 457h0M181.5 219.5h0M184 227h0M271.5 231.0h0M340 461h0M360.5 249.5h0M198.0 306.5h0M97.5 360.0h0M348.0 396.5h0M311.0 357.5h0M397.0 253.5h0M413.5 167.5h0M193.5 178.0h0M208.5 187.5h0M385 158h0M92 175h0M280.5 196.5h0M209.5 199.5h0M387 292h0M373.5 253.5h0M337 261h0M203.0 227.5h0M350.5 168.5h0M360.5 365.5h0M343.5 436.0h0M395.5 362.5h0M140.5 367.0h0M246 181h0M195.0 106.5h0M364 128h0M236 238h0M150.5 376.5h0M308.5 377.0h0M182.5 412.5h0M249.5 359.0h0M291.0 188.5h0M331.5 320.0h0M367.5 377.5h0M316.5 263.5h0M131 224h0M126.0 344.5h0M182.5 347.5h0M173.0 143.5h0M256.5 184.5h0M193.5 269.0h0M322 185h0M243 313h0M366.5 134.0h0M368.5 220.5h0M288.5 423.5h0M363 336h0M196.0 128.5h0M400 261h0M416.5 266.0h0M363.5 239.0h0M328 120h0M293.5 202.5h0M392.5 131.5h0M381.5 372.5h0M194.5 332.0h0M316.5 306.5h0M259.5 332.5h0M248.5 419.5h0M273.0 410.5h0M370.0 401.5h0M246 107h0M367.0 209.5h0M216.5 166.0h0M212.0 137.5h0M273.5 142.5h0M337.5 390.0h0M274.0 435.5h0M409.0 208.5h0M129.5 245.5h0M182.5 301.5h0M371.0 159.5h0M248.5 376.0h0M100 229h0M248.0 112.5h0M264.5 135.0h0M308.5 278.5h0M133.5 213.0h0M82.5 185.0h0M297 331h0M101.5 227.0h0M221.5 385.5h0M149.5 383.0h0M206.5 320.5h0M342 163h0M298.0 361.5h0M107.0 210.5h0M329.5 370.0h0M247.0 304.5h0M384.0 386.5h0M366 176h0M87.5 284.0h0M253.5 163.0h0M259.5 250.0h0M243.5 93.5h0M301.0 257.5h0M221.5 191.0h0M186 391h0M401 327h0M226.0 295.5h0M366.0 194.5h0M253 106h0M317.0 158.5h0M244 378h0M174.0 414.5h0M168 231h0M400.5 301.5h0M90.5 211.0h0M144.5 232.5h0M344 113h0M359 430h0M111.5 207.5h0M330.5 372.5h0M183.5 158.5h0M373.5 172.0h0M153 272h0M262 429h0M94 238h0M124.5 399.5h0M277.5 240.5h0M137.5 384.0h0M287 425h0M344.0 475.5h0M266.5 308.0h0M197.5 97.0h0M378 139h0M329 337h0M371 164h0M297.0 411.5h0M132.0 195.5h0M284.5 262.5h0M296.5 439.0h0M174.5 164.5h0M319.5 172.0h0M173.0 311.5h0M275.5 275.5h0M428.5 159.0h0M347.0 207.5h0M134.5 216.5h0M332 370h0M236.0 395.5h0M272.0 309.5h0M306.0 456.5h0M368 428h0M372.5 391.5h0M310 162h0M298.0 462.5h0M265 396h0M206.5 300.5h0M345.0 470.5h0M324.0 241.5h0M253.5 180.5h0M362.5 378.0h0M390.5 150.5h0M155 370h0M219.0 352.5h0M334.0 325.5h0M167.0 174.5h0M393.5 280.0h0M233.5 374.5h0M161 403h0M335 345h0M313.5 238.0h0M188.5 371.0h0M236.0 220.5h0M189.0 363.5h0M231.5 260.5h0M87.0 256.5h0M366 135h0M358.5 189.0h0M397.5 308.5h0M115 289h0M112.0 396.5h0M197.0 353.5h0M376.5 308.0h0M242.0 166.5h0M398.5 122.0h0M230 231h0M272 132h0M369.5 383.0h0M139.5 162.0h0M427 190h0M350.5 135.0h0M336.5 314.5h0M406.0 289.5h0M109 174h0M285.5 190.5h0M179 256h0M173 183h0M205.0 170.5h0M313 118h0M402.5 146.5h0M366.5 236.5h0M270.5 382.5h0M159.5 428.5h0M266 264h0M201.0 249.5h0M133 233h0M289 314h0M281.5 389.0h0M326.5 244.0h0M162.5 182.0h0M216.5 360.5h0M149.5 410.0h0M179 311h0M323.5 282.0h0M397.5 169.0h0M294.0 152.5h0M270.5 206.0h0M408 336h0M367 147h0M192.5 125.5h0M149.5 395.5h0M323.5 448.0h0M291.5 169.5h0M169.5 362.0h0M246.5 108.5h0M151.0 421.5h0M315.0 438.5h0M267.0 101.5h0M365.5 374.0h0M284.5 296.5h0M101.5 254.0h0M332.5 386.5h0M214 159h0M419 229h0M315.0 202.5h0M144 238h0M184.5 175.0h0M375.5 404.0h0M365 426h0M374.0 150.5h0M395.5 308.5h0M92 212h0M218 128h0M294.5 141.5h0M209 219h0M203 219h0M235.5 283.0h0M277.5 411.5h0M240 134h0M366.0 288.5h0M220.5 103.0h0M102.5 351.0h0M121 370h0M207 443h0M319.5 358.0h0M264.5 260.0h0M256.5 161.5h0M237.0 345.5h0M195.5 364.0h0M168.0 162.5h0M307.5 348.0h0M147.0 138.5h0M280.5 414.5h0M283.0 212.5h0M416.5 278.5h0M348.5 321.0h0M403 275h0M145.5 238.5h0M370.5 400.0h0M193.5 137.5h0M405.5 287.5h0M180 417h0M291.5 126.0h0M168.0 404.5h0M223.5 110.5h0M289.5 403.5h0M381.5 167.0h0M323.5 310.5h0M106 224h0M337.5 128.0h0M263.5 145.0h0M272.5 351.0h0M288.5 287.0h0M202.5 324.0h0M324.0 210.5h0M190 376h0M183 225h0M269 316h0M240.5 246.0h0M329 395h0M272.5 238.0h0M98 381h0M308.5 420.0h0M349 455h0M163.5 412.5h0M308.5 254.5h0M187.0 115.5h0M327 332h0M191.0 376.5h0M359.0 414.5h0M101 381h0M374.5 114.5h0M339.5 174.5h0M368.5 110.5h0M299.0 421.5h0M182.5 238.5h0M118.5 180.0h0M338 479h0M329.5 365.5h0M193.5 256.5h0M352.5 400.0h0M259.5 234.0h0M291.5 124.5h0M419.5 116.5h0M407 326h0M343.0 107.5h0M203.5 333.0h0M307.5 206.0h0M172.0 181.5h0M182.5 347.5h0M177.5 311.5h0M257.5 396.0h0M211.5 422.5h0M344.5 254.5h0M322.5 245.0h0M340.0 218.5h0M105.5 342.0h0M208.5 293.5h0M336 447h0M326.5 296.0h0M248.0 366.5h0M226.5 217.5h0M414.0 135.5h0M280 398h0M162 346h0M304.0 337.5h0M187.5 369.0h0M110 421h0M81.5 225.5h0M178.5 360.5h0M379.5 176.0h0M256.0 237.5h0M413.5 225.5h0M397.5 234.0h0M423.5 136.5h0M208.5 245.0h0M394.5 295.5h0M382.5 196.0h0M350.5 363.5h0M234.5 186.0h0M332.0 221.5h0M243.5 285.0h0M345 360h0M342 414h0M395 275h0M223.5 210.0h0M380.5 307.5h0M403.0 116.5h0M179.0 391.5h0M269.0 234.5h0M271.5 120.0h0M314.0 370.5h0M327 243h0M384.0 174.5h0M269.5 184.0h0M279 145h0M109.5 275.0h0M287.5 396.5h0M125.5 254.0h0M132.5 259.5h0M429.5 124.5h0M237 223h0M230.5 304.5h0M174 341h0M161.5 298.5h0M262 251h0M143.5 220.0h0M305.5 205.0h0M291 360h0M378.5 124.5h0M367.0 398.5h0M161.5 395.5h0M179.5 155.0h0M368.0 345.5h0M229.5 90.5h0M139.0 326.5h0M304.0 376.5h0M182.0 223.5h0M131.5 392.0h0M313 179h0M340 149h0M346.0 374.5h0M90.5 307.5h0M212.5 244.5h0M337 143h0M209 369h0M280.5 370.5h0M152.5 279.5h0M276.0 309.5h0M396 182h0M179.0 411.5h0M201.5 384.0h0M349.0 460.5h0M288.5 170.0h0M156.5 327.5h0M82.5 242.0h0M391.5 351.5h0M142 142h0M110 393h0M418.5 169.5h0M191.0 190.5h0M271 126h0M128 320h0M195.5 211.0h0M129.5 389.5h0M143.5 259.0h0M148.0 223.5h0M337.0 313.5h0M156 424h0M326.5 465.5h0M367.0 293.5h0M383.0 253.5h0M163 392h0M412 211h0M229.0 139.5h0M175.5 137.0h0M285.5 258.5h0M397.0 137.5h0M270.5 337.5h0M288.0 262.5h0M367 257h0M257.5 358.5h0M340.5 288.0h0M400.5 287.5h0M372.0 315.5h0M368.0 350.5h0M321.5 171.0h0M249.0 324.5h0M332.0 385.5h0M407.0 268.5h0M350.5 302.0h0M86.5 307.0h0M309 189h0M278.5 323.0h0M265.5 445.5h0M202.5 352.0h0M317 345h0M192.5 432.5h0M304.5 253.5h0M331 219h0M197 331h0M321.5 210.0h0M328.0 324.5h0M374.5 196.5h0M256 314h0M319.0 154.5h0M274.5 161.0h0M305 385h0M295.5 381.0h0M241.5 316.5h0M157.5 405.0h0M326.5 175.5h0M244.0 241.5h0M166 373h0M244.5 248.5h0M391.0 343.5h0M309.5 379.0h0M254 398h0M197.0 110.5h0M169.5 351.0h0M221.0 199.5h0M293 413h0M273 119h0M399.5 116.5h0M254.5 122.0h0M196.5 166.5h0M211.0 293.5h0M321 313h0M397.5 194.0h0M305.5 460.5h0M278.5 358.5h0M326.5 145.5h0M336.5 451.5h0M266 260h0M117.5 340.0h0M210.5 371.0h0M246.5 173.5h0M217 351h0M240 183h0M155.5 262.5h0M283.5 442.0h0M399.5 287.0h0M109 392h0M285.5 295.5h0M340.0 401.5h0M122.5 367.5h0M222.0 165.5h0M163.5 193.5h0M238 135h0M280.5 286.5h0M266 172h0M311.5 216.0h0M325.5 411.5h0M246.0 309.5h0M268 171h0M157.5 312.0h0M257.5 122.0h0M247.0 222.5h0M169.0 399.5h0M370 318h0M174.0 235.5h0M342 383h0M106.5 325.0h0M159.5 264.0h0M310.5 396.5h0M292.0 105.5h0M349.5 227.0h0M168.5 155.0h0M403.5 325.5h0M381 157h0M327.5 286.0h0M273 229h0M254.5 331.0h0M218.5 109.5h0M333.5 144.5h0M338.0 180.5h0M327 219h0M171.0 355.5h0M345.0 130.5h0M357.5 402.5h0M149 407h0M179.5 356.0h0M307.5 362.0h0M175.5 431.0h0M128 226h0M180 402h0M324.5 112.5h0M306 222h0M400.5 247.0h0M339 414h0M282.5 344.5h0M207.0 263.5h0M259.5 332.0h0M146.5 331.5h0M259.5 422.5h0M189 318h0M379.5 343.0h0M172.0 155.5h0M195.5 366.0h0M325.5 134.0h0M204.5 308.0h0M261.0 368.5h0M254 306h0M309.5 440.5h0M252.5 297.0h0M262.5 116.5h0M310.5 395.5h0M153 421h0M270.5 319.0h0M403.5 313.0h0M106.5 384.0h0M314.0 363.5h0M146 162h0M319.5 467.0h0M180.5 132.0h0M124 178h0M168.5 203.5h0M165.0 357.5h0M128 404h0M235.5 316.5h0M158.5 233.0h0M300.5 125.0h0M288.0 378.5h0M185.5 379.5h0M214.5 212.0h0M99.5 196.0h0M314.5 103.5h0M296.0 154.5h0M384.5 255.5h0M233.5 216.0h0M254 118h0M316.5 171.5h0M201 319h0M376.5 219.0h0M297.5 377.5h0M152 306h0M413.5 228.0h0M303.5 278.0h0M303.5 336.5h0M191.5 209.5h0M266.5 104.5h0M359.5 179.0h0M355 243h0M382.5 128.0h0M181.5 220.0h0M166.0 200.5h0M205.5 297.0h0M331 323h0M211.5 242.0h0M148.0 316.5h0M157.0 332.5h0M148.5 174.0h0M210 224h0M361.5 331.5h0M295.5 416.0h0M269.5 189.0h0M307.5 370.0h0M209.0 131.5h0M240.0 256.5h0M101 182h0M178 316h0M237 201h0M298.5 291.5h0M370 135h0M201.5 131.5h0M241.5 253.5h0M397 268h0M299.5 383.0h0M144.0 420.5h0M229.5 230.0h0M306.0 181.5h0M417.5 241.0h0M341 387h0M289.0 380.5h0M383.0 129.5h0M176.5 365.0h0M301 406h0M140 231h0M188 126h0M257.5 306.0h0M208.5 200.5h0M313 181h0M198.5 140.0h0M320.5 109.5h0M163.0 301.5h0M192 180h0M314.5 397.5h0M210.0 441.5h0M379 219h0M101.5 406.0h0M375.5 226.5h0M116.0 207.5h0M223.5 363.5h0M358.0 224.5h0M295.0 263.5h0M193.5 434.5h0M350.0 121.5h0M111.0 417.5h0M402 298h0M342.5 137.0h0M149.5 347.5h0M339.0 228.5h0M124.5 371.5h0M213.0 228.5h0M411.5 140.0h0M265.0 231.5h0M342.5 146.5h0M128 215h0M131.0 192.5h0M369.5 340.0h0M122 386h0M308 173h0M155 310h0M372 290h0M172.0 289.5h0M131.5 166.0h0M251.5 325.5h0M169.5 152.0h0M273 158h0M327.5 201.5h0M140.0 362.5h0M182.0 165.5h0M327 469h0M252.0 387.5h0M371 112h0M308.0 415.5h0M396.5 239.0h0M274 402h0M118.5 355.5h0M229.0 261.5h0M163.5 386.5h0M133 175h0M159 345h0M159.5 229.5h0M397.5 300.0h0M249.0 111.5h0M369.5 291.5h0M97.5 246.5h0M365.5 259.0h0M249 187h0M162 290h0M206.0 298.5h0M138.0 379.5h0M355 131h0M385.5 211.5h0" stroke="#0820a0" stroke-width="2.5" stroke-opacity="0.8" stroke-linecap="round" fill="none"/><path d="M352.0 144.5h0M183.5 275.0h0M235.0 277.5h0M350 227h0M344 128h0M406.5 304.5h0M272 183h0M132 369h0M245 211h0M317 461h0M128.5 186.5h0M284 415h0M264.0 149.5h0M201.0 320.5h0M307.5 359.5h0M399.5 140.0h0M226 188h0M163.5 416.0h0M402.5 305.0h0M209.0 337.5h0M240.0 121.5h0M386.5 146.0h0M335.0 129.5h0M349 260h0M226.0 201.5h0M159 356h0M233.5 109.0h0M193.5 164.5h0M300 195h0M114.0 382.5h0M109.5 320.0h0M392 335h0M275 325h0M121 350h0M313.5 214.0h0M330.5 367.5h0M348.5 215.0h0M158.5 199.0h0M243.0 204.5h0M253.5 277.5h0M172.5 330.5h0M241.5 307.5h0M146.0 350.5h0M218 188h0M199.5 358.0h0M211.0 130.5h0M261.0 183.5h0M267.0 307.5h0M351.0 396.5h0M316.5 191.5h0M354.5 327.0h0M131.5 341.5h0M203 265h0M190 374h0M215.0 156.5h0M240 148h0M94 340h0M389.0 206.5h0M411.5 270.0h0M277.5 250.0h0M305.0 352.5h0M408.5 248.0h0M223 142h0M157.0 397.5h0M315.5 239.5h0M341.5 231.5h0M208.5 87.5h0M257 338h0M90 333h0M345.5 304.5h0M348 136h0M309.0 357.5h0M165 313h0M288 253h0M325.5 222.5h0M181.5 299.0h0M311.0 165.5h0M320 125h0M255.0 147.5h0M170.0 415.5h0M327.5 443.0h0M145.5 165.5h0M343.5 387.5h0M328 106h0M240.0 123.5h0M137.5 380.5h0M202.5 250.5h0M242.5 265.0h0M364 309h0M391.5 133.5h0M220.5 151.5h0M300 296h0M171.5 314.5h0M255.5 267.0h0M336.0 217.5h0M79.5 207.0h0M296.0 374.5h0M107 167h0M262.5 458.0h0M294.0 388.5h0M403 235h0M100 294h0M227.5 288.5h0M330 227h0M237.5 115.0h0M331 296h0M273.0 307.5h0M217.5 149.0h0M106.0 348.5h0M257.0 398.5h0M298.0 349.5h0M127.5 390.5h0M157.5 363.0h0M416 196h0M386 357h0M305.0 426.5h0M379.5 183.5h0M317 408h0M256 193h0M341.5 263.0h0M142 373h0M290.0 457.5h0M304.5 317.5h0M270.0 396.5h0M222 133h0M277 268h0M331.5 417.5h0M356.0 136.5h0M157.5 161.0h0M376 139h0M178.5 343.0h0M296.0 203.5h0M323.5 334.0h0M154.0 214.5h0M311 179h0M283 322h0M184.5 312.0h0M361.5 441.0h0M151.0 266.5h0M211.5 447.5h0M238 107h0M337.5 145.0h0M379 273h0M254 130h0M124.5 412.5h0M162.0 393.5h0M160.5 259.5h0M389.5 351.5h0M239.5 142.0h0M136.0 196.5h0M187.0 158.5h0M101.0 212.5h0M183.0 375.5h0M304.5 172.0h0M334.5 359.5h0M221.5 419.0h0M174.0 169.5h0M134.0 378.5h0M349.5 156.5h0M195.5 90.0h0M246.5 371.5h0M131.5 237.5h0M372.5 322.0h0M327.5 246.5h0M386 301h0M224 338h0M154 384h0M251.5 345.5h0M317.5 104.5h0M362.0 152.5h0M221 312h0M264.5 234.0h0M368.0 138.5h0M276.0 324.5h0M285 148h0M385.5 200.0h0M178.5 362.0h0M318.5 201.0h0M375 131h0M307 364h0M204.0 215.5h0M371.0 423.5h0M349.5 352.0h0M176.5 319.0h0M331.0 139.5h0M217.0 287.5h0M178 375h0M161 168h0M308 284h0M340.0 410.5h0M159.5 370.5h0M296 395h0M97.5 311.5h0M293.5 196.5h0M283.0 137.5h0M193.5 264.5h0M365.5 312.5h0M174.0 271.5h0M248.5 266.5h0M280.5 287.5h0M178.0 167.5h0M162.5 173.0h0M394.0 126.5h0M287 370h0M421.5 188.5h0M189 151h0M127.5 165.5h0M203.5 445.0h0M217.5 245.0h0M87.0 186.5h0M186 195h0M363.5 353.0h0M158.5 290.0h0M266.5 390.0h0M352.5 193.0h0M168 430h0M411.0 118.5h0M208.0 182.5h0M375.5 176.5h0M217.5 204.0h0M400.0 234.5h0M254.5 170.5h0M338.0 167.5h0M238 147h0M276.0 202.5h0M161.0 273.5h0M318.5 440.5h0M232 414h0M298.5 401.0h0M193.0 343.5h0M222.0 401.5h0M364.0 290.5h0M213.0 352.5h0M125.0 363.5h0M264.5 349.0h0M411.5 208.0h0M338 377h0M279 277h0M273.5 127.0h0M410 131h0M251.5 223.5h0M258 437h0M227.5 227.5h0M214 247h0M293.0 219.5h0M347.5 482.5h0M403.5 311.0h0M264.5 201.0h0M176.5 189.5h0M370.5 356.5h0M310.5 347.0h0M262.5 372.0h0M205 327h0M345.5 182.5h0M225.5 159.5h0M369.5 200.5h0M289.5 222.5h0M294.0 451.5h0M361.0 279.5h0M248.5 374.5h0M305.5 229.5h0M320 283h0M142 169h0M380 342h0M254.5 333.5h0M175.5 212.5h0M338 157h0M294 441h0M153.0 326.5h0M334.5 373.0h0M182.5 259.0h0M111.5 378.0h0M177.5 146.5h0M238.5 143.5h0M357.5 408.5h0M334.0 118.5h0M349.0 291.5h0M259 165h0M122.5 345.5h0M273 134h0M381.5 298.5h0M173 192h0M293 367h0M349.5 345.5h0M201.0 94.5h0M290.0 425.5h0M355.5 154.5h0M275.0 429.5h0M381.5 187.0h0M299.0 152.5h0M356.5 139.5h0M157 377h0M321.0 378.5h0M376.5 347.5h0M279.5 183.0h0M316.0 205.5h0M297.5 381.0h0M317.0 315.5h0M411 285h0M285.5 176.5h0M154.5 392.0h0M394.0 155.5h0M360.5 254.5h0M320 333h0M127.5 160.5h0M248.0 265.5h0M327.0 393.5h0M223.0 121.5h0M390.0 218.5h0M359.5 276.0h0M188.5 334.5h0M388 116h0M238 276h0M172.0 286.5h0M274.0 138.5h0M314.5 253.0h0M218.5 158.5h0M325.0 453.5h0M189 385h0M332.0 426.5h0M345.5 451.5h0M297 353h0M349.5 199.0h0M284.5 227.0h0M335.5 471.5h0M389.5 320.0h0M408 212h0M101.5 398.0h0M233.0 264.5h0M387.5 294.5h0M332.5 300.0h0M149.5 231.0h0M249 422h0M233.0 172.5h0M333 205h0M199.5 302.5h0M126.5 318.5h0M383.0 268.5h0M116.5 368.5h0M360.5 263.0h0M323.0 229.5h0M184.5 209.0h0M362.5 162.0h0M366.5 148.0h0M421.5 196.5h0M285.5 261.5h0M267.0 281.5h0M227.0 372.5h0M128.5 325.5h0M285.5 110.5h0M163.5 275.0h0M256.0 147.5h0M251.0 457.5h0M243.5 109.0h0M170.5 200.0h0M407 176h0M368.5 144.5h0M186.5 316.0h0M307.5 140.5h0M234.5 253.0h0M128.5 376.5h0M105.5 232.5h0" stroke="#1a88a8" stroke-width="1.0" stroke-opacity="0.8" stroke-linecap="round" fill="none"/><path d="M298.5 380.5h0M105.5 383.0h0M339.5 464.5h0M360 394h0M416.5 273.5h0M339.0 149.5h0M314.5 250.5h0M231.5 198.5h0M293 272h0M239 226h0M225.5 313.0h0M151.5 412.0h0M381 169h0M222.5 207.0h0M401 345h0M228 259h0M364 211h0M198.5 315.0h0M401.5 148.0h0M174 282h0M163.5 191.5h0M286.0 127.5h0M161.0 270.5h0M115.5 162.0h0M431 132h0M363 391h0M221 347h0M212.0 208.5h0M150.5 163.0h0M296.0 328.5h0M298 292h0M298.0 318.5h0M291.5 282.5h0M320.0 187.5h0M206 126h0M333.5 258.0h0M365.5 135.0h0M326.5 187.5h0M391.0 251.5h0M358.5 285.5h0M249.5 264.5h0M290 146h0M389.5 219.5h0M245.0 382.5h0M376.5 272.0h0M164.5 181.5h0M249.5 133.5h0M253.0 103.5h0M144.5 422.5h0M281.0 450.5h0M404.0 184.5h0M242.5 241.0h0M372.5 260.5h0M379.0 156.5h0M186 221h0M117 222h0M215.0 234.5h0M161.0 327.5h0M375.5 329.5h0M255 121h0M153.5 217.5h0M132.0 224.5h0M107.5 229.0h0M221 127h0M190 217h0M405.5 332.0h0M89.5 316.5h0M306.0 398.5h0M327 400h0M223.5 442.5h0M344.5 181.0h0M257.5 355.0h0M187.0 369.5h0M192.0 88.5h0M186.5 145.5h0M289 246h0M303.5 230.0h0M363.5 156.0h0M127.5 348.0h0M160 274h0M380.0 120.5h0M256 204h0M83.5 251.0h0M201.5 381.5h0M298 175h0M427 180h0M157.5 321.0h0M306 373h0M337 261h0M207.5 185.5h0M287.5 432.0h0M246.0 196.5h0M130.5 413.0h0M217.0 180.5h0M154 301h0M117 402h0M265 383h0M217.5 99.5h0M251.0 342.5h0M175 328h0M356.5 225.5h0M259.5 337.5h0M290 392h0M304.5 472.0h0M355 327h0M235.5 296.5h0M247.5 299.0h0M327.5 469.0h0M186.5 123.5h0M405.0 223.5h0M145.5 184.5h0M196 90h0M280 258h0M199.5 267.0h0M195.5 141.5h0M220.0 266.5h0M140 348h0M386.0 333.5h0M361 359h0M222.0 96.5h0M293.0 220.5h0M227.5 161.0h0M270.0 369.5h0M399.0 278.5h0M427 159h0M219.5 309.0h0M352.5 277.0h0M254.5 452.5h0M97.0 175.5h0M349 185h0M340 419h0M186 371h0M199.0 276.5h0M101.5 193.5h0M337.5 205.5h0M118.0 277.5h0M283 113h0M194.5 192.0h0M278.5 394.0h0M379.0 147.5h0M168.5 166.5h0M363.5 169.5h0M279 353h0M123.5 226.5h0M325.5 414.0h0M349.0 357.5h0M273 262h0M205.5 136.5h0M334.0 264.5h0M194 244h0M190 354h0M187 101h0M150.5 219.5h0M170.0 337.5h0M220.5 92.0h0M124.5 156.5h0M198.5 162.0h0M303.5 152.5h0M258.5 322.5h0M302 271h0M263.0 175.5h0M269.5 246.0h0M350.5 394.0h0M378.0 191.5h0M265 265h0M250 318h0M162 244h0M289.5 461.0h0M271.5 231.0h0M340 461h0M209.5 199.5h0M387 292h0M277 348h0M360.5 365.5h0M140.5 367.0h0M246 181h0M195.0 106.5h0M333.5 300.0h0M308.5 377.0h0M412.0 259.5h0M366.5 134.0h0M400 261h0M293.5 202.5h0M291.5 375.0h0M194.5 332.0h0M320.5 135.0h0M259.5 332.5h0M359.5 218.0h0M274.0 435.5h0M129.5 245.5h0M364.0 151.5h0M248.0 112.5h0M310.0 300.5h0M221.5 385.5h0M221.5 191.0h0M415 151h0M226.0 295.5h0M344 113h0M292 284h0M137.5 384.0h0M378 139h0M371 164h0M189.0 311.5h0M319.5 172.0h0M332 370h0M368 428h0M372.5 391.5h0M310 162h0M298.0 462.5h0M345.0 470.5h0M189.5 220.0h0M320 230h0M334.0 325.5h0M219.5 436.5h0M376.5 308.0h0M230 231h0M159.5 428.5h0M201.0 249.5h0M326.5 244.0h0M179 311h0M323.5 221.0h0M149.5 395.5h0M169.5 362.0h0M256.5 161.5h0M307.5 348.0h0M416.5 278.5h0M383.5 317.5h0M200.0 280.5h0M288.5 287.0h0M349 455h0M187.0 115.5h0M191.0 376.5h0M221.5 286.0h0M193.5 256.5h0M352.5 400.0h0M307.5 206.0h0M177.5 311.5h0M322.5 245.0h0M265.0 291.5h0M326.5 296.0h0M304.0 337.5h0M195.5 301.5h0M194.0 262.5h0M243.5 285.0h0M193 423h0M179.5 155.0h0M368.0 345.5h0M313 179h0M212.5 244.5h0M209 369h0M280.5 370.5h0M201.5 384.0h0M416.5 214.5h0M288.5 170.0h0M82.5 242.0h0M418.5 169.5h0M141.5 190.5h0M129.5 389.5h0M143.5 259.0h0M337.0 313.5h0M383.0 253.5h0M163 392h0M397.0 137.5h0M227.5 444.5h0M270.5 337.5h0M340.5 288.0h0M331 219h0M328.0 324.5h0M274.5 161.0h0M241.5 316.5h0M169.5 351.0h0M293 413h0M273 119h0M397.5 194.0h0M336.5 451.5h0M210.5 371.0h0M155.5 262.5h0M340.0 401.5h0M169.0 399.5h0M177 372h0M307.5 362.0h0M128 226h0M400.5 247.0h0M339 414h0M204.5 308.0h0M403.5 313.0h0M319.5 467.0h0M316.5 171.5h0M292.5 144.0h0M373.5 398.0h0M355 243h0M382.5 128.0h0M181.5 220.0h0M148.0 316.5h0M237 201h0M201.5 131.5h0M241.5 253.5h0M329.0 165.5h0M341 387h0M313 181h0M198.5 140.0h0M192 180h0M210.0 441.5h0M116.0 207.5h0M223.5 363.5h0M193.5 434.5h0M149.5 347.5h0M411.5 140.0h0M395.5 151.5h0M371 112h0M163.5 386.5h0M159 345h0M249 187h0M162 290h0" stroke="#1a88a8" stroke-width="1.5" stroke-opacity="0.8" stroke-linecap="round" fill="none"/><path d="M375.0 264.5h0M300 282h0M308 403h0M118 335h0M245.5 449.0h0M198 175h0M264 114h0M140 196h0M226 227h0M245.5 437.0h0M346.5 178.0h0M383.5 330.5h0M298.5 404.0h0M343.5 114.0h0M310.5 454.5h0M197.5 112.0h0M282.5 182.0h0M180 378h0M236.0 145.5h0M111.0 157.5h0M100.5 380.5h0M188 185h0M199.5 200.5h0M317 225h0M275.0 353.5h0M131.5 159.5h0M326.0 154.5h0M272.0 322.5h0M339.0 188.5h0M293.0 192.5h0M378.5 340.0h0M384 179h0M114.5 165.5h0M328.5 385.0h0M257.5 226.0h0M370.5 417.5h0M224.0 365.5h0M362 157h0M241.0 112.5h0M225.5 155.5h0M277.5 193.5h0M313.5 472.0h0M432.5 147.5h0M264.5 363.5h0M277.5 404.5h0M320.5 408.5h0M255.0 402.5h0M342 435h0M159.5 285.0h0M116.0 209.5h0M306.0 396.5h0M146.5 246.5h0M333.5 167.5h0M182 357h0M93 322h0M167.0 328.5h0M312.0 288.5h0M80.5 268.5h0M273.5 374.5h0M344.5 260.0h0M284.5 431.0h0M255 444h0M244.0 273.5h0M256.5 281.0h0M170.0 179.5h0M211.0 102.5h0M235.5 345.5h0M149.5 225.5h0M198.5 205.5h0M265 270h0M181 103h0M243 133h0M295.5 369.5h0M179.5 270.5h0M287.5 411.5h0M163.5 231.0h0M396 127h0M157 319h0M368 171h0M218.5 326.5h0M283.0 285.5h0M381.5 337.0h0M156 229h0M313.5 190.0h0M111.5 294.0h0M321 380h0M334.5 116.5h0M305.5 272.0h0M378.5 364.5h0M333 298h0M136.0 283.5h0M122 360h0M197.5 380.5h0M394.5 255.5h0M269.5 348.0h0M349 344h0M390.0 263.5h0M117 211h0M234.0 288.5h0M353 432h0M256.5 155.0h0M191.5 396.0h0M213.0 231.5h0M251.5 286.5h0M182.5 363.5h0M377.5 351.5h0M255.5 141.0h0M205 249h0M337.5 134.0h0M236 91h0M256 132h0M234.0 231.5h0M249.5 341.0h0M383 199h0M357.5 200.5h0M421.5 133.0h0M287.5 308.5h0M166.0 315.5h0M290.0 301.5h0M199 152h0M391.5 296.0h0M275.0 373.5h0M219.5 304.5h0M340 381h0M296.0 260.5h0M363.5 344.0h0M178.0 439.5h0M338.0 241.5h0M272 163h0M217.0 327.5h0M276 139h0M243.0 117.5h0M340 212h0M297.5 230.0h0M128.0 226.5h0M271 216h0M370.5 286.5h0M265 132h0M101.0 176.5h0M283.5 221.0h0M110.5 167.5h0M315 465h0M359 128h0M374.5 245.0h0M259.0 264.5h0M339.5 115.5h0M172.5 172.5h0M300.5 154.5h0M256.0 173.5h0M361.5 203.0h0M189 351h0M396.0 260.5h0M306.5 359.0h0M364 342h0M278 141h0M184 328h0M295.5 393.5h0M109.0 405.5h0M305.5 356.0h0M164.0 165.5h0M213 333h0M259 201h0M250 100h0M99.5 246.0h0M364 255h0M269 147h0M177 172h0M311.0 378.5h0M406 186h0M421.5 169.5h0M362.5 299.0h0M170.5 302.0h0M221.5 349.0h0M167.5 409.5h0M121 207h0M188.0 301.5h0M409.0 186.5h0M334.0 232.5h0M349.5 214.5h0M153.5 345.0h0M288.0 196.5h0M358.5 338.5h0M322 185h0M216.5 178.5h0M106 319h0M416.5 266.0h0M366.5 424.5h0M142.5 341.5h0M203 312h0M421 140h0M287.0 365.5h0M273.5 142.5h0M336.5 356.5h0M335.5 224.0h0M221.5 183.0h0M344 388h0M293.0 447.5h0M297 331h0M206.5 320.5h0M212 129h0M322.0 360.5h0M81.5 224.5h0M289.0 128.5h0M197.5 346.5h0M359 295h0M185.0 347.5h0M189.5 256.5h0M349.5 370.5h0M237.0 263.5h0M314.0 289.5h0M302.5 444.0h0M370.5 328.0h0M247.5 188.0h0M350 462h0M161 403h0M87.0 232.5h0M247.5 261.0h0M374.5 312.0h0M420.5 152.5h0M389 190h0M166 185h0M245 331h0M356.5 361.5h0M381.5 294.5h0M408.5 174.5h0M167 426h0M260.0 359.5h0M389 357h0M211.0 191.5h0M357 271h0M328 211h0M202.0 280.5h0M263.5 123.5h0M403.5 198.0h0M344.5 175.0h0M261.0 277.5h0M235.5 225.5h0M214 210h0M384.5 262.5h0M168.0 162.5h0M127 376h0M177.0 309.5h0M164.0 296.5h0M372.0 197.5h0M350.5 371.0h0M198 250h0M324 343h0M137.5 398.0h0M369.0 396.5h0M328.5 319.0h0M158.5 160.5h0M150.0 291.5h0M374.5 114.5h0M366.5 230.0h0M390.0 242.5h0M398.5 287.5h0M283.0 237.5h0M271 321h0M239.5 228.5h0M111 373h0M330.5 207.5h0M365.5 109.5h0M232 254h0M276 381h0M143.0 225.5h0M187.5 369.0h0M356 214h0M413.5 225.5h0M406.0 115.5h0M208.5 245.0h0M305 266h0M185 316h0M289 126h0M272.0 350.5h0M201.0 131.5h0M266.0 427.5h0M351.0 205.5h0M262 251h0M390 223h0M148 144h0M136.5 308.0h0M385 315h0M389.5 164.0h0M276.0 309.5h0M160 254h0M199.0 238.5h0M268.0 345.5h0M251.0 342.5h0M191 168h0M395.0 247.5h0M367 257h0M266.0 141.5h0M394.5 182.0h0M368.0 350.5h0M156.5 393.0h0M336.5 462.0h0M151.5 160.0h0M350.5 255.5h0M213.5 208.5h0M199.5 252.0h0M240.5 101.0h0M183.5 434.0h0M269.0 347.5h0M207.5 292.5h0M271.0 237.5h0M266.5 177.5h0M229.5 253.5h0M285.0 182.5h0M234 278h0M208.5 222.5h0M98.5 349.5h0M207 396h0M296.5 202.0h0M429.5 128.5h0M246.5 101.0h0M276.5 360.0h0M284.5 207.5h0M401.5 273.5h0M380.5 261.0h0M289 165h0M223.5 305.0h0M256 238h0M267 130h0M395.5 304.0h0M347.0 421.5h0M322.5 272.0h0M369.5 160.5h0M159.5 339.5h0M131 186h0M99 316h0M144.5 147.5h0M105 267h0M354.0 388.5h0M331.5 378.0h0M173.5 142.0h0M262.5 208.5h0M324 341h0M151.5 349.0h0M331 235h0M190.0 399.5h0M283 118h0M182.5 397.5h0M326.5 139.5h0M375.5 299.5h0M404.5 288.5h0M268.5 331.0h0M310 114h0M366.5 116.0h0M347 318h0M398.5 236.0h0M397 159h0M337.5 375.5h0" stroke="#5070a8" stroke-width="1.0" stroke-opacity="0.8" stroke-linecap="round" fill="none"/><path d="M341.5 415.5h0M115 175h0M308 406h0M272.5 369.5h0M247 418h0M281 200h0M415 117h0M236.5 110.0h0M417.0 268.5h0M410 194h0M225.0 133.5h0M169 150h0M260.0 263.5h0M371 212h0M241.5 189.5h0M148 301h0M206.5 266.0h0M203.5 352.0h0M279 118h0M364 440h0M331.0 259.5h0M361.0 291.5h0M282.5 310.0h0M214.5 323.5h0M120.0 177.5h0M382.5 298.0h0M96.0 195.5h0M418 257h0M390.5 258.5h0M102 390h0M76 238h0M134.0 226.5h0M372 279h0M408.5 195.0h0M176.5 185.5h0M354.5 368.5h0M343.0 419.5h0M318.5 216.0h0M216.5 122.0h0M363.5 387.5h0M187.5 344.0h0M226.5 145.0h0M320.5 391.5h0M230.5 249.0h0M307.0 339.5h0M277.5 312.5h0M275.5 114.0h0M302 336h0M189.0 191.5h0M218.5 295.5h0M143.0 387.5h0M348.5 359.0h0M189.5 382.0h0M331.0 459.5h0M358.5 227.5h0M290 277h0M379.5 182.0h0M388.0 260.5h0M90.0 330.5h0M236.5 150.5h0M286.0 313.5h0M171.5 428.5h0M371 245h0M85 252h0M229.0 246.5h0M340 204h0M133.5 165.0h0M345 328h0M399.0 179.5h0M254 150h0M337.0 347.5h0M176 281h0M142.0 273.5h0M346.0 135.5h0M167.0 436.5h0M196.5 222.0h0M257 165h0M411.5 222.0h0M181.5 219.5h0M184 227h0M208.5 187.5h0M385 158h0M280.5 196.5h0M373.5 253.5h0M150.5 376.5h0M126.0 344.5h0M243 313h0M288.5 423.5h0M381.5 372.5h0M216.5 166.0h0M342 163h0M329.5 370.0h0M384.0 386.5h0M87.5 284.0h0M243.5 93.5h0M94 238h0M197.5 97.0h0M284.5 262.5h0M347.0 207.5h0M324.0 241.5h0M390.5 150.5h0M369.5 383.0h0M139.5 162.0h0M406.0 289.5h0M109 174h0M313 118h0M133 233h0M281.5 389.0h0M216.5 360.5h0M408 336h0M323.5 448.0h0M365.5 374.0h0M144 238h0M184.5 175.0h0M395.5 308.5h0M235.5 283.0h0M366.0 288.5h0M207 443h0M319.5 358.0h0M195.5 364.0h0M280.5 414.5h0M193.5 137.5h0M329 395h0M272.5 238.0h0M308.5 420.0h0M101 381h0M299.0 421.5h0M118.5 180.0h0M407 326h0M172.0 181.5h0M344.5 254.5h0M105.5 342.0h0M423.5 136.5h0M179.0 391.5h0M279 145h0M429.5 124.5h0M229.5 90.5h0M139.0 326.5h0M131.5 392.0h0M340 149h0M195.5 211.0h0M156 424h0M175.5 137.0h0M285.5 258.5h0M249.0 324.5h0M278.5 323.0h0M321.5 210.0h0M256 314h0M326.5 175.5h0M244.0 241.5h0M399.5 116.5h0M254.5 122.0h0M196.5 166.5h0M305.5 460.5h0M222.0 165.5h0M238 135h0M218.5 109.5h0M149 407h0M175.5 431.0h0M259.5 332.0h0M146.5 331.5h0M379.5 343.0h0M195.5 366.0h0M309.5 440.5h0M310.5 395.5h0M146 162h0M124 178h0M296.0 154.5h0M384.5 255.5h0M254 118h0M157.0 332.5h0M361.5 331.5h0M295.5 416.0h0M370 135h0M397 268h0M176.5 365.0h0M379 219h0M402 298h0M342.5 146.5h0M308 173h0M273 158h0M97.5 246.5h0" stroke="#5070a8" stroke-width="1.5" stroke-opacity="0.8" stroke-linecap="round" fill="none"/><path d="M143.5 167.5h0M409.5 217.5h0M121 359h0M150 198h0M288.5 185.0h0M221.0 209.5h0M299.5 374.0h0M109.5 208.5h0M102.0 370.5h0M332.5 454.5h0M198.0 378.5h0M408.5 233.5h0M178.0 147.5h0M294.5 169.5h0M349.5 289.0h0M301.0 339.5h0M178 153h0M266.5 114.0h0M208.0 336.5h0M351.0 432.5h0M96.0 339.5h0M283 284h0M338.5 376.0h0M157.5 229.0h0M266.5 392.0h0M352.0 269.5h0M186.5 369.0h0M183 391h0M239.5 448.0h0M133.0 260.5h0M359.0 134.5h0M165 247h0M164.5 214.0h0M283.5 322.5h0M361.5 318.5h0M367.5 296.0h0M314 340h0M156.0 229.5h0M413.5 172.0h0M330.0 240.5h0M194.5 440.0h0M147.0 211.5h0M165 163h0M245 329h0M257.0 151.5h0M219.5 139.5h0M274.5 97.0h0M169.5 400.0h0M279.0 162.5h0M252.0 161.5h0M366 315h0M256.5 182.0h0M389.0 119.5h0M296.5 299.0h0M258 347h0M418.5 145.0h0M306.0 143.5h0M173 148h0M138 197h0M213.0 352.5h0M327.5 252.5h0M117.5 378.5h0M165 283h0M194.0 177.5h0M325.0 391.5h0M397.5 281.5h0M352.0 146.5h0M243 444h0M221.0 336.5h0M244.5 453.5h0M390 206h0M182.5 142.0h0M84.5 301.5h0M213.0 379.5h0M377.5 162.5h0M230 257h0M191.5 309.5h0M162.5 392.0h0M205.5 126.0h0M194.5 320.5h0M180.5 405.0h0M335.5 163.5h0M346.5 260.0h0M419.5 252.5h0M340.5 141.0h0M358.5 302.5h0M201.5 364.5h0M283.5 353.5h0M247.5 220.5h0M367.5 158.5h0M405 132h0M304.5 127.0h0M233.0 321.5h0M386 157h0M310 182h0M347.0 383.5h0M246.5 215.5h0M82.5 183.5h0M367 351h0M283.0 393.5h0M330.5 384.5h0M226 249h0M286.5 452.0h0M332.0 200.5h0M296.5 445.5h0M309.5 224.5h0M129.5 287.5h0M268 119h0M269.0 201.5h0M197 364h0M373.0 317.5h0M394 171h0M311 411h0M196 286h0M176.5 287.0h0M352 188h0M233.0 341.5h0M331 258h0M159.5 303.0h0M184.0 371.5h0M413.5 271.0h0M206.0 373.5h0M292.5 304.5h0M353 213h0M389.0 140.5h0M258.5 130.0h0M368.5 331.5h0M146.0 164.5h0M263.5 356.0h0M82.5 269.5h0M176.5 379.0h0M232 408h0M110 217h0M222.5 110.5h0M386.0 145.5h0M157.0 390.5h0M99.5 227.5h0M180.5 421.0h0M421.0 239.5h0M134.5 176.5h0M139.0 301.5h0M375.5 318.0h0M310.5 404.5h0M293 445h0M166 333h0M243.5 173.0h0M167.5 183.0h0M367.5 414.0h0M172.5 347.5h0M220 208h0M353 391h0M315.5 163.5h0M197.0 138.5h0M278.5 366.0h0M390 302h0M304.5 411.0h0M342.5 327.5h0M218.5 344.0h0M414 299h0M324.0 156.5h0M228.5 239.5h0M407.5 310.0h0M343.0 237.5h0M209.5 368.0h0M211.5 136.5h0M228.5 248.0h0M337.5 305.5h0M321 222h0M189.0 257.5h0M145.0 241.5h0M164.0 368.5h0M137.5 363.5h0M203 313h0M145 236h0M376.0 381.5h0M315.0 150.5h0M321 234h0M335 420h0M347.5 465.5h0M311.0 357.5h0M418.5 161.5h0M203.0 227.5h0M116.5 232.5h0M364 128h0M126 201h0M414 126h0M323.0 347.5h0M340 143h0M363 336h0M296.0 399.5h0M164.0 399.5h0M266.5 296.0h0M316.5 306.5h0M143.5 397.5h0M370.0 401.5h0M212.0 137.5h0M221.0 323.5h0M308.5 278.5h0M234.5 438.0h0M334.0 408.5h0M223.0 151.5h0M313.5 230.0h0M143.5 358.5h0M378.5 389.5h0M230.5 130.0h0M219.0 166.5h0M317.0 158.5h0M244 378h0M271 177h0M183.5 158.5h0M153 272h0M280.5 352.0h0M385.0 118.5h0M124.5 399.5h0M282.5 197.0h0M144.5 180.0h0M311 279h0M174.5 164.5h0M150.0 407.5h0M275.5 275.5h0M323.5 440.0h0M300.0 274.5h0M236.0 395.5h0M390 229h0M407.5 266.5h0M194.5 255.0h0M246 255h0M155.0 392.5h0M141 179h0M112.0 396.5h0M139.5 281.0h0M272 132h0M249.5 305.0h0M347 319h0M313 352h0M366.5 236.5h0M266 264h0M300.5 145.0h0M375 160h0M133.5 408.5h0M192.5 125.5h0M326.0 122.5h0M155.0 358.5h0M72.5 192.0h0M179 424h0M250.5 228.5h0M160.0 209.5h0M292.5 274.5h0M374.0 150.5h0M237.0 345.5h0M283.0 212.5h0M370.5 400.0h0M307.0 325.5h0M241 415h0M207 282h0M193.5 94.5h0M98 381h0M348.5 173.5h0M290.5 106.0h0M182.5 238.5h0M141.5 173.5h0M343.0 107.5h0M207.0 141.5h0M169 308h0M340.0 218.5h0M254 134h0M292.5 105.5h0M232 326h0M234.5 186.0h0M249 349h0M402.5 314.5h0M314.0 370.5h0M278.0 228.5h0M413.5 199.0h0M161.5 298.5h0M110.5 377.0h0M228 127h0M287.5 221.0h0M332.5 168.0h0M304.0 376.5h0M206 151h0M385.5 149.5h0M210.5 89.5h0M361.0 174.5h0M142 142h0M326 353h0M224.5 370.5h0M96.0 248.5h0M309 189h0M341 306h0M358.5 307.0h0M351 314h0M197 331h0M338.5 324.5h0M305 385h0M340.5 432.5h0M345.5 337.0h0M190.5 436.5h0M254 398h0M221.0 199.5h0M150.0 292.5h0M325.5 460.5h0M340.5 179.5h0M217 351h0M161.0 185.5h0M156.0 296.5h0M386.0 217.5h0M367.5 260.0h0M310.5 396.5h0M220.0 186.5h0M338.0 180.5h0M345.0 130.5h0M357.5 402.5h0M158.5 248.5h0M306 222h0M384.5 208.5h0M172.0 155.5h0M174.5 303.5h0M303.0 242.5h0M171.0 246.5h0M390.0 201.5h0M110.5 344.5h0M193.5 330.5h0M197 233h0M214.5 212.0h0M99.5 196.0h0M243.0 280.5h0M303.5 278.0h0M359.5 179.0h0M166.0 200.5h0M417.5 188.5h0M196.5 337.5h0M359 352h0M382.0 182.5h0M242.5 199.5h0M209.0 131.5h0M228.5 214.5h0M296 164h0M214 340h0M260 148h0M231.5 152.5h0M299.5 383.0h0M340.5 136.5h0M426 132h0M207 359h0M160 228h0M150.5 393.5h0M315.5 180.0h0M375.5 226.5h0M158 272h0M350.0 121.5h0M124.5 371.5h0M327.5 201.5h0M379.5 153.0h0M402.0 125.5h0M242.5 351.5h0M240.5 200.5h0M245.0 216.5h0M140.0 415.5h0" stroke="#b86a50" stroke-width="1.0" stroke-opacity="1.0" stroke-linecap="round" fill="none"/><path d="M138.5 386.0h0M391 359h0M321.5 280.5h0M116 176h0M332.5 459.5h0M89.0 252.5h0M238.5 165.0h0M225 239h0M313.5 254.0h0M340.5 265.5h0M377.5 344.0h0M314.5 451.0h0M158.5 429.5h0M383.5 340.0h0M168 235h0M375.0 188.5h0M404.5 172.5h0M198.0 136.5h0M276.5 318.5h0M221 372h0M94.5 171.0h0M196 132h0M240.0 451.5h0M136.5 169.5h0M89.5 261.0h0M348.0 396.5h0M291.0 188.5h0M337.5 390.0h0M133.5 213.0h0M186 391h0M366.0 194.5h0M330.5 372.5h0M266.5 308.0h0M297.0 411.5h0M428.5 159.0h0M365 426h0M380.5 307.5h0M269.0 234.5h0M287.5 396.5h0M337 143h0M191.0 190.5h0M374.5 196.5h0M197.0 110.5h0M246.0 309.5h0M376.5 219.0h0M148.5 174.0h0M133 175h0" stroke="#b86a50" stroke-width="1.5" stroke-opacity="1.0" stroke-linecap="round" fill="none"/></g>
<g fill="#0614a8" opacity="0.45" filter="url(#b3)"><path d="M146.6 219.6 Q148.4 213.4 153.9 211.5 Q159.5 209.5 166.3 213.0 Q173.0 216.6 182.8 225.8 Q192.5 235.0 194.4 242.1 Q196.2 249.1 192.0 254.5 Q187.8 259.8 180.3 259.1 Q172.7 258.5 163.7 252.1 Q154.7 245.8 149.8 235.8 Q144.9 225.8 146.6 219.6Z"/><path d="M183.7 266.6 Q193.2 259.1 201.8 264.7 Q210.4 270.2 217.3 281.4 Q224.3 292.6 221.1 298.7 Q217.8 304.8 199.4 305.0 Q181.0 305.1 176.7 298.3 Q172.4 291.6 173.3 282.8 Q174.2 274.0 183.7 266.6Z"/><path d="M222.9 146.5 Q222.5 139.8 230.2 128.8 Q237.9 117.8 248.5 117.1 Q259.2 116.3 264.0 122.7 Q268.8 129.1 268.5 138.6 Q268.2 148.0 260.0 155.1 Q251.8 162.3 242.1 161.3 Q232.4 160.4 227.9 156.8 Q223.3 153.2 222.9 146.5Z"/><path d="M318.1 135.6 Q316.7 131.4 324.6 128.9 Q332.6 126.4 346.5 125.7 Q360.4 125.0 371.3 127.9 Q382.1 130.8 386.3 135.9 Q390.5 141.0 386.2 147.4 Q381.9 153.7 375.8 158.5 Q369.7 163.3 361.8 159.9 Q353.9 156.5 343.7 148.8 Q333.5 141.1 326.5 140.5 Q319.5 139.8 318.1 135.6Z"/><path d="M172.8 171.3 Q173.7 160.3 183.9 157.6 Q194.2 155.0 202.8 158.7 Q211.4 162.4 213.1 169.6 Q214.9 176.8 210.4 183.5 Q206.0 190.1 195.7 191.4 Q185.4 192.7 178.6 187.5 Q171.9 182.3 172.8 171.3Z"/><ellipse cx="226.5" cy="301" rx="13.5" ry="14.5" transform="rotate(0 226.5 301)"/><ellipse cx="235" cy="325" rx="10.5" ry="17.5" transform="rotate(-15 235 325)"/><ellipse cx="273" cy="130" rx="15.0" ry="20.0" transform="rotate(25 273 130)"/><ellipse cx="284" cy="160" rx="30.5" ry="12.0" transform="rotate(36 284 160)"/><ellipse cx="183" cy="201" rx="15.5" ry="16.5" transform="rotate(0 183 201)"/><ellipse cx="381.9" cy="123.7" rx="13.5" ry="13.5" transform="rotate(0 381.9 123.7)"/><ellipse cx="330" cy="163" rx="14.5" ry="11.0" transform="rotate(25 330 163)"/><ellipse cx="348" cy="170" rx="15.5" ry="11.5" transform="rotate(20 348 170)"/><ellipse cx="368" cy="178" rx="15.5" ry="11.0" transform="rotate(15 368 178)"/><ellipse cx="383" cy="184" rx="11.5" ry="10.5" transform="rotate(0 383 184)"/><ellipse cx="341.8" cy="185.4" rx="12.5" ry="12.5" transform="rotate(0 341.8 185.4)"/><ellipse cx="412" cy="193" rx="18.5" ry="17.5" transform="rotate(0 412 193)"/><ellipse cx="388.5" cy="321.7" rx="19.5" ry="13.5" transform="rotate(-25 388.5 321.7)"/><ellipse cx="279.5" cy="320.3" rx="18.5" ry="13.5" transform="rotate(0 279.5 320.3)"/><ellipse cx="306.5" cy="336.5" rx="15.0" ry="14.3" transform="rotate(0 306.5 336.5)"/><ellipse cx="143.25" cy="406.25" rx="11.5" ry="11.5" transform="rotate(0 143.25 406.25)"/><ellipse cx="307" cy="362" rx="10.5" ry="10.0" transform="rotate(0 307 362)"/><ellipse cx="323.5" cy="362.5" rx="10.5" ry="10.0" transform="rotate(0 323.5 362.5)"/><ellipse cx="319" cy="382" rx="9.5" ry="14.5" transform="rotate(0 319 382)"/><ellipse cx="290.6" cy="390" rx="10.0" ry="14.0" transform="rotate(0 290.6 390)"/><ellipse cx="307.5" cy="405" rx="11.0" ry="11.0" transform="rotate(0 307.5 405)"/><ellipse cx="317.5" cy="411.5" rx="12.0" ry="11.5" transform="rotate(0 317.5 411.5)"/><ellipse cx="287.5" cy="412.5" rx="11.5" ry="12.0" transform="rotate(0 287.5 412.5)"/><ellipse cx="309" cy="430.5" rx="11.0" ry="10.5" transform="rotate(0 309 430.5)"/><ellipse cx="284.5" cy="444" rx="10.0" ry="10.0" transform="rotate(0 284.5 444)"/><ellipse cx="318.8" cy="447.6" rx="11.0" ry="10.5" transform="rotate(0 318.8 447.6)"/><ellipse cx="316.4" cy="460" rx="10.0" ry="10.0" transform="rotate(0 316.4 460)"/><ellipse cx="292" cy="463.6" rx="9.5" ry="9.5" transform="rotate(0 292 463.6)"/><ellipse cx="354.4" cy="442.7" rx="11.0" ry="11.0" transform="rotate(0 354.4 442.7)"/><ellipse cx="345.8" cy="452.5" rx="11.5" ry="12.0" transform="rotate(0 345.8 452.5)"/><ellipse cx="340.9" cy="464.8" rx="10.0" ry="10.0" transform="rotate(0 340.9 464.8)"/><ellipse cx="343.3" cy="422" rx="10.0" ry="10.0" transform="rotate(0 343.3 422)"/><ellipse cx="380" cy="339.8" rx="11.0" ry="11.0" transform="rotate(0 380 339.8)"/><ellipse cx="151" cy="403" rx="11.5" ry="9.5" transform="rotate(-20 151 403)"/><ellipse cx="104.5" cy="395.5" rx="10.0" ry="10.0" transform="rotate(0 104.5 395.5)"/><ellipse cx="114" cy="376.5" rx="16.5" ry="9.5" transform="rotate(-15 114 376.5)"/><circle cx="151" cy="129" r="6.0"/><circle cx="156.6" cy="160" r="7.2"/><circle cx="124.3" cy="185.4" r="6.6"/><circle cx="151" cy="179.7" r="6.6"/><circle cx="167.8" cy="193.8" r="6.6"/><circle cx="83.7" cy="184" r="5.7"/><circle cx="127" cy="210.6" r="6.6"/><circle cx="153.8" cy="217.6" r="6.0"/><circle cx="211" cy="174" r="7.2"/><circle cx="271.5" cy="200.8" r="6.6"/><circle cx="221" cy="122.3" r="6.0"/><circle cx="200" cy="154.5" r="6.0"/><circle cx="407.7" cy="140.5" r="6.6"/><circle cx="392.3" cy="136.3" r="6.0"/><circle cx="369.9" cy="177" r="6.6"/><circle cx="364" cy="217.6" r="6.6"/><circle cx="329" cy="182.5" r="6.6"/><circle cx="90.7" cy="236.2" r="6.0"/><circle cx="103.3" cy="233.4" r="6.0"/><circle cx="137" cy="227.8" r="6.0"/><circle cx="127" cy="244.6" r="6.0"/><circle cx="149.6" cy="289.5" r="6.6"/><circle cx="151" cy="262.9" r="6.0"/><circle cx="114.5" cy="331.5" r="5.3"/><circle cx="107.5" cy="345.6" r="5.3"/><circle cx="134" cy="326" r="5.3"/><circle cx="114.5" cy="372" r="6.6"/><circle cx="156.6" cy="251.6" r="6.0"/><circle cx="278.7" cy="295.1" r="6.6"/><circle cx="308.2" cy="359.6" r="6.6"/><circle cx="308" cy="274" r="6.0"/><circle cx="224" cy="246" r="7.2"/><circle cx="239.5" cy="222.2" r="6.0"/><circle cx="235.3" cy="335.7" r="7.2"/><circle cx="381" cy="340" r="7.2"/><circle cx="371.3" cy="348.4" r="7.2"/><circle cx="365.7" cy="337" r="6.6"/><circle cx="382.5" cy="234.8" r="7.2"/><circle cx="364.3" cy="220.8" r="6.6"/><circle cx="348.8" cy="262.9" r="6.6"/><circle cx="339" cy="276.9" r="6.6"/><circle cx="351.6" cy="307.7" r="6.0"/><circle cx="326.4" cy="324.5" r="6.6"/><circle cx="323.6" cy="363.8" r="7.2"/><circle cx="148.25" cy="420" r="6.0"/><circle cx="107" cy="345" r="6.0"/><circle cx="158.25" cy="368.75" r="6.0"/><circle cx="202" cy="353.75" r="6.6"/><circle cx="208" cy="361" r="6.0"/><circle cx="344.6" cy="376.6" r="6.0"/><circle cx="348.2" cy="392.5" r="6.0"/><circle cx="366.6" cy="336" r="6.0"/><circle cx="124.3" cy="184.7" r="7.2"/><circle cx="126.8" cy="210.4" r="6.6"/><circle cx="152.5" cy="179.8" r="6.6"/><circle cx="211.3" cy="174.9" r="6.6"/><circle cx="222.4" cy="246" r="6.6"/><circle cx="237" cy="198" r="6.0"/></g>
<g fill="#0a2ec8" opacity="0.75" filter="url(#b1)"><path d="M148.9 221.0 Q150.3 215.3 155.4 213.7 Q160.5 212.0 166.6 215.6 Q172.6 219.2 181.2 227.1 Q189.8 235.0 191.8 241.4 Q193.8 247.8 190.0 252.7 Q186.2 257.6 179.3 256.7 Q172.4 255.8 164.7 250.0 Q156.9 244.2 152.2 235.5 Q147.4 226.7 148.9 221.0Z"/><path d="M185.1 268.5 Q193.5 261.8 201.1 267.0 Q208.6 272.2 215.1 282.1 Q221.7 291.9 218.8 297.5 Q215.8 303.0 199.2 303.0 Q182.6 303.0 178.8 297.0 Q175.0 290.9 175.8 283.1 Q176.6 275.2 185.1 268.5Z"/><path d="M225.4 145.9 Q225.2 139.9 232.0 130.1 Q238.8 120.4 248.3 119.5 Q257.8 118.7 262.1 124.5 Q266.4 130.3 266.0 138.7 Q265.6 147.2 258.3 153.4 Q251.0 159.7 242.5 158.9 Q233.9 158.2 229.8 155.0 Q225.7 151.9 225.4 145.9Z"/><path d="M320.8 136.0 Q319.3 132.1 327.1 130.0 Q334.8 127.9 347.1 127.7 Q359.4 127.5 369.5 129.6 Q379.6 131.7 383.7 136.4 Q387.8 141.0 383.6 146.8 Q379.4 152.6 373.8 156.9 Q368.2 161.1 361.1 157.5 Q354.0 153.8 345.1 147.4 Q336.2 141.1 329.2 140.5 Q322.2 139.9 320.8 136.0Z"/><path d="M175.2 171.6 Q175.9 161.8 185.0 159.8 Q194.1 157.7 201.6 160.8 Q209.2 163.9 210.7 170.2 Q212.2 176.5 208.2 182.2 Q204.3 188.0 195.4 189.1 Q186.5 190.3 180.4 185.8 Q174.4 181.3 175.2 171.6Z"/><ellipse cx="226.5" cy="301" rx="10.8" ry="11.8" transform="rotate(0 226.5 301)"/><ellipse cx="235" cy="325" rx="7.8" ry="14.8" transform="rotate(-15 235 325)"/><ellipse cx="273" cy="130" rx="12.3" ry="17.3" transform="rotate(25 273 130)"/><ellipse cx="284" cy="160" rx="27.8" ry="9.3" transform="rotate(36 284 160)"/><ellipse cx="183" cy="201" rx="12.8" ry="13.8" transform="rotate(0 183 201)"/><ellipse cx="381.9" cy="123.7" rx="10.8" ry="10.8" transform="rotate(0 381.9 123.7)"/><ellipse cx="330" cy="163" rx="11.8" ry="8.3" transform="rotate(25 330 163)"/><ellipse cx="348" cy="170" rx="12.8" ry="8.8" transform="rotate(20 348 170)"/><ellipse cx="368" cy="178" rx="12.8" ry="8.3" transform="rotate(15 368 178)"/><ellipse cx="383" cy="184" rx="8.8" ry="7.8" transform="rotate(0 383 184)"/><ellipse cx="341.8" cy="185.4" rx="9.8" ry="9.8" transform="rotate(0 341.8 185.4)"/><ellipse cx="412" cy="193" rx="15.8" ry="14.8" transform="rotate(0 412 193)"/><ellipse cx="388.5" cy="321.7" rx="16.8" ry="10.8" transform="rotate(-25 388.5 321.7)"/><ellipse cx="279.5" cy="320.3" rx="15.8" ry="10.8" transform="rotate(0 279.5 320.3)"/><ellipse cx="306.5" cy="336.5" rx="12.3" ry="11.6" transform="rotate(0 306.5 336.5)"/><ellipse cx="143.25" cy="406.25" rx="8.8" ry="8.8" transform="rotate(0 143.25 406.25)"/><ellipse cx="307" cy="362" rx="7.8" ry="7.3" transform="rotate(0 307 362)"/><ellipse cx="323.5" cy="362.5" rx="7.8" ry="7.3" transform="rotate(0 323.5 362.5)"/><ellipse cx="319" cy="382" rx="6.8" ry="11.8" transform="rotate(0 319 382)"/><ellipse cx="290.6" cy="390" rx="7.3" ry="11.3" transform="rotate(0 290.6 390)"/><ellipse cx="307.5" cy="405" rx="8.3" ry="8.3" transform="rotate(0 307.5 405)"/><ellipse cx="317.5" cy="411.5" rx="9.3" ry="8.8" transform="rotate(0 317.5 411.5)"/><ellipse cx="287.5" cy="412.5" rx="8.8" ry="9.3" transform="rotate(0 287.5 412.5)"/><ellipse cx="309" cy="430.5" rx="8.3" ry="7.8" transform="rotate(0 309 430.5)"/><ellipse cx="284.5" cy="444" rx="7.3" ry="7.3" transform="rotate(0 284.5 444)"/><ellipse cx="318.8" cy="447.6" rx="8.3" ry="7.8" transform="rotate(0 318.8 447.6)"/><ellipse cx="316.4" cy="460" rx="7.3" ry="7.3" transform="rotate(0 316.4 460)"/><ellipse cx="292" cy="463.6" rx="6.8" ry="6.8" transform="rotate(0 292 463.6)"/><ellipse cx="354.4" cy="442.7" rx="8.3" ry="8.3" transform="rotate(0 354.4 442.7)"/><ellipse cx="345.8" cy="452.5" rx="8.8" ry="9.3" transform="rotate(0 345.8 452.5)"/><ellipse cx="340.9" cy="464.8" rx="7.3" ry="7.3" transform="rotate(0 340.9 464.8)"/><ellipse cx="343.3" cy="422" rx="7.3" ry="7.3" transform="rotate(0 343.3 422)"/><ellipse cx="380" cy="339.8" rx="8.3" ry="8.3" transform="rotate(0 380 339.8)"/><ellipse cx="151" cy="403" rx="8.8" ry="6.8" transform="rotate(-20 151 403)"/><ellipse cx="104.5" cy="395.5" rx="7.3" ry="7.3" transform="rotate(0 104.5 395.5)"/><ellipse cx="114" cy="376.5" rx="13.8" ry="6.8" transform="rotate(-15 114 376.5)"/><circle cx="151" cy="129" r="4.3"/><circle cx="156.6" cy="160" r="5.5"/><circle cx="124.3" cy="185.4" r="4.9"/><circle cx="151" cy="179.7" r="4.9"/><circle cx="167.8" cy="193.8" r="4.9"/><circle cx="83.7" cy="184" r="4.0"/><circle cx="127" cy="210.6" r="4.9"/><circle cx="153.8" cy="217.6" r="4.3"/><circle cx="211" cy="174" r="5.5"/><circle cx="271.5" cy="200.8" r="4.9"/><circle cx="221" cy="122.3" r="4.3"/><circle cx="200" cy="154.5" r="4.3"/><circle cx="407.7" cy="140.5" r="4.9"/><circle cx="392.3" cy="136.3" r="4.3"/><circle cx="369.9" cy="177" r="4.9"/><circle cx="364" cy="217.6" r="4.9"/><circle cx="329" cy="182.5" r="4.9"/><circle cx="90.7" cy="236.2" r="4.3"/><circle cx="103.3" cy="233.4" r="4.3"/><circle cx="137" cy="227.8" r="4.3"/><circle cx="127" cy="244.6" r="4.3"/><circle cx="149.6" cy="289.5" r="4.9"/><circle cx="151" cy="262.9" r="4.3"/><circle cx="114.5" cy="331.5" r="3.5"/><circle cx="107.5" cy="345.6" r="3.5"/><circle cx="134" cy="326" r="3.5"/><circle cx="114.5" cy="372" r="4.9"/><circle cx="156.6" cy="251.6" r="4.3"/><circle cx="278.7" cy="295.1" r="4.9"/><circle cx="308.2" cy="359.6" r="4.9"/><circle cx="308" cy="274" r="4.3"/><circle cx="224" cy="246" r="5.5"/><circle cx="239.5" cy="222.2" r="4.3"/><circle cx="235.3" cy="335.7" r="5.5"/><circle cx="381" cy="340" r="5.5"/><circle cx="371.3" cy="348.4" r="5.5"/><circle cx="365.7" cy="337" r="4.9"/><circle cx="382.5" cy="234.8" r="5.5"/><circle cx="364.3" cy="220.8" r="4.9"/><circle cx="348.8" cy="262.9" r="4.9"/><circle cx="339" cy="276.9" r="4.9"/><circle cx="351.6" cy="307.7" r="4.3"/><circle cx="326.4" cy="324.5" r="4.9"/><circle cx="323.6" cy="363.8" r="5.5"/><circle cx="148.25" cy="420" r="4.3"/><circle cx="107" cy="345" r="4.3"/><circle cx="158.25" cy="368.75" r="4.3"/><circle cx="202" cy="353.75" r="4.9"/><circle cx="208" cy="361" r="4.3"/><circle cx="344.6" cy="376.6" r="4.3"/><circle cx="348.2" cy="392.5" r="4.3"/><circle cx="366.6" cy="336" r="4.3"/><circle cx="124.3" cy="184.7" r="5.5"/><circle cx="126.8" cy="210.4" r="4.9"/><circle cx="152.5" cy="179.8" r="4.9"/><circle cx="211.3" cy="174.9" r="4.9"/><circle cx="222.4" cy="246" r="4.9"/><circle cx="237" cy="198" r="4.3"/></g>
<g fill="#20a0a8" filter="url(#b1)"><path d="M150.2 221.9 Q151.4 216.5 156.3 215.0 Q161.2 213.5 166.8 217.1 Q172.4 220.8 180.3 227.9 Q188.2 235.0 190.3 241.0 Q192.4 247.1 188.9 251.7 Q185.3 256.3 178.8 255.2 Q172.2 254.2 165.2 248.7 Q158.2 243.3 153.6 235.3 Q148.9 227.3 150.2 221.9Z"/><path d="M185.9 269.7 Q193.7 263.4 200.6 268.4 Q207.5 273.4 213.8 282.5 Q220.1 291.5 217.4 296.8 Q214.6 302.0 199.1 301.8 Q183.6 301.7 180.1 296.1 Q176.6 290.5 177.3 283.3 Q178.1 276.0 185.9 269.7Z"/><path d="M226.9 145.5 Q226.8 139.9 233.0 130.9 Q239.3 121.9 248.2 121.0 Q257.1 120.1 261.0 125.5 Q265.0 131.0 264.5 138.9 Q264.1 146.7 257.3 152.4 Q250.6 158.1 242.7 157.5 Q234.8 156.8 230.9 154.0 Q227.1 151.1 226.9 145.5Z"/><path d="M322.3 136.2 Q320.9 132.5 328.5 130.6 Q336.2 128.8 347.5 128.9 Q358.8 129.0 368.4 130.6 Q378.1 132.3 382.1 136.6 Q386.2 141.0 382.1 146.5 Q378.0 151.9 372.6 155.9 Q367.3 159.8 360.6 156.0 Q354.0 152.2 345.9 146.6 Q337.8 141.0 330.8 140.5 Q323.8 139.9 322.3 136.2Z"/><path d="M176.6 171.8 Q177.2 162.7 185.6 161.0 Q194.1 159.3 200.9 162.0 Q207.8 164.8 209.2 170.5 Q210.6 176.3 207.0 181.5 Q203.3 186.7 195.2 187.8 Q187.1 188.8 181.5 184.8 Q175.9 180.8 176.6 171.8Z"/><ellipse cx="226.5" cy="301" rx="9.2" ry="10.2" transform="rotate(0 226.5 301)"/><ellipse cx="235" cy="325" rx="6.2" ry="13.2" transform="rotate(-15 235 325)"/><ellipse cx="273" cy="130" rx="10.7" ry="15.7" transform="rotate(25 273 130)"/><ellipse cx="284" cy="160" rx="26.2" ry="7.7" transform="rotate(36 284 160)"/><ellipse cx="183" cy="201" rx="11.2" ry="12.2" transform="rotate(0 183 201)"/><ellipse cx="381.9" cy="123.7" rx="9.2" ry="9.2" transform="rotate(0 381.9 123.7)"/><ellipse cx="330" cy="163" rx="10.2" ry="6.7" transform="rotate(25 330 163)"/><ellipse cx="348" cy="170" rx="11.2" ry="7.2" transform="rotate(20 348 170)"/><ellipse cx="368" cy="178" rx="11.2" ry="6.7" transform="rotate(15 368 178)"/><ellipse cx="383" cy="184" rx="7.2" ry="6.2" transform="rotate(0 383 184)"/><ellipse cx="341.8" cy="185.4" rx="8.2" ry="8.2" transform="rotate(0 341.8 185.4)"/><ellipse cx="412" cy="193" rx="14.2" ry="13.2" transform="rotate(0 412 193)"/><ellipse cx="388.5" cy="321.7" rx="15.2" ry="9.2" transform="rotate(-25 388.5 321.7)"/><ellipse cx="279.5" cy="320.3" rx="14.2" ry="9.2" transform="rotate(0 279.5 320.3)"/><ellipse cx="306.5" cy="336.5" rx="10.7" ry="10.0" transform="rotate(0 306.5 336.5)"/><ellipse cx="143.25" cy="406.25" rx="7.2" ry="7.2" transform="rotate(0 143.25 406.25)"/><ellipse cx="307" cy="362" rx="6.2" ry="5.7" transform="rotate(0 307 362)"/><ellipse cx="323.5" cy="362.5" rx="6.2" ry="5.7" transform="rotate(0 323.5 362.5)"/><ellipse cx="319" cy="382" rx="5.2" ry="10.2" transform="rotate(0 319 382)"/><ellipse cx="290.6" cy="390" rx="5.7" ry="9.7" transform="rotate(0 290.6 390)"/><ellipse cx="307.5" cy="405" rx="6.7" ry="6.7" transform="rotate(0 307.5 405)"/><ellipse cx="317.5" cy="411.5" rx="7.7" ry="7.2" transform="rotate(0 317.5 411.5)"/><ellipse cx="287.5" cy="412.5" rx="7.2" ry="7.7" transform="rotate(0 287.5 412.5)"/><ellipse cx="309" cy="430.5" rx="6.7" ry="6.2" transform="rotate(0 309 430.5)"/><ellipse cx="284.5" cy="444" rx="5.7" ry="5.7" transform="rotate(0 284.5 444)"/><ellipse cx="318.8" cy="447.6" rx="6.7" ry="6.2" transform="rotate(0 318.8 447.6)"/><ellipse cx="316.4" cy="460" rx="5.7" ry="5.7" transform="rotate(0 316.4 460)"/><ellipse cx="292" cy="463.6" rx="5.2" ry="5.2" transform="rotate(0 292 463.6)"/><ellipse cx="354.4" cy="442.7" rx="6.7" ry="6.7" transform="rotate(0 354.4 442.7)"/><ellipse cx="345.8" cy="452.5" rx="7.2" ry="7.7" transform="rotate(0 345.8 452.5)"/><ellipse cx="340.9" cy="464.8" rx="5.7" ry="5.7" transform="rotate(0 340.9 464.8)"/><ellipse cx="343.3" cy="422" rx="5.7" ry="5.7" transform="rotate(0 343.3 422)"/><ellipse cx="380" cy="339.8" rx="6.7" ry="6.7" transform="rotate(0 380 339.8)"/><ellipse cx="151" cy="403" rx="7.2" ry="5.2" transform="rotate(-20 151 403)"/><ellipse cx="104.5" cy="395.5" rx="5.7" ry="5.7" transform="rotate(0 104.5 395.5)"/><ellipse cx="114" cy="376.5" rx="12.2" ry="5.2" transform="rotate(-15 114 376.5)"/><circle cx="151" cy="129" r="3.2"/><circle cx="156.6" cy="160" r="4.4"/><circle cx="124.3" cy="185.4" r="3.8"/><circle cx="151" cy="179.7" r="3.8"/><circle cx="167.8" cy="193.8" r="3.8"/><circle cx="83.7" cy="184" r="2.9"/><circle cx="127" cy="210.6" r="3.8"/><circle cx="153.8" cy="217.6" r="3.2"/><circle cx="211" cy="174" r="4.4"/><circle cx="271.5" cy="200.8" r="3.8"/><circle cx="221" cy="122.3" r="3.2"/><circle cx="200" cy="154.5" r="3.2"/><circle cx="407.7" cy="140.5" r="3.8"/><circle cx="392.3" cy="136.3" r="3.2"/><circle cx="369.9" cy="177" r="3.8"/><circle cx="364" cy="217.6" r="3.8"/><circle cx="329" cy="182.5" r="3.8"/><circle cx="90.7" cy="236.2" r="3.2"/><circle cx="103.3" cy="233.4" r="3.2"/><circle cx="137" cy="227.8" r="3.2"/><circle cx="127" cy="244.6" r="3.2"/><circle cx="149.6" cy="289.5" r="3.8"/><circle cx="151" cy="262.9" r="3.2"/><circle cx="114.5" cy="331.5" r="2.5"/><circle cx="107.5" cy="345.6" r="2.5"/><circle cx="134" cy="326" r="2.5"/><circle cx="114.5" cy="372" r="3.8"/><circle cx="156.6" cy="251.6" r="3.2"/><circle cx="278.7" cy="295.1" r="3.8"/><circle cx="308.2" cy="359.6" r="3.8"/><circle cx="308" cy="274" r="3.2"/><circle cx="224" cy="246" r="4.4"/><circle cx="239.5" cy="222.2" r="3.2"/><circle cx="235.3" cy="335.7" r="4.4"/><circle cx="381" cy="340" r="4.4"/><circle cx="371.3" cy="348.4" r="4.4"/><circle cx="365.7" cy="337" r="3.8"/><circle cx="382.5" cy="234.8" r="4.4"/><circle cx="364.3" cy="220.8" r="3.8"/><circle cx="348.8" cy="262.9" r="3.8"/><circle cx="339" cy="276.9" r="3.8"/><circle cx="351.6" cy="307.7" r="3.2"/><circle cx="326.4" cy="324.5" r="3.8"/><circle cx="323.6" cy="363.8" r="4.4"/><circle cx="148.25" cy="420" r="3.2"/><circle cx="107" cy="345" r="3.2"/><circle cx="158.25" cy="368.75" r="3.2"/><circle cx="202" cy="353.75" r="3.8"/><circle cx="208" cy="361" r="3.2"/><circle cx="344.6" cy="376.6" r="3.2"/><circle cx="348.2" cy="392.5" r="3.2"/><circle cx="366.6" cy="336" r="3.2"/><circle cx="124.3" cy="184.7" r="4.4"/><circle cx="126.8" cy="210.4" r="3.8"/><circle cx="152.5" cy="179.8" r="3.8"/><circle cx="211.3" cy="174.9" r="3.8"/><circle cx="222.4" cy="246" r="3.8"/><circle cx="237" cy="198" r="3.2"/></g>
<g fill="#60b448" filter="url(#b0)"><path d="M151.1 222.4 Q152.2 217.2 156.9 215.9 Q161.6 214.5 166.9 218.2 Q172.2 221.9 179.6 228.5 Q187.1 235.0 189.3 240.8 Q191.5 246.5 188.1 251.0 Q184.6 255.4 178.4 254.2 Q172.1 253.1 165.6 247.9 Q159.1 242.6 154.5 235.1 Q150.0 227.6 151.1 222.4Z"/><path d="M186.4 270.5 Q193.9 264.5 200.3 269.3 Q206.7 274.2 212.9 282.7 Q219.1 291.3 216.4 296.3 Q213.8 301.2 199.1 301.0 Q184.3 300.9 181.0 295.6 Q177.6 290.3 178.3 283.4 Q179.0 276.5 186.4 270.5Z"/><path d="M228.0 145.2 Q227.9 140.0 233.8 131.5 Q239.6 123.0 248.1 122.0 Q256.5 121.0 260.3 126.3 Q264.0 131.5 263.5 138.9 Q263.0 146.3 256.7 151.7 Q250.3 157.1 242.8 156.5 Q235.4 155.9 231.7 153.2 Q228.0 150.5 228.0 145.2Z"/><path d="M323.4 136.4 Q321.9 132.7 329.5 131.1 Q337.1 129.4 347.7 129.7 Q358.4 130.0 367.7 131.3 Q377.0 132.6 381.1 136.8 Q385.1 141.0 381.0 146.2 Q377.0 151.5 371.8 155.2 Q366.6 158.9 360.3 155.0 Q354.0 151.1 346.4 146.1 Q338.9 141.0 331.9 140.5 Q324.9 140.0 323.4 136.4Z"/><path d="M177.5 171.9 Q178.1 163.4 186.1 161.9 Q194.0 160.4 200.5 162.9 Q206.9 165.4 208.2 170.8 Q209.5 176.1 206.1 181.0 Q202.7 185.9 195.1 186.8 Q187.6 187.8 182.3 184.1 Q177.0 180.4 177.5 171.9Z"/><ellipse cx="226.5" cy="301" rx="8.1" ry="9.1" transform="rotate(0 226.5 301)"/><ellipse cx="235" cy="325" rx="5.1" ry="12.1" transform="rotate(-15 235 325)"/><ellipse cx="273" cy="130" rx="9.6" ry="14.6" transform="rotate(25 273 130)"/><ellipse cx="284" cy="160" rx="25.1" ry="6.6" transform="rotate(36 284 160)"/><ellipse cx="183" cy="201" rx="10.1" ry="11.1" transform="rotate(0 183 201)"/><ellipse cx="381.9" cy="123.7" rx="8.1" ry="8.1" transform="rotate(0 381.9 123.7)"/><ellipse cx="330" cy="163" rx="9.1" ry="5.6" transform="rotate(25 330 163)"/><ellipse cx="348" cy="170" rx="10.1" ry="6.1" transform="rotate(20 348 170)"/><ellipse cx="368" cy="178" rx="10.1" ry="5.6" transform="rotate(15 368 178)"/><ellipse cx="383" cy="184" rx="6.1" ry="5.1" transform="rotate(0 383 184)"/><ellipse cx="341.8" cy="185.4" rx="7.1" ry="7.1" transform="rotate(0 341.8 185.4)"/><ellipse cx="412" cy="193" rx="13.1" ry="12.1" transform="rotate(0 412 193)"/><ellipse cx="388.5" cy="321.7" rx="14.1" ry="8.1" transform="rotate(-25 388.5 321.7)"/><ellipse cx="279.5" cy="320.3" rx="13.1" ry="8.1" transform="rotate(0 279.5 320.3)"/><ellipse cx="306.5" cy="336.5" rx="9.6" ry="8.9" transform="rotate(0 306.5 336.5)"/><ellipse cx="143.25" cy="406.25" rx="6.1" ry="6.1" transform="rotate(0 143.25 406.25)"/><ellipse cx="307" cy="362" rx="5.1" ry="4.6" transform="rotate(0 307 362)"/><ellipse cx="323.5" cy="362.5" rx="5.1" ry="4.6" transform="rotate(0 323.5 362.5)"/><ellipse cx="319" cy="382" rx="4.1" ry="9.1" transform="rotate(0 319 382)"/><ellipse cx="290.6" cy="390" rx="4.6" ry="8.6" transform="rotate(0 290.6 390)"/><ellipse cx="307.5" cy="405" rx="5.6" ry="5.6" transform="rotate(0 307.5 405)"/><ellipse cx="317.5" cy="411.5" rx="6.6" ry="6.1" transform="rotate(0 317.5 411.5)"/><ellipse cx="287.5" cy="412.5" rx="6.1" ry="6.6" transform="rotate(0 287.5 412.5)"/><ellipse cx="309" cy="430.5" rx="5.6" ry="5.1" transform="rotate(0 309 430.5)"/><ellipse cx="284.5" cy="444" rx="4.6" ry="4.6" transform="rotate(0 284.5 444)"/><ellipse cx="318.8" cy="447.6" rx="5.6" ry="5.1" transform="rotate(0 318.8 447.6)"/><ellipse cx="316.4" cy="460" rx="4.6" ry="4.6" transform="rotate(0 316.4 460)"/><ellipse cx="292" cy="463.6" rx="4.1" ry="4.1" transform="rotate(0 292 463.6)"/><ellipse cx="354.4" cy="442.7" rx="5.6" ry="5.6" transform="rotate(0 354.4 442.7)"/><ellipse cx="345.8" cy="452.5" rx="6.1" ry="6.6" transform="rotate(0 345.8 452.5)"/><ellipse cx="340.9" cy="464.8" rx="4.6" ry="4.6" transform="rotate(0 340.9 464.8)"/><ellipse cx="343.3" cy="422" rx="4.6" ry="4.6" transform="rotate(0 343.3 422)"/><ellipse cx="380" cy="339.8" rx="5.6" ry="5.6" transform="rotate(0 380 339.8)"/><ellipse cx="151" cy="403" rx="6.1" ry="4.1" transform="rotate(-20 151 403)"/><ellipse cx="104.5" cy="395.5" rx="4.6" ry="4.6" transform="rotate(0 104.5 395.5)"/><ellipse cx="114" cy="376.5" rx="11.1" ry="4.1" transform="rotate(-15 114 376.5)"/><circle cx="151" cy="129" r="2.5"/><circle cx="156.6" cy="160" r="3.7"/><circle cx="124.3" cy="185.4" r="3.1"/><circle cx="151" cy="179.7" r="3.1"/><circle cx="167.8" cy="193.8" r="3.1"/><circle cx="83.7" cy="184" r="2.2"/><circle cx="127" cy="210.6" r="3.1"/><circle cx="153.8" cy="217.6" r="2.5"/><circle cx="211" cy="174" r="3.7"/><circle cx="271.5" cy="200.8" r="3.1"/><circle cx="221" cy="122.3" r="2.5"/><circle cx="200" cy="154.5" r="2.5"/><circle cx="407.7" cy="140.5" r="3.1"/><circle cx="392.3" cy="136.3" r="2.5"/><circle cx="369.9" cy="177" r="3.1"/><circle cx="364" cy="217.6" r="3.1"/><circle cx="329" cy="182.5" r="3.1"/><circle cx="90.7" cy="236.2" r="2.5"/><circle cx="103.3" cy="233.4" r="2.5"/><circle cx="137" cy="227.8" r="2.5"/><circle cx="127" cy="244.6" r="2.5"/><circle cx="149.6" cy="289.5" r="3.1"/><circle cx="151" cy="262.9" r="2.5"/><circle cx="114.5" cy="331.5" r="1.8"/><circle cx="107.5" cy="345.6" r="1.8"/><circle cx="134" cy="326" r="1.8"/><circle cx="114.5" cy="372" r="3.1"/><circle cx="156.6" cy="251.6" r="2.5"/><circle cx="278.7" cy="295.1" r="3.1"/><circle cx="308.2" cy="359.6" r="3.1"/><circle cx="308" cy="274" r="2.5"/><circle cx="224" cy="246" r="3.7"/><circle cx="239.5" cy="222.2" r="2.5"/><circle cx="235.3" cy="335.7" r="3.7"/><circle cx="381" cy="340" r="3.7"/><circle cx="371.3" cy="348.4" r="3.7"/><circle cx="365.7" cy="337" r="3.1"/><circle cx="382.5" cy="234.8" r="3.7"/><circle cx="364.3" cy="220.8" r="3.1"/><circle cx="348.8" cy="262.9" r="3.1"/><circle cx="339" cy="276.9" r="3.1"/><circle cx="351.6" cy="307.7" r="2.5"/><circle cx="326.4" cy="324.5" r="3.1"/><circle cx="323.6" cy="363.8" r="3.7"/><circle cx="148.25" cy="420" r="2.5"/><circle cx="107" cy="345" r="2.5"/><circle cx="158.25" cy="368.75" r="2.5"/><circle cx="202" cy="353.75" r="3.1"/><circle cx="208" cy="361" r="2.5"/><circle cx="344.6" cy="376.6" r="2.5"/><circle cx="348.2" cy="392.5" r="2.5"/><circle cx="366.6" cy="336" r="2.5"/><circle cx="124.3" cy="184.7" r="3.7"/><circle cx="126.8" cy="210.4" r="3.1"/><circle cx="152.5" cy="179.8" r="3.1"/><circle cx="211.3" cy="174.9" r="3.1"/><circle cx="222.4" cy="246" r="3.1"/><circle cx="237" cy="198" r="2.5"/></g>
<g fill="#bc7c60" filter="url(#b0)"><path d="M152.0 223.0 Q153.0 218.0 157.5 216.8 Q162.0 215.5 167.0 219.2 Q172.0 223.0 179.0 229.0 Q186.0 235.0 188.2 240.5 Q190.5 246.0 187.2 250.2 Q184.0 254.5 178.0 253.2 Q172.0 252.0 166.0 247.0 Q160.0 242.0 155.5 235.0 Q151.0 228.0 152.0 223.0Z"/><path d="M187.0 271.3 Q194.0 265.6 200.0 270.3 Q206.0 275.0 212.0 283.0 Q218.0 291.0 215.5 295.8 Q213.0 300.5 199.0 300.2 Q185.0 300.0 181.8 295.0 Q178.7 290.0 179.3 283.5 Q180.0 277.0 187.0 271.3Z"/><path d="M229.0 145.0 Q229.0 140.0 234.5 132.0 Q240.0 124.0 248.0 123.0 Q256.0 122.0 259.5 127.0 Q263.0 132.0 262.5 139.0 Q262.0 146.0 256.0 151.0 Q250.0 156.0 243.0 155.5 Q236.0 155.0 232.5 152.5 Q229.0 150.0 229.0 145.0Z"/><path d="M324.5 136.5 Q323.0 133.0 330.5 131.5 Q338.0 130.0 348.0 130.5 Q358.0 131.0 367.0 132.0 Q376.0 133.0 380.0 137.0 Q384.0 141.0 380.0 146.0 Q376.0 151.0 371.0 154.5 Q366.0 158.0 360.0 154.0 Q354.0 150.0 347.0 145.5 Q340.0 141.0 333.0 140.5 Q326.0 140.0 324.5 136.5Z"/><path d="M178.5 172.0 Q179.0 164.0 186.5 162.8 Q194.0 161.5 200.0 163.8 Q206.0 166.0 207.2 171.0 Q208.4 176.0 205.2 180.5 Q202.0 185.0 195.0 185.9 Q188.0 186.8 183.0 183.4 Q178.0 180.0 178.5 172.0Z"/><ellipse cx="226.5" cy="301" rx="7.0" ry="8.0" transform="rotate(0 226.5 301)"/><ellipse cx="235" cy="325" rx="4.0" ry="11.0" transform="rotate(-15 235 325)"/><ellipse cx="273" cy="130" rx="8.5" ry="13.5" transform="rotate(25 273 130)"/><ellipse cx="284" cy="160" rx="24.0" ry="5.5" transform="rotate(36 284 160)"/><ellipse cx="183" cy="201" rx="9.0" ry="10.0" transform="rotate(0 183 201)"/><ellipse cx="381.9" cy="123.7" rx="7.0" ry="7.0" transform="rotate(0 381.9 123.7)"/><ellipse cx="330" cy="163" rx="8.0" ry="4.5" transform="rotate(25 330 163)"/><ellipse cx="348" cy="170" rx="9.0" ry="5.0" transform="rotate(20 348 170)"/><ellipse cx="368" cy="178" rx="9.0" ry="4.5" transform="rotate(15 368 178)"/><ellipse cx="383" cy="184" rx="5.0" ry="4.0" transform="rotate(0 383 184)"/><ellipse cx="341.8" cy="185.4" rx="6.0" ry="6.0" transform="rotate(0 341.8 185.4)"/><ellipse cx="412" cy="193" rx="12.0" ry="11.0" transform="rotate(0 412 193)"/><ellipse cx="388.5" cy="321.7" rx="13.0" ry="7.0" transform="rotate(-25 388.5 321.7)"/><ellipse cx="279.5" cy="320.3" rx="12.0" ry="7.0" transform="rotate(0 279.5 320.3)"/><ellipse cx="306.5" cy="336.5" rx="8.5" ry="7.8" transform="rotate(0 306.5 336.5)"/><ellipse cx="143.25" cy="406.25" rx="5.0" ry="5.0" transform="rotate(0 143.25 406.25)"/><ellipse cx="307" cy="362" rx="4.0" ry="3.5" transform="rotate(0 307 362)"/><ellipse cx="323.5" cy="362.5" rx="4.0" ry="3.5" transform="rotate(0 323.5 362.5)"/><ellipse cx="319" cy="382" rx="3.0" ry="8.0" transform="rotate(0 319 382)"/><ellipse cx="290.6" cy="390" rx="3.5" ry="7.5" transform="rotate(0 290.6 390)"/><ellipse cx="307.5" cy="405" rx="4.5" ry="4.5" transform="rotate(0 307.5 405)"/><ellipse cx="317.5" cy="411.5" rx="5.5" ry="5.0" transform="rotate(0 317.5 411.5)"/><ellipse cx="287.5" cy="412.5" rx="5.0" ry="5.5" transform="rotate(0 287.5 412.5)"/><ellipse cx="309" cy="430.5" rx="4.5" ry="4.0" transform="rotate(0 309 430.5)"/><ellipse cx="284.5" cy="444" rx="3.5" ry="3.5" transform="rotate(0 284.5 444)"/><ellipse cx="318.8" cy="447.6" rx="4.5" ry="4.0" transform="rotate(0 318.8 447.6)"/><ellipse cx="316.4" cy="460" rx="3.5" ry="3.5" transform="rotate(0 316.4 460)"/><ellipse cx="292" cy="463.6" rx="3.0" ry="3.0" transform="rotate(0 292 463.6)"/><ellipse cx="354.4" cy="442.7" rx="4.5" ry="4.5" transform="rotate(0 354.4 442.7)"/><ellipse cx="345.8" cy="452.5" rx="5.0" ry="5.5" transform="rotate(0 345.8 452.5)"/><ellipse cx="340.9" cy="464.8" rx="3.5" ry="3.5" transform="rotate(0 340.9 464.8)"/><ellipse cx="343.3" cy="422" rx="3.5" ry="3.5" transform="rotate(0 343.3 422)"/><ellipse cx="380" cy="339.8" rx="4.5" ry="4.5" transform="rotate(0 380 339.8)"/><ellipse cx="151" cy="403" rx="5.0" ry="3.0" transform="rotate(-20 151 403)"/><ellipse cx="104.5" cy="395.5" rx="3.5" ry="3.5" transform="rotate(0 104.5 395.5)"/><ellipse cx="114" cy="376.5" rx="10.0" ry="3.0" transform="rotate(-15 114 376.5)"/><circle cx="151" cy="129" r="1.8"/><circle cx="156.6" cy="160" r="3.0"/><circle cx="124.3" cy="185.4" r="2.4"/><circle cx="151" cy="179.7" r="2.4"/><circle cx="167.8" cy="193.8" r="2.4"/><circle cx="83.7" cy="184" r="1.5"/><circle cx="127" cy="210.6" r="2.4"/><circle cx="153.8" cy="217.6" r="1.8"/><circle cx="211" cy="174" r="3.0"/><circle cx="271.5" cy="200.8" r="2.4"/><circle cx="221" cy="122.3" r="1.8"/><circle cx="200" cy="154.5" r="1.8"/><circle cx="407.7" cy="140.5" r="2.4"/><circle cx="392.3" cy="136.3" r="1.8"/><circle cx="369.9" cy="177" r="2.4"/><circle cx="364" cy="217.6" r="2.4"/><circle cx="329" cy="182.5" r="2.4"/><circle cx="90.7" cy="236.2" r="1.8"/><circle cx="103.3" cy="233.4" r="1.8"/><circle cx="137" cy="227.8" r="1.8"/><circle cx="127" cy="244.6" r="1.8"/><circle cx="149.6" cy="289.5" r="2.4"/><circle cx="151" cy="262.9" r="1.8"/><circle cx="114.5" cy="331.5" r="1.1"/><circle cx="107.5" cy="345.6" r="1.1"/><circle cx="134" cy="326" r="1.1"/><circle cx="114.5" cy="372" r="2.4"/><circle cx="156.6" cy="251.6" r="1.8"/><circle cx="278.7" cy="295.1" r="2.4"/><circle cx="308.2" cy="359.6" r="2.4"/><circle cx="308" cy="274" r="1.8"/><circle cx="224" cy="246" r="3.0"/><circle cx="239.5" cy="222.2" r="1.8"/><circle cx="235.3" cy="335.7" r="3.0"/><circle cx="381" cy="340" r="3.0"/><circle cx="371.3" cy="348.4" r="3.0"/><circle cx="365.7" cy="337" r="2.4"/><circle cx="382.5" cy="234.8" r="3.0"/><circle cx="364.3" cy="220.8" r="2.4"/><circle cx="348.8" cy="262.9" r="2.4"/><circle cx="339" cy="276.9" r="2.4"/><circle cx="351.6" cy="307.7" r="1.8"/><circle cx="326.4" cy="324.5" r="2.4"/><circle cx="323.6" cy="363.8" r="3.0"/><circle cx="148.25" cy="420" r="1.8"/><circle cx="107" cy="345" r="1.8"/><circle cx="158.25" cy="368.75" r="1.8"/><circle cx="202" cy="353.75" r="2.4"/><circle cx="208" cy="361" r="1.8"/><circle cx="344.6" cy="376.6" r="1.8"/><circle cx="348.2" cy="392.5" r="1.8"/><circle cx="366.6" cy="336" r="1.8"/><circle cx="124.3" cy="184.7" r="3.0"/><circle cx="126.8" cy="210.4" r="2.4"/><circle cx="152.5" cy="179.8" r="2.4"/><circle cx="211.3" cy="174.9" r="2.4"/><circle cx="222.4" cy="246" r="2.4"/><circle cx="237" cy="198" r="1.8"/></g>
<g filter="url(#b0)"><path d="M382.5 121.5h0M246.5 124.5h0M381.5 124.5h0M243.5 126.5h0M255.5 126.5h0M245.5 127.5h0M259.5 127.5h0M277.5 127.5h0M280.5 129.5h0M236.5 130.5h0M237.5 131.5h0M253.5 132.5h0M340.5 132.5h0M342.5 132.5h0M344.5 132.5h0M336.5 133.5h0M358.5 134.5h0M362.5 134.5h0M273.5 135.5h0M270.5 136.5h0M345.5 136.5h0M339.5 137.5h0M336.5 138.5h0M255.5 139.5h0M247.5 140.5h0M238.5 141.5h0M360.5 141.5h0M347.5 143.5h0M260.5 146.5h0M352.5 146.5h0M241.5 147.5h0M243.5 147.5h0M361.5 149.5h0M371.5 149.5h0M239.5 150.5h0M362.5 150.5h0M278.5 151.5h0M244.5 155.5h0M274.5 157.5h0M158.5 159.5h0M279.5 162.5h0M182.5 163.5h0M203.5 165.5h0M189.5 166.5h0M198.5 169.5h0M295.5 169.5h0M190.5 170.5h0M301.5 172.5h0M349.5 172.5h0M180.5 175.5h0M360.5 175.5h0M364.5 178.5h0M371.5 180.5h0M181.5 181.5h0M339.5 182.5h0M197.5 185.5h0M125.5 186.5h0M346.5 187.5h0M342.5 189.5h0M413.5 189.5h0M178.5 199.5h0M187.5 204.5h0M178.5 208.5h0M161.5 220.5h0M154.5 221.5h0M167.5 226.5h0M175.5 231.5h0M166.5 234.5h0M177.5 234.5h0M158.5 235.5h0M174.5 241.5h0M172.5 251.5h0M194.5 266.5h0M193.5 274.5h0M203.5 276.5h0M205.5 277.5h0M183.5 282.5h0M191.5 284.5h0M206.5 286.5h0M195.5 288.5h0M207.5 288.5h0M204.5 291.5h0M206.5 291.5h0M280.5 315.5h0M391.5 319.5h0M286.5 320.5h0M281.5 321.5h0M395.5 321.5h0M379.5 326.5h0M390.5 326.5h0M235.5 327.5h0M379.5 327.5h0M380.5 327.5h0M235.5 329.5h0M300.5 336.5h0M313.5 338.5h0M382.5 342.5h0M158.5 369.5h0M121.5 375.5h0M286.5 408.5h0M318.5 412.5h0M286.5 416.5h0M307.5 429.5h0M310.5 429.5h0M309.5 431.5h0M318.5 446.5h0M343.5 449.5h0M290.5 463.5h0" stroke="#d05838" stroke-width="1.0" stroke-opacity="1.0" stroke-linecap="round" fill="none"/><path d="M384.5 118.5h0M278.5 122.5h0M378.5 122.5h0M382.5 122.5h0M252.5 123.5h0M269.5 123.5h0M275.5 123.5h0M278.5 123.5h0M250.5 124.5h0M384.5 124.5h0M256.5 125.5h0M277.5 125.5h0M387.5 125.5h0M270.5 127.5h0M381.5 127.5h0M241.5 128.5h0M246.5 129.5h0M254.5 129.5h0M257.5 130.5h0M265.5 132.5h0M272.5 133.5h0M337.5 133.5h0M272.5 134.5h0M326.5 134.5h0M237.5 136.5h0M351.5 136.5h0M357.5 136.5h0M265.5 139.5h0M343.5 139.5h0M268.5 140.5h0M366.5 140.5h0M370.5 140.5h0M357.5 141.5h0M239.5 142.5h0M346.5 142.5h0M348.5 143.5h0M355.5 143.5h0M237.5 144.5h0M258.5 145.5h0M371.5 145.5h0M366.5 147.5h0M369.5 147.5h0M370.5 147.5h0M247.5 148.5h0M275.5 149.5h0M359.5 150.5h0M233.5 151.5h0M267.5 151.5h0M233.5 152.5h0M244.5 153.5h0M277.5 153.5h0M237.5 154.5h0M275.5 154.5h0M193.5 162.5h0M288.5 162.5h0M325.5 162.5h0M185.5 163.5h0M292.5 164.5h0M342.5 165.5h0M179.5 166.5h0M191.5 167.5h0M296.5 167.5h0M182.5 169.5h0M205.5 171.5h0M368.5 174.5h0M367.5 175.5h0M193.5 176.5h0M195.5 177.5h0M184.5 179.5h0M198.5 179.5h0M194.5 181.5h0M191.5 183.5h0M125.5 184.5h0M344.5 184.5h0M338.5 185.5h0M417.5 187.5h0M420.5 187.5h0M410.5 189.5h0M187.5 193.5h0M418.5 193.5h0M416.5 194.5h0M167.5 195.5h0M413.5 200.5h0M175.5 203.5h0M176.5 204.5h0M127.5 210.5h0M161.5 222.5h0M170.5 222.5h0M167.5 223.5h0M171.5 223.5h0M158.5 224.5h0M159.5 225.5h0M159.5 226.5h0M162.5 229.5h0M157.5 230.5h0M161.5 233.5h0M161.5 234.5h0M176.5 234.5h0M381.5 235.5h0M170.5 238.5h0M170.5 239.5h0M169.5 240.5h0M182.5 241.5h0M171.5 242.5h0M168.5 243.5h0M223.5 244.5h0M171.5 247.5h0M186.5 247.5h0M174.5 250.5h0M177.5 252.5h0M199.5 272.5h0M187.5 276.5h0M188.5 276.5h0M204.5 276.5h0M186.5 278.5h0M194.5 278.5h0M182.5 281.5h0M195.5 281.5h0M202.5 282.5h0M186.5 283.5h0M179.5 284.5h0M185.5 287.5h0M192.5 291.5h0M279.5 295.5h0M193.5 296.5h0M205.5 299.5h0M224.5 299.5h0M220.5 300.5h0M228.5 303.5h0M227.5 307.5h0M394.5 315.5h0M395.5 315.5h0M277.5 316.5h0M287.5 316.5h0M393.5 316.5h0M283.5 317.5h0M273.5 319.5h0M276.5 321.5h0M282.5 322.5h0M278.5 323.5h0M306.5 329.5h0M303.5 332.5h0M379.5 336.5h0M302.5 337.5h0M310.5 338.5h0M379.5 338.5h0M379.5 341.5h0M372.5 346.5h0M309.5 358.5h0M322.5 360.5h0M324.5 364.5h0M345.5 376.5h0M292.5 389.5h0M106.5 394.5h0M307.5 406.5h0M286.5 411.5h0M286.5 412.5h0M344.5 422.5h0M307.5 430.5h0M306.5 432.5h0M348.5 452.5h0M342.5 463.5h0M338.5 465.5h0" stroke="#d05838" stroke-width="1.5" stroke-opacity="1.0" stroke-linecap="round" fill="none"/><path d="M345.5 130.5h0M267.5 131.5h0M325.5 132.5h0M329.5 132.5h0M337.5 134.5h0M268.5 136.5h0M363.5 136.5h0M272.5 138.5h0M335.5 138.5h0M376.5 139.5h0M255.5 150.5h0M250.5 151.5h0M273.5 157.5h0M345.5 165.5h0M205.5 168.5h0M200.5 169.5h0M204.5 170.5h0M421.5 193.5h0M188.5 203.5h0M137.5 227.5h0M171.5 250.5h0M203.5 273.5h0M185.5 275.5h0M148.5 288.5h0M187.5 289.5h0M212.5 290.5h0M184.5 291.5h0M201.5 297.5h0M224.5 300.5h0M282.5 317.5h0M398.5 317.5h0M396.5 319.5h0M287.5 320.5h0M388.5 321.5h0M234.5 322.5h0M380.5 323.5h0M386.5 326.5h0M380.5 328.5h0M310.5 332.5h0M299.5 335.5h0M377.5 338.5h0M325.5 362.5h0M342.5 419.5h0M320.5 446.5h0M348.5 450.5h0M345.5 454.5h0M291.5 461.5h0" stroke="#d05838" stroke-width="2.0" stroke-opacity="1.0" stroke-linecap="round" fill="none"/><path d="M274.5 120.5h0M275.5 124.5h0M378.5 125.5h0M258.5 126.5h0M239.5 127.5h0M383.5 127.5h0M267.5 130.5h0M350.5 131.5h0M345.5 132.5h0M235.5 133.5h0M258.5 134.5h0M358.5 135.5h0M367.5 135.5h0M239.5 136.5h0M249.5 136.5h0M232.5 137.5h0M268.5 137.5h0M369.5 137.5h0M377.5 137.5h0M370.5 138.5h0M373.5 139.5h0M355.5 140.5h0M347.5 142.5h0M352.5 142.5h0M376.5 143.5h0M257.5 144.5h0M363.5 144.5h0M369.5 146.5h0M379.5 146.5h0M365.5 147.5h0M266.5 149.5h0M357.5 149.5h0M375.5 149.5h0M252.5 150.5h0M240.5 151.5h0M252.5 151.5h0M268.5 151.5h0M360.5 151.5h0M249.5 152.5h0M157.5 161.5h0M283.5 161.5h0M334.5 162.5h0M328.5 163.5h0M327.5 164.5h0M297.5 166.5h0M332.5 166.5h0M182.5 167.5h0M199.5 167.5h0M344.5 167.5h0M349.5 167.5h0M186.5 168.5h0M297.5 168.5h0M343.5 168.5h0M196.5 169.5h0M354.5 173.5h0M204.5 174.5h0M202.5 176.5h0M373.5 176.5h0M185.5 177.5h0M369.5 180.5h0M344.5 181.5h0M384.5 181.5h0M414.5 183.5h0M340.5 186.5h0M409.5 186.5h0M407.5 187.5h0M409.5 192.5h0M415.5 196.5h0M179.5 201.5h0M188.5 205.5h0M187.5 207.5h0M155.5 219.5h0M365.5 220.5h0M154.5 223.5h0M172.5 231.5h0M155.5 232.5h0M156.5 232.5h0M179.5 243.5h0M187.5 243.5h0M174.5 244.5h0M169.5 245.5h0M187.5 248.5h0M197.5 271.5h0M188.5 272.5h0M183.5 274.5h0M200.5 274.5h0M188.5 277.5h0M180.5 279.5h0M197.5 286.5h0M205.5 287.5h0M214.5 287.5h0M197.5 290.5h0M203.5 290.5h0M213.5 292.5h0M210.5 293.5h0M209.5 295.5h0M224.5 295.5h0M273.5 316.5h0M395.5 316.5h0M285.5 317.5h0M231.5 319.5h0M275.5 321.5h0M282.5 323.5h0M308.5 335.5h0M235.5 336.5h0M200.5 354.5h0M108.5 379.5h0M290.5 389.5h0M357.5 441.5h0M316.5 447.5h0M345.5 449.5h0" stroke="#c86848" stroke-width="1.0" stroke-opacity="1.0" stroke-linecap="round" fill="none"/><path d="M382.5 120.5h0M250.5 123.5h0M255.5 123.5h0M274.5 123.5h0M271.5 124.5h0M241.5 126.5h0M384.5 126.5h0M266.5 127.5h0M238.5 128.5h0M239.5 128.5h0M380.5 128.5h0M239.5 129.5h0M249.5 130.5h0M260.5 131.5h0M350.5 132.5h0M270.5 133.5h0M370.5 133.5h0M333.5 134.5h0M373.5 134.5h0M258.5 135.5h0M391.5 135.5h0M252.5 136.5h0M335.5 136.5h0M391.5 136.5h0M259.5 137.5h0M341.5 138.5h0M375.5 138.5h0M270.5 139.5h0M231.5 140.5h0M238.5 140.5h0M249.5 140.5h0M259.5 141.5h0M377.5 141.5h0M371.5 142.5h0M376.5 142.5h0M344.5 143.5h0M248.5 144.5h0M252.5 144.5h0M349.5 145.5h0M361.5 145.5h0M266.5 146.5h0M237.5 148.5h0M372.5 148.5h0M230.5 149.5h0M236.5 149.5h0M243.5 150.5h0M246.5 151.5h0M282.5 153.5h0M364.5 155.5h0M367.5 155.5h0M280.5 157.5h0M195.5 162.5h0M335.5 163.5h0M183.5 164.5h0M201.5 164.5h0M336.5 165.5h0M201.5 166.5h0M290.5 167.5h0M202.5 168.5h0M181.5 171.5h0M186.5 171.5h0M298.5 172.5h0M184.5 174.5h0M186.5 174.5h0M193.5 174.5h0M364.5 174.5h0M368.5 176.5h0M184.5 178.5h0M186.5 179.5h0M180.5 180.5h0M192.5 183.5h0M342.5 187.5h0M409.5 189.5h0M413.5 191.5h0M422.5 191.5h0M422.5 194.5h0M406.5 196.5h0M186.5 198.5h0M270.5 199.5h0M407.5 199.5h0M272.5 201.5h0M408.5 202.5h0M153.5 216.5h0M164.5 219.5h0M159.5 227.5h0M160.5 229.5h0M177.5 229.5h0M170.5 230.5h0M153.5 231.5h0M162.5 232.5h0M159.5 236.5h0M168.5 236.5h0M180.5 238.5h0M185.5 240.5h0M174.5 243.5h0M186.5 244.5h0M168.5 245.5h0M173.5 245.5h0M175.5 245.5h0M170.5 247.5h0M171.5 251.5h0M181.5 253.5h0M192.5 269.5h0M201.5 271.5h0M181.5 277.5h0M182.5 278.5h0M184.5 278.5h0M202.5 278.5h0M210.5 281.5h0M203.5 282.5h0M207.5 283.5h0M182.5 284.5h0M187.5 284.5h0M196.5 285.5h0M189.5 288.5h0M212.5 288.5h0M149.5 290.5h0M186.5 290.5h0M183.5 291.5h0M187.5 293.5h0M212.5 293.5h0M278.5 296.5h0M225.5 298.5h0M227.5 298.5h0M232.5 299.5h0M222.5 302.5h0M225.5 307.5h0M351.5 308.5h0M232.5 315.5h0M385.5 316.5h0M279.5 317.5h0M284.5 317.5h0M390.5 318.5h0M287.5 321.5h0M383.5 321.5h0M270.5 322.5h0M379.5 322.5h0M387.5 322.5h0M232.5 324.5h0M276.5 324.5h0M391.5 324.5h0M391.5 325.5h0M384.5 326.5h0M311.5 331.5h0M305.5 333.5h0M233.5 335.5h0M378.5 336.5h0M378.5 338.5h0M379.5 340.5h0M372.5 347.5h0M306.5 361.5h0M307.5 363.5h0M158.5 368.5h0M121.5 373.5h0M122.5 374.5h0M115.5 375.5h0M317.5 380.5h0M152.5 400.5h0M305.5 402.5h0M140.5 408.5h0M321.5 409.5h0M283.5 412.5h0M290.5 415.5h0M286.5 443.5h0M354.5 444.5h0M285.5 446.5h0M343.5 451.5h0M346.5 451.5h0M347.5 452.5h0" stroke="#c86848" stroke-width="1.5" stroke-opacity="1.0" stroke-linecap="round" fill="none"/><path d="M376.5 123.5h0M251.5 135.5h0M348.5 135.5h0M253.5 139.5h0M359.5 140.5h0M230.5 143.5h0M374.5 143.5h0M231.5 146.5h0M249.5 150.5h0M356.5 150.5h0M184.5 171.5h0M180.5 172.5h0M180.5 177.5h0M197.5 181.5h0M201.5 184.5h0M415.5 187.5h0M412.5 188.5h0M404.5 197.5h0M190.5 204.5h0M168.5 225.5h0M182.5 234.5h0M186.5 248.5h0M189.5 274.5h0M185.5 286.5h0M204.5 288.5h0M182.5 293.5h0M208.5 297.5h0M185.5 298.5h0M277.5 321.5h0M386.5 323.5h0M233.5 334.5h0M312.5 335.5h0M310.5 340.5h0M321.5 362.5h0M292.5 394.5h0M292.5 462.5h0M343.5 465.5h0" stroke="#c86848" stroke-width="2.0" stroke-opacity="1.0" stroke-linecap="round" fill="none"/><path d="M378.5 123.5h0M251.5 125.5h0M376.5 125.5h0M257.5 126.5h0M242.5 129.5h0M347.5 130.5h0M264.5 131.5h0M332.5 132.5h0M348.5 132.5h0M346.5 133.5h0M236.5 135.5h0M363.5 135.5h0M233.5 136.5h0M339.5 136.5h0M247.5 137.5h0M340.5 137.5h0M349.5 137.5h0M266.5 138.5h0M261.5 139.5h0M338.5 140.5h0M381.5 140.5h0M237.5 141.5h0M377.5 142.5h0M233.5 143.5h0M381.5 143.5h0M370.5 145.5h0M230.5 146.5h0M374.5 146.5h0M232.5 149.5h0M355.5 149.5h0M280.5 152.5h0M243.5 154.5h0M289.5 159.5h0M281.5 160.5h0M342.5 168.5h0M185.5 171.5h0M189.5 174.5h0M371.5 175.5h0M178.5 177.5h0M385.5 182.5h0M406.5 184.5h0M383.5 185.5h0M344.5 186.5h0M408.5 188.5h0M418.5 189.5h0M401.5 190.5h0M403.5 192.5h0M186.5 197.5h0M188.5 204.5h0M161.5 219.5h0M163.5 222.5h0M159.5 223.5h0M170.5 227.5h0M164.5 230.5h0M168.5 230.5h0M164.5 233.5h0M179.5 233.5h0M180.5 233.5h0M185.5 236.5h0M165.5 241.5h0M188.5 244.5h0M189.5 244.5h0M185.5 246.5h0M224.5 246.5h0M168.5 247.5h0M204.5 275.5h0M193.5 280.5h0M195.5 280.5h0M201.5 282.5h0M203.5 284.5h0M212.5 284.5h0M186.5 288.5h0M192.5 288.5h0M202.5 289.5h0M208.5 291.5h0M183.5 293.5h0M222.5 296.5h0M188.5 297.5h0M207.5 299.5h0M285.5 315.5h0M286.5 315.5h0M391.5 315.5h0M278.5 317.5h0M286.5 317.5h0M387.5 318.5h0M383.5 322.5h0M395.5 324.5h0M387.5 326.5h0M309.5 340.5h0M311.5 340.5h0M316.5 407.5h0M291.5 411.5h0M317.5 413.5h0M308.5 432.5h0M344.5 452.5h0M345.5 453.5h0M314.5 461.5h0M340.5 465.5h0" stroke="#a08a78" stroke-width="1.0" stroke-opacity="1.0" stroke-linecap="round" fill="none"/><path d="M277.5 118.5h0M383.5 118.5h0M377.5 119.5h0M381.5 122.5h0M242.5 125.5h0M381.5 129.5h0M237.5 130.5h0M253.5 130.5h0M276.5 130.5h0M339.5 130.5h0M266.5 131.5h0M274.5 131.5h0M337.5 131.5h0M237.5 132.5h0M267.5 132.5h0M257.5 133.5h0M269.5 133.5h0M274.5 133.5h0M242.5 134.5h0M257.5 134.5h0M277.5 134.5h0M370.5 135.5h0M360.5 136.5h0M344.5 137.5h0M257.5 138.5h0M344.5 138.5h0M241.5 139.5h0M335.5 139.5h0M355.5 139.5h0M366.5 139.5h0M255.5 140.5h0M379.5 140.5h0M363.5 141.5h0M248.5 142.5h0M345.5 142.5h0M354.5 142.5h0M352.5 143.5h0M259.5 144.5h0M253.5 145.5h0M240.5 147.5h0M271.5 148.5h0M377.5 148.5h0M241.5 150.5h0M232.5 152.5h0M235.5 152.5h0M277.5 152.5h0M270.5 153.5h0M238.5 154.5h0M157.5 160.5h0M329.5 163.5h0M182.5 164.5h0M291.5 165.5h0M331.5 165.5h0M180.5 166.5h0M291.5 166.5h0M334.5 166.5h0M186.5 167.5h0M294.5 167.5h0M347.5 167.5h0M183.5 168.5h0M346.5 168.5h0M194.5 169.5h0M297.5 169.5h0M205.5 170.5h0M202.5 171.5h0M295.5 171.5h0M186.5 172.5h0M180.5 173.5h0M195.5 173.5h0M202.5 173.5h0M178.5 175.5h0M182.5 176.5h0M367.5 176.5h0M183.5 177.5h0M186.5 180.5h0M193.5 184.5h0M345.5 184.5h0M196.5 185.5h0M337.5 187.5h0M411.5 190.5h0M421.5 191.5h0M183.5 195.5h0M178.5 197.5h0M182.5 197.5h0M182.5 198.5h0M403.5 198.5h0M184.5 201.5h0M175.5 204.5h0M180.5 206.5h0M128.5 210.5h0M158.5 216.5h0M158.5 219.5h0M166.5 221.5h0M172.5 233.5h0M163.5 236.5h0M178.5 238.5h0M188.5 242.5h0M165.5 243.5h0M165.5 244.5h0M170.5 244.5h0M189.5 245.5h0M169.5 246.5h0M178.5 247.5h0M178.5 249.5h0M191.5 274.5h0M204.5 274.5h0M197.5 275.5h0M199.5 276.5h0M339.5 276.5h0M180.5 278.5h0M204.5 278.5h0M207.5 278.5h0M198.5 280.5h0M204.5 280.5h0M190.5 282.5h0M185.5 285.5h0M208.5 286.5h0M211.5 287.5h0M205.5 288.5h0M195.5 289.5h0M210.5 289.5h0M188.5 291.5h0M212.5 291.5h0M197.5 295.5h0M198.5 296.5h0M211.5 296.5h0M223.5 297.5h0M195.5 298.5h0M222.5 299.5h0M232.5 302.5h0M221.5 304.5h0M394.5 320.5h0M269.5 322.5h0M283.5 325.5h0M385.5 325.5h0M381.5 326.5h0M387.5 327.5h0M238.5 329.5h0M301.5 333.5h0M302.5 333.5h0M365.5 335.5h0M306.5 336.5h0M300.5 337.5h0M301.5 337.5h0M369.5 349.5h0M304.5 362.5h0M110.5 375.5h0M111.5 378.5h0M320.5 378.5h0M319.5 379.5h0M319.5 384.5h0M292.5 390.5h0M315.5 411.5h0M285.5 443.5h0M320.5 448.5h0M349.5 452.5h0M338.5 464.5h0" stroke="#a08a78" stroke-width="1.5" stroke-opacity="1.0" stroke-linecap="round" fill="none"/><path d="M280.5 121.5h0M256.5 132.5h0M338.5 133.5h0M344.5 133.5h0M266.5 139.5h0M373.5 140.5h0M341.5 141.5h0M344.5 141.5h0M359.5 141.5h0M364.5 145.5h0M371.5 146.5h0M238.5 148.5h0M373.5 148.5h0M365.5 149.5h0M248.5 155.5h0M283.5 159.5h0M291.5 161.5h0M179.5 165.5h0M349.5 169.5h0M300.5 170.5h0M201.5 173.5h0M200.5 175.5h0M153.5 178.5h0M199.5 184.5h0M411.5 189.5h0M414.5 189.5h0M409.5 190.5h0M182.5 194.5h0M418.5 194.5h0M182.5 207.5h0M159.5 218.5h0M153.5 222.5h0M168.5 223.5h0M161.5 228.5h0M167.5 229.5h0M181.5 244.5h0M183.5 245.5h0M180.5 246.5h0M203.5 283.5h0M183.5 286.5h0M184.5 292.5h0M276.5 318.5h0M235.5 320.5h0M285.5 320.5h0M394.5 322.5h0M281.5 324.5h0M237.5 325.5h0M309.5 339.5h0M306.5 343.5h0M308.5 363.5h0M325.5 364.5h0M111.5 375.5h0M317.5 381.5h0M309.5 405.5h0M285.5 411.5h0M317.5 414.5h0M341.5 421.5h0M352.5 441.5h0" stroke="#a08a78" stroke-width="2.0" stroke-opacity="1.0" stroke-linecap="round" fill="none"/><path d="M250.5 126.5h0M259.5 128.5h0M273.5 128.5h0M280.5 128.5h0M266.5 130.5h0M249.5 131.5h0M269.5 131.5h0M354.5 131.5h0M350.5 133.5h0M252.5 134.5h0M353.5 134.5h0M327.5 136.5h0M328.5 136.5h0M364.5 136.5h0M341.5 137.5h0M243.5 139.5h0M331.5 139.5h0M354.5 139.5h0M407.5 139.5h0M347.5 140.5h0M406.5 140.5h0M270.5 141.5h0M229.5 142.5h0M243.5 143.5h0M379.5 143.5h0M240.5 144.5h0M354.5 145.5h0M355.5 145.5h0M351.5 147.5h0M256.5 150.5h0M248.5 153.5h0M235.5 154.5h0M369.5 155.5h0M285.5 160.5h0M332.5 161.5h0M194.5 165.5h0M183.5 166.5h0M331.5 166.5h0M195.5 167.5h0M346.5 167.5h0M300.5 168.5h0M206.5 170.5h0M196.5 172.5h0M186.5 173.5h0M207.5 173.5h0M299.5 173.5h0M206.5 174.5h0M361.5 174.5h0M186.5 175.5h0M191.5 176.5h0M192.5 177.5h0M191.5 178.5h0M202.5 178.5h0M181.5 179.5h0M198.5 180.5h0M382.5 181.5h0M338.5 182.5h0M340.5 182.5h0M189.5 183.5h0M345.5 183.5h0M402.5 193.5h0M183.5 194.5h0M187.5 197.5h0M411.5 197.5h0M236.5 198.5h0M414.5 199.5h0M175.5 201.5h0M183.5 208.5h0M153.5 218.5h0M159.5 219.5h0M163.5 219.5h0M163.5 223.5h0M167.5 225.5h0M156.5 229.5h0M162.5 235.5h0M164.5 239.5h0M169.5 239.5h0M161.5 242.5h0M127.5 245.5h0M151.5 263.5h0M197.5 268.5h0M192.5 274.5h0M184.5 276.5h0M192.5 276.5h0M337.5 277.5h0M190.5 280.5h0M193.5 284.5h0M181.5 286.5h0M190.5 286.5h0M183.5 287.5h0M211.5 289.5h0M181.5 290.5h0M194.5 291.5h0M191.5 293.5h0M198.5 293.5h0M216.5 293.5h0M207.5 296.5h0M213.5 298.5h0M229.5 306.5h0M389.5 317.5h0M284.5 319.5h0M383.5 319.5h0M236.5 321.5h0M272.5 321.5h0M278.5 321.5h0M271.5 323.5h0M287.5 323.5h0M327.5 323.5h0M396.5 323.5h0M377.5 324.5h0M274.5 325.5h0M282.5 325.5h0M305.5 331.5h0M310.5 337.5h0M301.5 341.5h0M380.5 342.5h0M201.5 354.5h0M208.5 360.5h0M321.5 361.5h0M306.5 363.5h0M317.5 385.5h0M140.5 403.5h0M284.5 410.5h0M290.5 413.5h0M344.5 420.5h0M342.5 422.5h0M320.5 445.5h0M320.5 449.5h0M344.5 453.5h0M293.5 462.5h0M342.5 464.5h0" stroke="#d04c30" stroke-width="1.0" stroke-opacity="1.0" stroke-linecap="round" fill="none"/><path d="M249.5 123.5h0M254.5 124.5h0M280.5 124.5h0M271.5 125.5h0M255.5 127.5h0M250.5 129.5h0M259.5 129.5h0M278.5 131.5h0M272.5 132.5h0M341.5 132.5h0M353.5 132.5h0M354.5 132.5h0M355.5 132.5h0M324.5 133.5h0M325.5 133.5h0M326.5 133.5h0M245.5 134.5h0M266.5 134.5h0M368.5 134.5h0M256.5 135.5h0M264.5 135.5h0M267.5 135.5h0M364.5 135.5h0M373.5 135.5h0M350.5 136.5h0M377.5 136.5h0M231.5 137.5h0M243.5 137.5h0M246.5 137.5h0M251.5 137.5h0M256.5 137.5h0M274.5 137.5h0M361.5 137.5h0M235.5 138.5h0M248.5 138.5h0M265.5 138.5h0M363.5 138.5h0M334.5 140.5h0M350.5 140.5h0M229.5 141.5h0M233.5 142.5h0M342.5 142.5h0M237.5 143.5h0M255.5 143.5h0M358.5 143.5h0M378.5 144.5h0M347.5 145.5h0M238.5 146.5h0M239.5 146.5h0M363.5 146.5h0M350.5 147.5h0M360.5 147.5h0M374.5 148.5h0M268.5 150.5h0M361.5 150.5h0M271.5 152.5h0M238.5 153.5h0M367.5 153.5h0M368.5 153.5h0M200.5 155.5h0M364.5 156.5h0M290.5 160.5h0M289.5 162.5h0M191.5 163.5h0M194.5 163.5h0M193.5 164.5h0M328.5 164.5h0M182.5 165.5h0M343.5 165.5h0M201.5 167.5h0M297.5 167.5h0M351.5 167.5h0M182.5 171.5h0M187.5 171.5h0M201.5 171.5h0M300.5 172.5h0M355.5 172.5h0M206.5 173.5h0M183.5 174.5h0M201.5 174.5h0M209.5 174.5h0M369.5 175.5h0M204.5 178.5h0M193.5 179.5h0M366.5 179.5h0M187.5 180.5h0M342.5 180.5h0M188.5 181.5h0M342.5 181.5h0M337.5 183.5h0M338.5 183.5h0M384.5 184.5h0M412.5 184.5h0M345.5 186.5h0M415.5 186.5h0M341.5 188.5h0M407.5 188.5h0M416.5 192.5h0M414.5 195.5h0M182.5 196.5h0M185.5 198.5h0M420.5 198.5h0M415.5 199.5h0M181.5 200.5h0M186.5 200.5h0M419.5 200.5h0M181.5 201.5h0M189.5 203.5h0M185.5 207.5h0M181.5 208.5h0M152.5 222.5h0M168.5 222.5h0M166.5 226.5h0M161.5 227.5h0M158.5 228.5h0M166.5 229.5h0M153.5 230.5h0M158.5 230.5h0M154.5 231.5h0M181.5 232.5h0M163.5 233.5h0M182.5 233.5h0M181.5 237.5h0M165.5 238.5h0M176.5 238.5h0M168.5 240.5h0M163.5 244.5h0M171.5 244.5h0M224.5 247.5h0M182.5 252.5h0M189.5 269.5h0M194.5 270.5h0M198.5 271.5h0M183.5 275.5h0M189.5 275.5h0M191.5 275.5h0M189.5 277.5h0M203.5 277.5h0M195.5 278.5h0M182.5 279.5h0M183.5 280.5h0M196.5 280.5h0M185.5 284.5h0M199.5 284.5h0M186.5 287.5h0M184.5 288.5h0M193.5 289.5h0M213.5 289.5h0M195.5 292.5h0M203.5 292.5h0M197.5 293.5h0M202.5 294.5h0M201.5 296.5h0M189.5 297.5h0M214.5 297.5h0M229.5 297.5h0M221.5 298.5h0M187.5 299.5h0M227.5 300.5h0M227.5 301.5h0M225.5 306.5h0M394.5 314.5h0M283.5 315.5h0M386.5 317.5h0M397.5 318.5h0M392.5 320.5h0M281.5 323.5h0M387.5 323.5h0M381.5 324.5h0M279.5 325.5h0M380.5 326.5h0M234.5 327.5h0M385.5 327.5h0M306.5 330.5h0M311.5 335.5h0M382.5 341.5h0M379.5 342.5h0M305.5 360.5h0M321.5 360.5h0M308.5 361.5h0M322.5 364.5h0M324.5 365.5h0M157.5 369.5h0M114.5 370.5h0M113.5 371.5h0M344.5 377.5h0M104.5 395.5h0M307.5 403.5h0M145.5 404.5h0M283.5 411.5h0M307.5 432.5h0M351.5 443.5h0M352.5 444.5h0M292.5 463.5h0" stroke="#d04c30" stroke-width="1.5" stroke-opacity="1.0" stroke-linecap="round" fill="none"/><path d="M387.5 124.5h0M278.5 130.5h0M360.5 131.5h0M361.5 131.5h0M256.5 133.5h0M246.5 135.5h0M269.5 138.5h0M246.5 144.5h0M380.5 144.5h0M261.5 145.5h0M243.5 148.5h0M267.5 148.5h0M251.5 152.5h0M276.5 155.5h0M198.5 164.5h0M292.5 168.5h0M183.5 170.5h0M354.5 171.5h0M181.5 174.5h0M210.5 174.5h0M198.5 176.5h0M189.5 178.5h0M195.5 179.5h0M178.5 193.5h0M419.5 194.5h0M186.5 195.5h0M413.5 195.5h0M411.5 202.5h0M160.5 216.5h0M172.5 223.5h0M162.5 224.5h0M163.5 227.5h0M157.5 229.5h0M161.5 232.5h0M169.5 234.5h0M174.5 237.5h0M174.5 240.5h0M171.5 249.5h0M195.5 270.5h0M199.5 270.5h0M194.5 272.5h0M196.5 274.5h0M187.5 280.5h0M182.5 289.5h0M196.5 291.5h0M198.5 291.5h0M209.5 293.5h0M230.5 297.5h0M269.5 321.5h0M280.5 322.5h0M283.5 324.5h0M382.5 326.5h0M235.5 334.5h0M312.5 334.5h0M309.5 335.5h0M289.5 385.5h0M290.5 386.5h0M102.5 396.5h0M153.5 403.5h0M289.5 409.5h0M316.5 412.5h0M342.5 423.5h0M312.5 430.5h0M286.5 445.5h0" stroke="#d04c30" stroke-width="2.0" stroke-opacity="1.0" stroke-linecap="round" fill="none"/><path d="M273.5 125.5h0M245.5 126.5h0M249.5 126.5h0M270.5 126.5h0M250.5 130.5h0M340.5 130.5h0M330.5 131.5h0M233.5 133.5h0M329.5 133.5h0M349.5 133.5h0M351.5 135.5h0M340.5 136.5h0M333.5 138.5h0M362.5 138.5h0M229.5 140.5h0M234.5 140.5h0M340.5 140.5h0M372.5 140.5h0M242.5 141.5h0M254.5 141.5h0M255.5 141.5h0M381.5 141.5h0M241.5 142.5h0M250.5 142.5h0M374.5 142.5h0M254.5 144.5h0M246.5 145.5h0M254.5 145.5h0M364.5 146.5h0M378.5 146.5h0M232.5 148.5h0M251.5 151.5h0M281.5 157.5h0M283.5 157.5h0M156.5 158.5h0M290.5 162.5h0M329.5 162.5h0M189.5 163.5h0M179.5 164.5h0M181.5 165.5h0M329.5 165.5h0M289.5 167.5h0M187.5 170.5h0M194.5 172.5h0M204.5 175.5h0M188.5 176.5h0M203.5 176.5h0M179.5 178.5h0M186.5 178.5h0M149.5 180.5h0M368.5 180.5h0M370.5 180.5h0M200.5 184.5h0M345.5 187.5h0M404.5 189.5h0M415.5 189.5h0M412.5 191.5h0M182.5 193.5h0M416.5 196.5h0M175.5 200.5h0M166.5 220.5h0M152.5 224.5h0M164.5 224.5h0M161.5 226.5h0M174.5 239.5h0M176.5 245.5h0M182.5 275.5h0M193.5 277.5h0M180.5 280.5h0M203.5 280.5h0M196.5 281.5h0M199.5 282.5h0M201.5 283.5h0M193.5 286.5h0M198.5 288.5h0M191.5 290.5h0M199.5 290.5h0M195.5 291.5h0M216.5 291.5h0M202.5 292.5h0M215.5 294.5h0M229.5 295.5h0M183.5 296.5h0M392.5 315.5h0M281.5 316.5h0M281.5 322.5h0M381.5 327.5h0M238.5 330.5h0M234.5 334.5h0M306.5 335.5h0M301.5 340.5h0M373.5 348.5h0M200.5 353.5h0M111.5 377.5h0M290.5 390.5h0M105.5 396.5h0M288.5 411.5h0M291.5 413.5h0M290.5 414.5h0M357.5 444.5h0M352.5 445.5h0M343.5 454.5h0M344.5 454.5h0M290.5 464.5h0" stroke="#b09080" stroke-width="1.0" stroke-opacity="1.0" stroke-linecap="round" fill="none"/><path d="M273.5 119.5h0M271.5 121.5h0M382.5 124.5h0M257.5 127.5h0M250.5 128.5h0M269.5 128.5h0M380.5 129.5h0M343.5 131.5h0M367.5 133.5h0M254.5 134.5h0M270.5 134.5h0M359.5 134.5h0M356.5 136.5h0M371.5 136.5h0M340.5 138.5h0M378.5 138.5h0M246.5 139.5h0M273.5 139.5h0M240.5 140.5h0M266.5 140.5h0M364.5 140.5h0M255.5 142.5h0M355.5 142.5h0M250.5 144.5h0M354.5 144.5h0M368.5 144.5h0M245.5 145.5h0M248.5 145.5h0M367.5 145.5h0M368.5 145.5h0M377.5 145.5h0M233.5 146.5h0M258.5 146.5h0M375.5 146.5h0M253.5 147.5h0M371.5 148.5h0M363.5 149.5h0M236.5 152.5h0M247.5 154.5h0M281.5 155.5h0M366.5 155.5h0M368.5 155.5h0M279.5 157.5h0M289.5 163.5h0M290.5 163.5h0M282.5 164.5h0M289.5 164.5h0M288.5 167.5h0M292.5 167.5h0M345.5 167.5h0M198.5 168.5h0M184.5 170.5h0M197.5 170.5h0M347.5 170.5h0M350.5 170.5h0M345.5 171.5h0M348.5 171.5h0M211.5 174.5h0M349.5 174.5h0M191.5 177.5h0M364.5 179.5h0M152.5 180.5h0M184.5 181.5h0M193.5 183.5h0M343.5 183.5h0M196.5 184.5h0M380.5 184.5h0M405.5 185.5h0M403.5 188.5h0M406.5 190.5h0M418.5 190.5h0M404.5 193.5h0M420.5 193.5h0M415.5 197.5h0M419.5 198.5h0M411.5 199.5h0M186.5 201.5h0M183.5 203.5h0M152.5 221.5h0M162.5 227.5h0M165.5 232.5h0M177.5 237.5h0M187.5 239.5h0M160.5 240.5h0M183.5 240.5h0M160.5 241.5h0M181.5 242.5h0M167.5 243.5h0M182.5 243.5h0M184.5 243.5h0M188.5 243.5h0M175.5 244.5h0M171.5 246.5h0M183.5 250.5h0M179.5 252.5h0M180.5 252.5h0M201.5 274.5h0M199.5 275.5h0M191.5 276.5h0M196.5 276.5h0M191.5 277.5h0M185.5 279.5h0M195.5 279.5h0M206.5 279.5h0M207.5 281.5h0M196.5 282.5h0M199.5 285.5h0M200.5 285.5h0M149.5 288.5h0M181.5 288.5h0M211.5 290.5h0M180.5 292.5h0M184.5 297.5h0M197.5 299.5h0M225.5 299.5h0M230.5 299.5h0M229.5 300.5h0M230.5 306.5h0M392.5 314.5h0M394.5 317.5h0M271.5 318.5h0M397.5 320.5h0M385.5 321.5h0M271.5 322.5h0M286.5 322.5h0M382.5 323.5h0M387.5 324.5h0M285.5 325.5h0M233.5 326.5h0M301.5 332.5h0M300.5 333.5h0M312.5 333.5h0M311.5 334.5h0M310.5 335.5h0M234.5 337.5h0M382.5 340.5h0M111.5 376.5h0M318.5 376.5h0M106.5 377.5h0M114.5 378.5h0M320.5 385.5h0M290.5 392.5h0M292.5 393.5h0M291.5 394.5h0M141.5 402.5h0M143.5 405.5h0M146.5 406.5h0M317.5 412.5h0M285.5 441.5h0M283.5 442.5h0M352.5 442.5h0M356.5 443.5h0M344.5 448.5h0M347.5 450.5h0M291.5 462.5h0" stroke="#b09080" stroke-width="1.5" stroke-opacity="1.0" stroke-linecap="round" fill="none"/><path d="M271.5 122.5h0M248.5 129.5h0M235.5 132.5h0M269.5 132.5h0M361.5 132.5h0M362.5 132.5h0M244.5 133.5h0M267.5 134.5h0M345.5 134.5h0M240.5 137.5h0M232.5 138.5h0M365.5 141.5h0M369.5 142.5h0M362.5 143.5h0M348.5 144.5h0M252.5 145.5h0M229.5 146.5h0M256.5 146.5h0M247.5 147.5h0M248.5 151.5h0M242.5 152.5h0M248.5 152.5h0M240.5 153.5h0M274.5 154.5h0M369.5 154.5h0M290.5 161.5h0M323.5 161.5h0M328.5 165.5h0M212.5 172.5h0M344.5 172.5h0M183.5 176.5h0M199.5 178.5h0M339.5 189.5h0M405.5 194.5h0M180.5 205.5h0M160.5 220.5h0M160.5 224.5h0M186.5 239.5h0M165.5 240.5h0M168.5 242.5h0M224.5 244.5h0M183.5 252.5h0M194.5 286.5h0M207.5 297.5h0M399.5 316.5h0M233.5 320.5h0M384.5 324.5h0M237.5 332.5h0M311.5 336.5h0M380.5 341.5h0M108.5 377.5h0M288.5 387.5h0M103.5 393.5h0M154.5 401.5h0M141.5 403.5h0M314.5 411.5h0M343.5 464.5h0" stroke="#b09080" stroke-width="2.0" stroke-opacity="1.0" stroke-linecap="round" fill="none"/></g>
<path d="M194.6 84.6 L436.3 118.9 M194.6 84.6 L69.7 192.4 M69.7 192.4 L366.9 248 M436.3 118.9 L366.9 248 M69.7 192.4 L100.4 419.5 M366.9 248 L348.5 484 M436.3 118.9 L411 330.6 M100.4 419.5 L348.5 484 M348.5 484 L411 330.6" stroke="#9a9a9a" stroke-width="0.8" fill="none"/>
<rect x="44.00" y="484.75" width="6.87" height="11.75" fill="rgb(0, 22, 227)" shape-rendering="crispEdges"/>
<rect x="50.27" y="484.75" width="6.87" height="11.75" fill="rgb(0, 35, 233)" shape-rendering="crispEdges"/>
<rect x="56.53" y="484.75" width="6.87" height="11.75" fill="rgb(0, 47, 240)" shape-rendering="crispEdges"/>
<rect x="62.80" y="484.75" width="6.87" height="11.75" fill="rgb(0, 54, 240)" shape-rendering="crispEdges"/>
<rect x="69.06" y="484.75" width="6.87" height="11.75" fill="rgb(0, 61, 240)" shape-rendering="crispEdges"/>
<rect x="75.33" y="484.75" width="6.87" height="11.75" fill="rgb(0, 67, 240)" shape-rendering="crispEdges"/>
<rect x="81.59" y="484.75" width="6.87" height="11.75" fill="rgb(0, 74, 240)" shape-rendering="crispEdges"/>
<rect x="87.86" y="484.75" width="6.87" height="11.75" fill="rgb(0, 80, 240)" shape-rendering="crispEdges"/>
<rect x="94.12" y="484.75" width="6.87" height="11.75" fill="rgb(0, 86, 239)" shape-rendering="crispEdges"/>
<rect x="100.39" y="484.75" width="6.87" height="11.75" fill="rgb(0, 92, 238)" shape-rendering="crispEdges"/>
<rect x="106.66" y="484.75" width="6.87" height="11.75" fill="rgb(0, 98, 237)" shape-rendering="crispEdges"/>
<rect x="112.92" y="484.75" width="6.87" height="11.75" fill="rgb(0, 104, 236)" shape-rendering="crispEdges"/>
<rect x="119.19" y="484.75" width="6.87" height="11.75" fill="rgb(0, 110, 235)" shape-rendering="crispEdges"/>
<rect x="125.45" y="484.75" width="6.87" height="11.75" fill="rgb(0, 116, 234)" shape-rendering="crispEdges"/>
<rect x="131.72" y="484.75" width="6.87" height="11.75" fill="rgb(0, 121, 233)" shape-rendering="crispEdges"/>
<rect x="137.98" y="484.75" width="6.87" height="11.75" fill="rgb(0, 127, 232)" shape-rendering="crispEdges"/>
<rect x="144.25" y="484.75" width="6.87" height="11.75" fill="rgb(0, 132, 231)" shape-rendering="crispEdges"/>
<rect x="150.52" y="484.75" width="6.87" height="11.75" fill="rgb(0, 137, 230)" shape-rendering="crispEdges"/>
<rect x="156.78" y="484.75" width="6.87" height="11.75" fill="rgb(0, 142, 229)" shape-rendering="crispEdges"/>
<rect x="163.05" y="484.75" width="6.87" height="11.75" fill="rgb(0, 147, 228)" shape-rendering="crispEdges"/>
<rect x="169.31" y="484.75" width="6.87" height="11.75" fill="rgb(0, 151, 227)" shape-rendering="crispEdges"/>
<rect x="175.58" y="484.75" width="6.87" height="11.75" fill="rgb(0, 156, 226)" shape-rendering="crispEdges"/>
<rect x="181.84" y="484.75" width="6.87" height="11.75" fill="rgb(0, 161, 225)" shape-rendering="crispEdges"/>
<rect x="188.11" y="484.75" width="6.87" height="11.75" fill="rgb(0, 166, 224)" shape-rendering="crispEdges"/>
<rect x="194.38" y="484.75" width="6.87" height="11.75" fill="rgb(0, 170, 224)" shape-rendering="crispEdges"/>
<rect x="200.64" y="484.75" width="6.87" height="11.75" fill="rgb(0, 173, 223)" shape-rendering="crispEdges"/>
<rect x="206.91" y="484.75" width="6.87" height="11.75" fill="rgb(0, 176, 223)" shape-rendering="crispEdges"/>
<rect x="213.17" y="484.75" width="6.87" height="11.75" fill="rgb(0, 179, 222)" shape-rendering="crispEdges"/>
<rect x="219.44" y="484.75" width="6.87" height="11.75" fill="rgb(0, 182, 222)" shape-rendering="crispEdges"/>
<rect x="225.70" y="484.75" width="6.87" height="11.75" fill="rgb(0, 185, 221)" shape-rendering="crispEdges"/>
<rect x="231.97" y="484.75" width="6.87" height="11.75" fill="rgb(0, 188, 221)" shape-rendering="crispEdges"/>
<rect x="238.23" y="484.75" width="6.87" height="11.75" fill="rgb(0, 191, 220)" shape-rendering="crispEdges"/>
<rect x="244.50" y="484.75" width="6.87" height="11.75" fill="rgb(0, 193, 220)" shape-rendering="crispEdges"/>
<rect x="250.77" y="484.75" width="6.87" height="11.75" fill="rgb(0, 194, 220)" shape-rendering="crispEdges"/>
<rect x="257.03" y="484.75" width="6.87" height="11.75" fill="rgb(0, 196, 220)" shape-rendering="crispEdges"/>
<rect x="263.30" y="484.75" width="6.87" height="11.75" fill="rgb(0, 197, 220)" shape-rendering="crispEdges"/>
<rect x="269.56" y="484.75" width="6.87" height="11.75" fill="rgb(0, 198, 220)" shape-rendering="crispEdges"/>
<rect x="275.83" y="484.75" width="6.87" height="11.75" fill="rgb(0, 200, 220)" shape-rendering="crispEdges"/>
<rect x="282.09" y="484.75" width="6.87" height="11.75" fill="rgb(0, 201, 220)" shape-rendering="crispEdges"/>
<rect x="288.36" y="484.75" width="6.87" height="11.75" fill="rgb(0, 203, 220)" shape-rendering="crispEdges"/>
<rect x="294.62" y="484.75" width="6.87" height="11.75" fill="rgb(0, 204, 220)" shape-rendering="crispEdges"/>
<rect x="300.89" y="484.75" width="6.87" height="11.75" fill="rgb(0, 206, 219)" shape-rendering="crispEdges"/>
<rect x="307.16" y="484.75" width="6.87" height="11.75" fill="rgb(0, 207, 219)" shape-rendering="crispEdges"/>
<rect x="313.42" y="484.75" width="6.87" height="11.75" fill="rgb(0, 209, 218)" shape-rendering="crispEdges"/>
<rect x="319.69" y="484.75" width="6.87" height="11.75" fill="rgb(0, 210, 218)" shape-rendering="crispEdges"/>
<rect x="325.95" y="484.75" width="6.87" height="11.75" fill="rgb(0, 212, 217)" shape-rendering="crispEdges"/>
<rect x="332.22" y="484.75" width="6.87" height="11.75" fill="rgb(0, 213, 217)" shape-rendering="crispEdges"/>
<rect x="338.48" y="484.75" width="6.87" height="11.75" fill="rgb(0, 215, 216)" shape-rendering="crispEdges"/>
<rect x="344.75" y="484.75" width="6.87" height="11.75" fill="rgb(0, 216, 216)" shape-rendering="crispEdges"/>
<rect x="351.02" y="484.75" width="6.87" height="11.75" fill="rgb(0, 217, 215)" shape-rendering="crispEdges"/>
<rect x="357.28" y="484.75" width="6.87" height="11.75" fill="rgb(0, 218, 214)" shape-rendering="crispEdges"/>
<rect x="363.55" y="484.75" width="6.87" height="11.75" fill="rgb(0, 219, 213)" shape-rendering="crispEdges"/>
<rect x="369.81" y="484.75" width="6.87" height="11.75" fill="rgb(0, 220, 212)" shape-rendering="crispEdges"/>
<rect x="376.08" y="484.75" width="6.87" height="11.75" fill="rgb(0, 221, 211)" shape-rendering="crispEdges"/>
<rect x="382.34" y="484.75" width="6.87" height="11.75" fill="rgb(0, 222, 210)" shape-rendering="crispEdges"/>
<rect x="388.61" y="484.75" width="6.87" height="11.75" fill="rgb(0, 223, 209)" shape-rendering="crispEdges"/>
<rect x="394.88" y="484.75" width="6.87" height="11.75" fill="rgb(0, 224, 208)" shape-rendering="crispEdges"/>
<rect x="401.14" y="484.75" width="6.87" height="11.75" fill="rgb(0, 225, 206)" shape-rendering="crispEdges"/>
<rect x="407.41" y="484.75" width="6.87" height="11.75" fill="rgb(0, 226, 203)" shape-rendering="crispEdges"/>
<rect x="413.67" y="484.75" width="6.87" height="11.75" fill="rgb(0, 227, 201)" shape-rendering="crispEdges"/>
<rect x="419.94" y="484.75" width="6.87" height="11.75" fill="rgb(0, 228, 199)" shape-rendering="crispEdges"/>
<rect x="426.20" y="484.75" width="6.87" height="11.75" fill="rgb(0, 229, 197)" shape-rendering="crispEdges"/>
<rect x="432.47" y="484.75" width="6.87" height="11.75" fill="rgb(0, 230, 195)" shape-rendering="crispEdges"/>
<rect x="438.73" y="484.75" width="6.87" height="11.75" fill="rgb(0, 231, 193)" shape-rendering="crispEdges"/>
<rect x="44.00" y="523.75" width="6.87" height="11.25" fill="rgb(26, 13, 243)" shape-rendering="crispEdges"/>
<rect x="50.27" y="523.75" width="6.87" height="11.25" fill="rgb(13, 7, 249)" shape-rendering="crispEdges"/>
<rect x="56.53" y="523.75" width="6.87" height="11.25" fill="rgb(1, 0, 255)" shape-rendering="crispEdges"/>
<rect x="62.80" y="523.75" width="6.87" height="11.25" fill="rgb(0, 9, 255)" shape-rendering="crispEdges"/>
<rect x="69.06" y="523.75" width="6.87" height="11.25" fill="rgb(0, 18, 255)" shape-rendering="crispEdges"/>
<rect x="75.33" y="523.75" width="6.87" height="11.25" fill="rgb(0, 28, 255)" shape-rendering="crispEdges"/>
<rect x="81.59" y="523.75" width="6.87" height="11.25" fill="rgb(0, 37, 255)" shape-rendering="crispEdges"/>
<rect x="87.86" y="523.75" width="6.87" height="11.25" fill="rgb(0, 46, 255)" shape-rendering="crispEdges"/>
<rect x="94.12" y="523.75" width="6.87" height="11.25" fill="rgb(0, 65, 255)" shape-rendering="crispEdges"/>
<rect x="100.39" y="523.75" width="6.87" height="11.25" fill="rgb(0, 86, 255)" shape-rendering="crispEdges"/>
<rect x="106.66" y="523.75" width="6.87" height="11.25" fill="rgb(0, 107, 255)" shape-rendering="crispEdges"/>
<rect x="112.92" y="523.75" width="6.87" height="11.25" fill="rgb(0, 128, 255)" shape-rendering="crispEdges"/>
<rect x="119.19" y="523.75" width="6.87" height="11.25" fill="rgb(0, 149, 255)" shape-rendering="crispEdges"/>
<rect x="125.45" y="523.75" width="6.87" height="11.25" fill="rgb(0, 170, 255)" shape-rendering="crispEdges"/>
<rect x="131.72" y="523.75" width="6.87" height="11.25" fill="rgb(0, 191, 255)" shape-rendering="crispEdges"/>
<rect x="137.98" y="523.75" width="6.87" height="11.25" fill="rgb(0, 212, 255)" shape-rendering="crispEdges"/>
<rect x="144.25" y="523.75" width="6.87" height="11.25" fill="rgb(0, 226, 255)" shape-rendering="crispEdges"/>
<rect x="150.52" y="523.75" width="6.87" height="11.25" fill="rgb(0, 237, 255)" shape-rendering="crispEdges"/>
<rect x="156.78" y="523.75" width="6.87" height="11.25" fill="rgb(0, 249, 255)" shape-rendering="crispEdges"/>
<rect x="163.05" y="523.75" width="6.87" height="11.25" fill="rgb(0, 255, 249)" shape-rendering="crispEdges"/>
<rect x="169.31" y="523.75" width="6.87" height="11.25" fill="rgb(0, 255, 236)" shape-rendering="crispEdges"/>
<rect x="175.58" y="523.75" width="6.87" height="11.25" fill="rgb(0, 255, 223)" shape-rendering="crispEdges"/>
<rect x="181.84" y="523.75" width="6.87" height="11.25" fill="rgb(0, 255, 210)" shape-rendering="crispEdges"/>
<rect x="188.11" y="523.75" width="6.87" height="11.25" fill="rgb(0, 255, 198)" shape-rendering="crispEdges"/>
<rect x="194.38" y="523.75" width="6.87" height="11.25" fill="rgb(0, 255, 179)" shape-rendering="crispEdges"/>
<rect x="200.64" y="523.75" width="6.87" height="11.25" fill="rgb(0, 255, 155)" shape-rendering="crispEdges"/>
<rect x="206.91" y="523.75" width="6.87" height="11.25" fill="rgb(0, 255, 131)" shape-rendering="crispEdges"/>
<rect x="213.17" y="523.75" width="6.87" height="11.25" fill="rgb(0, 255, 107)" shape-rendering="crispEdges"/>
<rect x="219.44" y="523.75" width="6.87" height="11.25" fill="rgb(0, 255, 83)" shape-rendering="crispEdges"/>
<rect x="225.70" y="523.75" width="6.87" height="11.25" fill="rgb(0, 255, 60)" shape-rendering="crispEdges"/>
<rect x="231.97" y="523.75" width="6.87" height="11.25" fill="rgb(0, 255, 36)" shape-rendering="crispEdges"/>
<rect x="238.23" y="523.75" width="6.87" height="11.25" fill="rgb(0, 255, 12)" shape-rendering="crispEdges"/>
<rect x="244.50" y="523.75" width="6.87" height="11.25" fill="rgb(12, 255, 7)" shape-rendering="crispEdges"/>
<rect x="250.77" y="523.75" width="6.87" height="11.25" fill="rgb(26, 255, 5)" shape-rendering="crispEdges"/>
<rect x="257.03" y="523.75" width="6.87" height="11.25" fill="rgb(40, 255, 3)" shape-rendering="crispEdges"/>
<rect x="263.30" y="523.75" width="6.87" height="11.25" fill="rgb(55, 255, 1)" shape-rendering="crispEdges"/>
<rect x="269.56" y="523.75" width="6.87" height="11.25" fill="rgb(71, 255, 0)" shape-rendering="crispEdges"/>
<rect x="275.83" y="523.75" width="6.87" height="11.25" fill="rgb(90, 255, 0)" shape-rendering="crispEdges"/>
<rect x="282.09" y="523.75" width="6.87" height="11.25" fill="rgb(109, 255, 0)" shape-rendering="crispEdges"/>
<rect x="288.36" y="523.75" width="6.87" height="11.25" fill="rgb(128, 255, 0)" shape-rendering="crispEdges"/>
<rect x="294.62" y="523.75" width="6.87" height="11.25" fill="rgb(147, 255, 0)" shape-rendering="crispEdges"/>
<rect x="300.89" y="523.75" width="6.87" height="11.25" fill="rgb(163, 255, 0)" shape-rendering="crispEdges"/>
<rect x="307.16" y="523.75" width="6.87" height="11.25" fill="rgb(179, 255, 0)" shape-rendering="crispEdges"/>
<rect x="313.42" y="523.75" width="6.87" height="11.25" fill="rgb(194, 255, 0)" shape-rendering="crispEdges"/>
<rect x="319.69" y="523.75" width="6.87" height="11.25" fill="rgb(210, 255, 0)" shape-rendering="crispEdges"/>
<rect x="325.95" y="523.75" width="6.87" height="11.25" fill="rgb(225, 255, 0)" shape-rendering="crispEdges"/>
<rect x="332.22" y="523.75" width="6.87" height="11.25" fill="rgb(240, 255, 0)" shape-rendering="crispEdges"/>
<rect x="338.48" y="523.75" width="6.87" height="11.25" fill="rgb(254, 255, 0)" shape-rendering="crispEdges"/>
<rect x="344.75" y="523.75" width="6.87" height="11.25" fill="rgb(255, 244, 0)" shape-rendering="crispEdges"/>
<rect x="351.02" y="523.75" width="6.87" height="11.25" fill="rgb(255, 233, 0)" shape-rendering="crispEdges"/>
<rect x="357.28" y="523.75" width="6.87" height="11.25" fill="rgb(255, 222, 0)" shape-rendering="crispEdges"/>
<rect x="363.55" y="523.75" width="6.87" height="11.25" fill="rgb(255, 210, 0)" shape-rendering="crispEdges"/>
<rect x="369.81" y="523.75" width="6.87" height="11.25" fill="rgb(255, 196, 0)" shape-rendering="crispEdges"/>
<rect x="376.08" y="523.75" width="6.87" height="11.25" fill="rgb(255, 180, 0)" shape-rendering="crispEdges"/>
<rect x="382.34" y="523.75" width="6.87" height="11.25" fill="rgb(255, 165, 0)" shape-rendering="crispEdges"/>
<rect x="388.61" y="523.75" width="6.87" height="11.25" fill="rgb(255, 150, 0)" shape-rendering="crispEdges"/>
<rect x="394.88" y="523.75" width="6.87" height="11.25" fill="rgb(255, 131, 0)" shape-rendering="crispEdges"/>
<rect x="401.14" y="523.75" width="6.87" height="11.25" fill="rgb(255, 111, 0)" shape-rendering="crispEdges"/>
<rect x="407.41" y="523.75" width="6.87" height="11.25" fill="rgb(255, 91, 0)" shape-rendering="crispEdges"/>
<rect x="413.67" y="523.75" width="6.87" height="11.25" fill="rgb(255, 71, 0)" shape-rendering="crispEdges"/>
<rect x="419.94" y="523.75" width="6.87" height="11.25" fill="rgb(255, 54, 0)" shape-rendering="crispEdges"/>
<rect x="426.20" y="523.75" width="6.87" height="11.25" fill="rgb(255, 38, 0)" shape-rendering="crispEdges"/>
<rect x="432.47" y="523.75" width="6.87" height="11.25" fill="rgb(255, 23, 0)" shape-rendering="crispEdges"/>
<rect x="438.73" y="523.75" width="6.87" height="11.25" fill="rgb(255, 8, 0)" shape-rendering="crispEdges"/>
<text x="35.8" y="483.3" font-family='"Liberation Sans", sans-serif' font-size="7.6" font-style="italic" fill="#fff" stroke="#fff" stroke-width="0.25">12.0</text>
<text x="91.9" y="483.3" font-family='"Liberation Sans", sans-serif' font-size="7.6" font-style="italic" fill="#fff" stroke="#fff" stroke-width="0.25">235.</text>
<text x="149.4" y="483.3" font-family='"Liberation Sans", sans-serif' font-size="7.6" font-style="italic" fill="#fff" stroke="#fff" stroke-width="0.25">459.</text>
<text x="206.9" y="483.3" font-family='"Liberation Sans", sans-serif' font-size="7.6" font-style="italic" fill="#fff" stroke="#fff" stroke-width="0.25">682.</text>
<text x="264.4" y="483.3" font-family='"Liberation Sans", sans-serif' font-size="7.6" font-style="italic" fill="#fff" stroke="#fff" stroke-width="0.25">906.</text>
<text x="315.3" y="483.3" font-family='"Liberation Sans", sans-serif' font-size="7.6" font-style="italic" fill="#fff" stroke="#fff" stroke-width="0.25">1.13e+03</text>
<text x="372.8" y="483.3" font-family='"Liberation Sans", sans-serif' font-size="7.6" font-style="italic" fill="#fff" stroke="#fff" stroke-width="0.25">1.35e+03</text>
<text x="430.3" y="483.3" font-family='"Liberation Sans", sans-serif' font-size="7.6" font-style="italic" fill="#fff" stroke="#fff" stroke-width="0.25">1.58e+03</text>
<text x="35.8" y="522.2" font-family='"Liberation Sans", sans-serif' font-size="7.6" font-style="italic" fill="#fff" stroke="#fff" stroke-width="0.25">100.</text>
<text x="80.4" y="522.2" font-family='"Liberation Sans", sans-serif' font-size="7.6" font-style="italic" fill="#fff" stroke="#fff" stroke-width="0.25">133.</text>
<text x="125" y="522.2" font-family='"Liberation Sans", sans-serif' font-size="7.6" font-style="italic" fill="#fff" stroke="#fff" stroke-width="0.25">167.</text>
<text x="169" y="522.2" font-family='"Liberation Sans", sans-serif' font-size="7.6" font-style="italic" fill="#fff" stroke="#fff" stroke-width="0.25">200.</text>
<text x="212.6" y="522.2" font-family='"Liberation Sans", sans-serif' font-size="7.6" font-style="italic" fill="#fff" stroke="#fff" stroke-width="0.25">233.</text>
<text x="257.8" y="522.2" font-family='"Liberation Sans", sans-serif' font-size="7.6" font-style="italic" fill="#fff" stroke="#fff" stroke-width="0.25">267.</text>
<text x="301.8" y="522.2" font-family='"Liberation Sans", sans-serif' font-size="7.6" font-style="italic" fill="#fff" stroke="#fff" stroke-width="0.25">300.</text>
<text x="346.4" y="522.2" font-family='"Liberation Sans", sans-serif' font-size="7.6" font-style="italic" fill="#fff" stroke="#fff" stroke-width="0.25">333.</text>
<text x="391" y="522.2" font-family='"Liberation Sans", sans-serif' font-size="7.6" font-style="italic" fill="#fff" stroke="#fff" stroke-width="0.25">367.</text>
<text x="435.5" y="522.2" font-family='"Liberation Sans", sans-serif' font-size="7.6" font-style="italic" fill="#fff" stroke="#fff" stroke-width="0.25">400.</text>
<text x="208.3" y="475.8" font-family='"Liberation Sans", sans-serif' font-size="8.6" fill="#e8e8e8">Velocity Magnitude</text>
<text x="227.6" y="514.6" font-family='"Liberation Sans", sans-serif' font-size="8.6" fill="#e8e8e8">Iso-Value</text>
</svg>
<svg class="a" style="left:470px;top:61px" width="325" height="486" viewBox="470 61 325 486">
<rect x="478" y="68" width="310" height="452.5" fill="#bfbfbf"/>
<rect x="515.7" y="112.5" width="241.80" height="78.7" fill="#fff"/>
<path d="M515.70 121.32 L519.73 126.76 L523.76 131.56 L527.79 135.81 L531.82 139.60 L535.85 143.00 L539.88 146.06 L543.91 148.82 L547.94 151.32 L551.97 153.60 L556.00 155.68 L560.03 157.59 L564.06 159.34 L568.09 160.95 L572.12 162.43 L576.15 163.81 L580.18 165.09 L584.21 166.27 L588.24 167.38 L592.27 168.41 L596.30 169.37 L600.33 170.27 L604.36 171.11 L608.39 171.91 L612.42 172.65 L616.45 173.36 L620.48 174.02 L624.51 174.64 L628.54 175.23 L632.57 175.79 L636.60 176.32 L640.63 176.83 L644.66 177.31 L648.69 177.76 L652.72 178.19 L656.75 178.60 L660.78 179.00 L664.81 179.37 L668.84 179.73 L672.87 180.07 L676.90 180.39 L680.93 180.71 L684.96 181.01 L688.99 181.29 L693.02 181.57 L697.05 181.83 L701.08 182.08 L705.11 182.33 L709.14 182.56 L713.17 182.79 L717.20 183.00 L721.23 183.21 L725.26 183.41 L729.29 183.60 L733.32 183.79 L737.35 183.97 L741.38 184.15 L745.41 184.31 L749.44 184.48 L753.47 184.63 L757.50 184.78" fill="none" stroke="#7878ff" stroke-width="0.9"/>
<path d="M515.70 191.2 v-2.5 M515.70 112.5 v2.5 M556.00 191.2 v-2.5 M556.00 112.5 v2.5 M596.30 191.2 v-2.5 M596.30 112.5 v2.5 M636.60 191.2 v-2.5 M636.60 112.5 v2.5 M676.90 191.2 v-2.5 M676.90 112.5 v2.5 M717.20 191.2 v-2.5 M717.20 112.5 v2.5 M757.50 191.2 v-2.5 M757.50 112.5 v2.5 M515.7 191.20 h2.5 M757.5 191.20 h-2.5 M515.7 182.46 h2.5 M757.5 182.46 h-2.5 M515.7 173.71 h2.5 M757.5 173.71 h-2.5 M515.7 164.97 h2.5 M757.5 164.97 h-2.5 M515.7 156.22 h2.5 M757.5 156.22 h-2.5 M515.7 147.48 h2.5 M757.5 147.48 h-2.5 M515.7 138.73 h2.5 M757.5 138.73 h-2.5 M515.7 129.99 h2.5 M757.5 129.99 h-2.5 M515.7 121.24 h2.5 M757.5 121.24 h-2.5 M515.7 112.50 h2.5 M757.5 112.50 h-2.5" stroke="#444" stroke-width="0.6" fill="none"/>
<rect x="515.7" y="112.5" width="241.80" height="78.7" fill="none" stroke="#3a3a3a" stroke-width="1.1"/>
<text transform="translate(515.70 196.80) scale(1.3 1)" font-family='"Liberation Serif", serif' font-size="6.4" fill="#333" text-anchor="middle">100</text>
<text transform="translate(556.00 196.80) scale(1.3 1)" font-family='"Liberation Serif", serif' font-size="6.4" fill="#333" text-anchor="middle">150</text>
<text transform="translate(596.30 196.80) scale(1.3 1)" font-family='"Liberation Serif", serif' font-size="6.4" fill="#333" text-anchor="middle">200</text>
<text transform="translate(636.60 196.80) scale(1.3 1)" font-family='"Liberation Serif", serif' font-size="6.4" fill="#333" text-anchor="middle">250</text>
<text transform="translate(676.90 196.80) scale(1.3 1)" font-family='"Liberation Serif", serif' font-size="6.4" fill="#333" text-anchor="middle">300</text>
<text transform="translate(717.20 196.80) scale(1.3 1)" font-family='"Liberation Serif", serif' font-size="6.4" fill="#333" text-anchor="middle">350</text>
<text transform="translate(757.50 196.80) scale(1.3 1)" font-family='"Liberation Serif", serif' font-size="6.4" fill="#333" text-anchor="middle">400</text>
<text transform="translate(515.20 193.40) scale(1.3 1)" font-family='"Liberation Serif", serif' font-size="6.4" fill="#333" text-anchor="end">0.0</text>
<text transform="translate(515.20 184.66) scale(1.3 1)" font-family='"Liberation Serif", serif' font-size="6.4" fill="#333" text-anchor="end">0.5</text>
<text transform="translate(515.20 175.91) scale(1.3 1)" font-family='"Liberation Serif", serif' font-size="6.4" fill="#333" text-anchor="end">1.0</text>
<text transform="translate(515.20 167.17) scale(1.3 1)" font-family='"Liberation Serif", serif' font-size="6.4" fill="#333" text-anchor="end">1.5</text>
<text transform="translate(515.20 158.42) scale(1.3 1)" font-family='"Liberation Serif", serif' font-size="6.4" fill="#333" text-anchor="end">2.0</text>
<text transform="translate(515.20 149.68) scale(1.3 1)" font-family='"Liberation Serif", serif' font-size="6.4" fill="#333" text-anchor="end">2.5</text>
<text transform="translate(515.20 140.93) scale(1.3 1)" font-family='"Liberation Serif", serif' font-size="6.4" fill="#333" text-anchor="end">3.0</text>
<text transform="translate(515.20 132.19) scale(1.3 1)" font-family='"Liberation Serif", serif' font-size="6.4" fill="#333" text-anchor="end">3.5</text>
<text transform="translate(515.20 123.44) scale(1.3 1)" font-family='"Liberation Serif", serif' font-size="6.4" fill="#333" text-anchor="end">4.0</text>
<text transform="translate(515.20 114.70) scale(1.3 1)" font-family='"Liberation Serif", serif' font-size="6.4" fill="#333" text-anchor="end">4.5</text>
<text transform="translate(515.70 110.20) scale(1.08 1)" font-family='"Liberation Serif", serif' font-size="6.4" fill="#333">x1e+4</text>
<text x="503.2" y="151.85" transform="rotate(-90 503.2 151.85)" font-family='"Liberation Serif", serif' font-size="8.2" fill="#222" text-anchor="middle">Enclosed Volume</text>
<rect x="515.7" y="207.3" width="241.80" height="78.7" fill="#fff"/>
<path d="M515.70 214.88 L519.73 219.34 L523.76 223.39 L527.79 227.09 L531.82 230.47 L535.85 233.58 L539.88 236.44 L543.91 239.09 L547.94 241.55 L551.97 243.83 L556.00 245.96 L560.03 247.96 L564.06 249.82 L568.09 251.57 L572.12 253.22 L576.15 254.77 L580.18 256.23 L584.21 257.61 L588.24 258.92 L592.27 260.16 L596.30 261.34 L600.33 262.46 L604.36 263.53 L608.39 264.54 L612.42 265.51 L616.45 266.44 L620.48 267.32 L624.51 268.17 L628.54 268.98 L632.57 269.75 L636.60 270.50 L640.63 271.21 L644.66 271.90 L648.69 272.56 L652.72 273.20 L656.75 273.81 L660.78 274.40 L664.81 274.97 L668.84 275.52 L672.87 276.05 L676.90 276.57 L680.93 277.06 L684.96 277.54 L688.99 278.00 L693.02 278.45 L697.05 278.89 L701.08 279.31 L705.11 279.72 L709.14 280.12 L713.17 280.50 L717.20 280.88 L721.23 281.24 L725.26 281.59 L729.29 281.94 L733.32 282.27 L737.35 282.60 L741.38 282.91 L745.41 283.22 L749.44 283.52 L753.47 283.81 L757.50 284.10" fill="none" stroke="#7878ff" stroke-width="0.9"/>
<path d="M515.70 286.0 v-2.5 M515.70 207.3 v2.5 M556.00 286.0 v-2.5 M556.00 207.3 v2.5 M596.30 286.0 v-2.5 M596.30 207.3 v2.5 M636.60 286.0 v-2.5 M636.60 207.3 v2.5 M676.90 286.0 v-2.5 M676.90 207.3 v2.5 M717.20 286.0 v-2.5 M717.20 207.3 v2.5 M757.50 286.0 v-2.5 M757.50 207.3 v2.5 M515.7 286.00 h2.5 M757.5 286.00 h-2.5 M515.7 276.16 h2.5 M757.5 276.16 h-2.5 M515.7 266.32 h2.5 M757.5 266.32 h-2.5 M515.7 256.49 h2.5 M757.5 256.49 h-2.5 M515.7 246.65 h2.5 M757.5 246.65 h-2.5 M515.7 236.81 h2.5 M757.5 236.81 h-2.5 M515.7 226.97 h2.5 M757.5 226.97 h-2.5 M515.7 217.14 h2.5 M757.5 217.14 h-2.5 M515.7 207.30 h2.5 M757.5 207.30 h-2.5" stroke="#444" stroke-width="0.6" fill="none"/>
<rect x="515.7" y="207.3" width="241.80" height="78.7" fill="none" stroke="#3a3a3a" stroke-width="1.1"/>
<text transform="translate(515.70 291.60) scale(1.3 1)" font-family='"Liberation Serif", serif' font-size="6.4" fill="#333" text-anchor="middle">100</text>
<text transform="translate(556.00 291.60) scale(1.3 1)" font-family='"Liberation Serif", serif' font-size="6.4" fill="#333" text-anchor="middle">150</text>
<text transform="translate(596.30 291.60) scale(1.3 1)" font-family='"Liberation Serif", serif' font-size="6.4" fill="#333" text-anchor="middle">200</text>
<text transform="translate(636.60 291.60) scale(1.3 1)" font-family='"Liberation Serif", serif' font-size="6.4" fill="#333" text-anchor="middle">250</text>
<text transform="translate(676.90 291.60) scale(1.3 1)" font-family='"Liberation Serif", serif' font-size="6.4" fill="#333" text-anchor="middle">300</text>
<text transform="translate(717.20 291.60) scale(1.3 1)" font-family='"Liberation Serif", serif' font-size="6.4" fill="#333" text-anchor="middle">350</text>
<text transform="translate(757.50 291.60) scale(1.3 1)" font-family='"Liberation Serif", serif' font-size="6.4" fill="#333" text-anchor="middle">400</text>
<text transform="translate(515.20 288.20) scale(1.3 1)" font-family='"Liberation Serif", serif' font-size="6.4" fill="#333" text-anchor="end">0.5</text>
<text transform="translate(515.20 278.36) scale(1.3 1)" font-family='"Liberation Serif", serif' font-size="6.4" fill="#333" text-anchor="end">1.0</text>
<text transform="translate(515.20 268.52) scale(1.3 1)" font-family='"Liberation Serif", serif' font-size="6.4" fill="#333" text-anchor="end">1.5</text>
<text transform="translate(515.20 258.69) scale(1.3 1)" font-family='"Liberation Serif", serif' font-size="6.4" fill="#333" text-anchor="end">2.0</text>
<text transform="translate(515.20 248.85) scale(1.3 1)" font-family='"Liberation Serif", serif' font-size="6.4" fill="#333" text-anchor="end">2.5</text>
<text transform="translate(515.20 239.01) scale(1.3 1)" font-family='"Liberation Serif", serif' font-size="6.4" fill="#333" text-anchor="end">3.0</text>
<text transform="translate(515.20 229.17) scale(1.3 1)" font-family='"Liberation Serif", serif' font-size="6.4" fill="#333" text-anchor="end">3.5</text>
<text transform="translate(515.20 219.34) scale(1.3 1)" font-family='"Liberation Serif", serif' font-size="6.4" fill="#333" text-anchor="end">4.0</text>
<text transform="translate(515.20 209.50) scale(1.3 1)" font-family='"Liberation Serif", serif' font-size="6.4" fill="#333" text-anchor="end">4.5</text>
<text transform="translate(515.70 205.00) scale(1.08 1)" font-family='"Liberation Serif", serif' font-size="6.4" fill="#333">x1e+4</text>
<text x="503.2" y="246.65" transform="rotate(-90 503.2 246.65)" font-family='"Liberation Serif", serif' font-size="8.2" fill="#222" text-anchor="middle">Surface Area</text>
<rect x="515.7" y="302.1" width="241.80" height="78.7" fill="#fff"/>
<path d="M515.70 304.53 L519.73 305.45 L523.76 306.43 L527.79 307.44 L531.82 308.51 L535.85 309.61 L539.88 310.76 L543.91 311.95 L547.94 313.17 L551.97 314.43 L556.00 315.72 L560.03 317.04 L564.06 318.40 L568.09 319.78 L572.12 321.18 L576.15 322.61 L580.18 324.06 L584.21 325.53 L588.24 327.02 L592.27 328.52 L596.30 330.03 L600.33 331.56 L604.36 333.10 L608.39 334.64 L612.42 336.19 L616.45 337.74 L620.48 339.29 L624.51 340.84 L628.54 342.39 L632.57 343.94 L636.60 345.47 L640.63 347.00 L644.66 348.52 L648.69 350.03 L652.72 351.52 L656.75 352.99 L660.78 354.45 L664.81 355.89 L668.84 357.30 L672.87 358.69 L676.90 360.05 L680.93 361.38 L684.96 362.68 L688.99 363.95 L693.02 365.19 L697.05 366.39 L701.08 367.54 L705.11 368.66 L709.14 369.74 L713.17 370.77 L717.20 371.76 L721.23 372.69 L725.26 373.58 L729.29 374.41 L733.32 375.19 L737.35 375.92 L741.38 376.58 L745.41 377.18 L749.44 377.72 L753.47 378.20 L757.50 378.61" fill="none" stroke="#7878ff" stroke-width="0.9"/>
<path d="M515.70 380.8 v-2.5 M515.70 302.1 v2.5 M556.00 380.8 v-2.5 M556.00 302.1 v2.5 M596.30 380.8 v-2.5 M596.30 302.1 v2.5 M636.60 380.8 v-2.5 M636.60 302.1 v2.5 M676.90 380.8 v-2.5 M676.90 302.1 v2.5 M717.20 380.8 v-2.5 M717.20 302.1 v2.5 M757.50 380.8 v-2.5 M757.50 302.1 v2.5 M515.7 380.80 h2.5 M757.5 380.80 h-2.5 M515.7 370.96 h2.5 M757.5 370.96 h-2.5 M515.7 361.12 h2.5 M757.5 361.12 h-2.5 M515.7 351.29 h2.5 M757.5 351.29 h-2.5 M515.7 341.45 h2.5 M757.5 341.45 h-2.5 M515.7 331.61 h2.5 M757.5 331.61 h-2.5 M515.7 321.78 h2.5 M757.5 321.78 h-2.5 M515.7 311.94 h2.5 M757.5 311.94 h-2.5 M515.7 302.10 h2.5 M757.5 302.10 h-2.5" stroke="#444" stroke-width="0.6" fill="none"/>
<rect x="515.7" y="302.1" width="241.80" height="78.7" fill="none" stroke="#3a3a3a" stroke-width="1.1"/>
<text transform="translate(515.70 386.40) scale(1.3 1)" font-family='"Liberation Serif", serif' font-size="6.4" fill="#333" text-anchor="middle">100</text>
<text transform="translate(556.00 386.40) scale(1.3 1)" font-family='"Liberation Serif", serif' font-size="6.4" fill="#333" text-anchor="middle">150</text>
<text transform="translate(596.30 386.40) scale(1.3 1)" font-family='"Liberation Serif", serif' font-size="6.4" fill="#333" text-anchor="middle">200</text>
<text transform="translate(636.60 386.40) scale(1.3 1)" font-family='"Liberation Serif", serif' font-size="6.4" fill="#333" text-anchor="middle">250</text>
<text transform="translate(676.90 386.40) scale(1.3 1)" font-family='"Liberation Serif", serif' font-size="6.4" fill="#333" text-anchor="middle">300</text>
<text transform="translate(717.20 386.40) scale(1.3 1)" font-family='"Liberation Serif", serif' font-size="6.4" fill="#333" text-anchor="middle">350</text>
<text transform="translate(757.50 386.40) scale(1.3 1)" font-family='"Liberation Serif", serif' font-size="6.4" fill="#333" text-anchor="middle">400</text>
<text transform="translate(515.20 383.00) scale(1.3 1)" font-family='"Liberation Serif", serif' font-size="6.4" fill="#333" text-anchor="end">2.30</text>
<text transform="translate(515.20 373.16) scale(1.3 1)" font-family='"Liberation Serif", serif' font-size="6.4" fill="#333" text-anchor="end">2.35</text>
<text transform="translate(515.20 363.32) scale(1.3 1)" font-family='"Liberation Serif", serif' font-size="6.4" fill="#333" text-anchor="end">2.40</text>
<text transform="translate(515.20 353.49) scale(1.3 1)" font-family='"Liberation Serif", serif' font-size="6.4" fill="#333" text-anchor="end">2.45</text>
<text transform="translate(515.20 343.65) scale(1.3 1)" font-family='"Liberation Serif", serif' font-size="6.4" fill="#333" text-anchor="end">2.50</text>
<text transform="translate(515.20 333.81) scale(1.3 1)" font-family='"Liberation Serif", serif' font-size="6.4" fill="#333" text-anchor="end">2.55</text>
<text transform="translate(515.20 323.98) scale(1.3 1)" font-family='"Liberation Serif", serif' font-size="6.4" fill="#333" text-anchor="end">2.60</text>
<text transform="translate(515.20 314.14) scale(1.3 1)" font-family='"Liberation Serif", serif' font-size="6.4" fill="#333" text-anchor="end">2.65</text>
<text transform="translate(515.20 304.30) scale(1.3 1)" font-family='"Liberation Serif", serif' font-size="6.4" fill="#333" text-anchor="end">2.70</text>
<text x="499.8" y="341.45" transform="rotate(-90 499.8 341.45)" font-family='"Liberation Serif", serif' font-size="8.2" fill="#222" text-anchor="middle">Normalized Shape Index</text>
<rect x="515.7" y="396.9" width="241.80" height="78.7" fill="#fff"/>
<path d="M515.70 400.40 L519.73 404.19 L523.76 407.67 L527.79 410.88 L531.82 413.85 L535.85 416.60 L539.88 419.16 L543.91 421.55 L547.94 423.78 L551.97 425.88 L556.00 427.85 L560.03 429.70 L564.06 431.45 L568.09 433.11 L572.12 434.68 L576.15 436.16 L580.18 437.57 L584.21 438.92 L588.24 440.19 L592.27 441.41 L596.30 442.58 L600.33 443.69 L604.36 444.76 L608.39 445.78 L612.42 446.76 L616.45 447.70 L620.48 448.60 L624.51 449.47 L628.54 450.30 L632.57 451.11 L636.60 451.88 L640.63 452.63 L644.66 453.35 L648.69 454.05 L652.72 454.73 L656.75 455.38 L660.78 456.01 L664.81 456.62 L668.84 457.21 L672.87 457.79 L676.90 458.35 L680.93 458.89 L684.96 459.41 L688.99 459.92 L693.02 460.42 L697.05 460.90 L701.08 461.37 L705.11 461.82 L709.14 462.27 L713.17 462.70 L717.20 463.12 L721.23 463.53 L725.26 463.93 L729.29 464.32 L733.32 464.70 L737.35 465.07 L741.38 465.44 L745.41 465.79 L749.44 466.14 L753.47 466.47 L757.50 466.80" fill="none" stroke="#7878ff" stroke-width="0.9"/>
<path d="M515.70 475.59999999999997 v-2.5 M515.70 396.9 v2.5 M556.00 475.59999999999997 v-2.5 M556.00 396.9 v2.5 M596.30 475.59999999999997 v-2.5 M596.30 396.9 v2.5 M636.60 475.59999999999997 v-2.5 M636.60 396.9 v2.5 M676.90 475.59999999999997 v-2.5 M676.90 396.9 v2.5 M717.20 475.59999999999997 v-2.5 M717.20 396.9 v2.5 M757.50 475.59999999999997 v-2.5 M757.50 396.9 v2.5 M515.7 475.60 h2.5 M757.5 475.60 h-2.5 M515.7 466.86 h2.5 M757.5 466.86 h-2.5 M515.7 458.11 h2.5 M757.5 458.11 h-2.5 M515.7 449.37 h2.5 M757.5 449.37 h-2.5 M515.7 440.62 h2.5 M757.5 440.62 h-2.5 M515.7 431.88 h2.5 M757.5 431.88 h-2.5 M515.7 423.13 h2.5 M757.5 423.13 h-2.5 M515.7 414.39 h2.5 M757.5 414.39 h-2.5 M515.7 405.64 h2.5 M757.5 405.64 h-2.5 M515.7 396.90 h2.5 M757.5 396.90 h-2.5" stroke="#444" stroke-width="0.6" fill="none"/>
<rect x="515.7" y="396.9" width="241.80" height="78.7" fill="none" stroke="#3a3a3a" stroke-width="1.1"/>
<text transform="translate(515.70 481.20) scale(1.3 1)" font-family='"Liberation Serif", serif' font-size="6.4" fill="#333" text-anchor="middle">100</text>
<text transform="translate(556.00 481.20) scale(1.3 1)" font-family='"Liberation Serif", serif' font-size="6.4" fill="#333" text-anchor="middle">150</text>
<text transform="translate(596.30 481.20) scale(1.3 1)" font-family='"Liberation Serif", serif' font-size="6.4" fill="#333" text-anchor="middle">200</text>
<text transform="translate(636.60 481.20) scale(1.3 1)" font-family='"Liberation Serif", serif' font-size="6.4" fill="#333" text-anchor="middle">250</text>
<text transform="translate(676.90 481.20) scale(1.3 1)" font-family='"Liberation Serif", serif' font-size="6.4" fill="#333" text-anchor="middle">300</text>
<text transform="translate(717.20 481.20) scale(1.3 1)" font-family='"Liberation Serif", serif' font-size="6.4" fill="#333" text-anchor="middle">350</text>
<text transform="translate(757.50 481.20) scale(1.3 1)" font-family='"Liberation Serif", serif' font-size="6.4" fill="#333" text-anchor="middle">400</text>
<text transform="translate(515.20 477.80) scale(1.3 1)" font-family='"Liberation Serif", serif' font-size="6.4" fill="#333" text-anchor="end">0.55</text>
<text transform="translate(515.20 469.06) scale(1.3 1)" font-family='"Liberation Serif", serif' font-size="6.4" fill="#333" text-anchor="end">0.60</text>
<text transform="translate(515.20 460.31) scale(1.3 1)" font-family='"Liberation Serif", serif' font-size="6.4" fill="#333" text-anchor="end">0.65</text>
<text transform="translate(515.20 451.57) scale(1.3 1)" font-family='"Liberation Serif", serif' font-size="6.4" fill="#333" text-anchor="end">0.70</text>
<text transform="translate(515.20 442.82) scale(1.3 1)" font-family='"Liberation Serif", serif' font-size="6.4" fill="#333" text-anchor="end">0.75</text>
<text transform="translate(515.20 434.08) scale(1.3 1)" font-family='"Liberation Serif", serif' font-size="6.4" fill="#333" text-anchor="end">0.80</text>
<text transform="translate(515.20 425.33) scale(1.3 1)" font-family='"Liberation Serif", serif' font-size="6.4" fill="#333" text-anchor="end">0.85</text>
<text transform="translate(515.20 416.59) scale(1.3 1)" font-family='"Liberation Serif", serif' font-size="6.4" fill="#333" text-anchor="end">0.90</text>
<text transform="translate(515.20 407.84) scale(1.3 1)" font-family='"Liberation Serif", serif' font-size="6.4" fill="#333" text-anchor="end">0.95</text>
<text transform="translate(515.20 399.10) scale(1.3 1)" font-family='"Liberation Serif", serif' font-size="6.4" fill="#333" text-anchor="end">1.00</text>
<text x="499.8" y="436.25" transform="rotate(-90 499.8 436.25)" font-family='"Liberation Serif", serif' font-size="8.2" fill="#222" text-anchor="middle">Volume / Surface Area</text>
<text transform="translate(636.60 108.2) scale(1.14 1)" font-family='"Liberation Serif", serif' font-size="9.2" fill="#2a2a2a" text-anchor="middle">Iso-Surface Analyses</text>
<text x="636.60" y="489" font-family='"Liberation Serif", serif' font-size="8.2" fill="#222" text-anchor="middle">Iso-Value</text>
<rect x="478.5" y="525.3" width="12.5" height="13.3" rx="1.5" fill="#efedea" stroke="#bdb9b3" stroke-width="0.9"/>
<rect x="493" y="525.3" width="12.2" height="13.3" rx="1.5" fill="#efedea" stroke="#bdb9b3" stroke-width="0.9"/>
<rect x="507" y="525.3" width="12.5" height="13.3" rx="1.5" fill="#efedea" stroke="#bdb9b3" stroke-width="0.9"/>
<rect x="524.3" y="525.3" width="12.7" height="13.3" rx="1.5" fill="#efedea" stroke="#bdb9b3" stroke-width="0.9"/>
<rect x="538.8" y="525.3" width="12.5" height="13.3" rx="1.5" fill="#efedea" stroke="#bdb9b3" stroke-width="0.9"/>
<rect x="556.4" y="525.3" width="12.8" height="13.3" rx="1.5" fill="#efedea" stroke="#bdb9b3" stroke-width="0.9"/>
<rect x="570.8" y="525.3" width="12.7" height="13.3" rx="1.5" fill="#efedea" stroke="#bdb9b3" stroke-width="0.9"/>
<path d="M482 532.5 V537 H488.5 V532.5 L485.2 529.5 Z" fill="#a9b1ba"/>
<rect x="483.6" y="532" width="3.4" height="5" rx="1" fill="#f2b632"/>
<path d="M480 533.2 L485.2 528 L490.3 533.2" fill="none" stroke="#b8202e" stroke-width="1.5"/>
<circle cx="481.6" cy="527.8" r="0.8" fill="#f0b040"/>
<circle cx="499.1" cy="532" r="5.3" fill="#1889a6"/>
<circle cx="498.1" cy="530.6" r="3" fill="#3cc0d8" opacity="0.5"/>
<path d="M495.9 532 L498.9 529.2 V530.9 H502.1 V533.1 H498.9 V534.8 Z" fill="#e8f6fa"/>
<circle cx="513.2" cy="532" r="5.3" fill="#1889a6"/>
<circle cx="512.2" cy="530.6" r="3" fill="#3cc0d8" opacity="0.5"/>
<path d="M516.4 532 L513.4 529.2 V530.9 H510.2 V533.1 H513.4 V534.8 Z" fill="#e8f6fa"/>
<path d="M530.6 527 V537.2 M525.6 532.1 H535.7" stroke="#1a5f86" stroke-width="1.6"/>
<path d="M530.6 526.3 L528.6 528.6 H532.6 Z M530.6 537.9 L528.6 535.6 H532.6 Z M524.9 532.1 L527.2 530.1 V534.1 Z M536.4 532.1 L534.1 530.1 V534.1 Z" fill="#1a5f86"/>
<rect x="542" y="530" width="8" height="6.5" fill="#f6fbfc" stroke="#9fd0dc" stroke-width="0.6"/>
<circle cx="543.8" cy="533.5" r="3.6" fill="#9ed3df"/>
<circle cx="543.8" cy="533.5" r="1.4" fill="#5aa8b8"/>
<path d="M546.5 530.8 L550 527.2" stroke="#f0a040" stroke-width="1.8"/>
<rect x="558.8" y="527.6" width="8" height="8.6" rx="1.5" fill="#4a7ab0" stroke="#333" stroke-width="0.9"/>
<rect x="561" y="530.5" width="3.6" height="3" fill="#e8eef4"/>
<circle cx="562.8" cy="527.4" r="0.9" fill="#28b030"/>
<circle cx="562.8" cy="536.4" r="0.9" fill="#28b030"/>
<circle cx="558.6" cy="532" r="0.9" fill="#28b030"/>
<circle cx="567" cy="532" r="0.9" fill="#28b030"/>
<rect x="572.3" y="527.5" width="8.6" height="9.5" rx="0.8" fill="#2b6a98"/>
<rect x="574" y="527.5" width="5.2" height="3.2" fill="#dfe6ee"/>
<rect x="574.5" y="533.2" width="4.2" height="3.8" fill="#9ab8d0"/>
</svg>
</body></html>
